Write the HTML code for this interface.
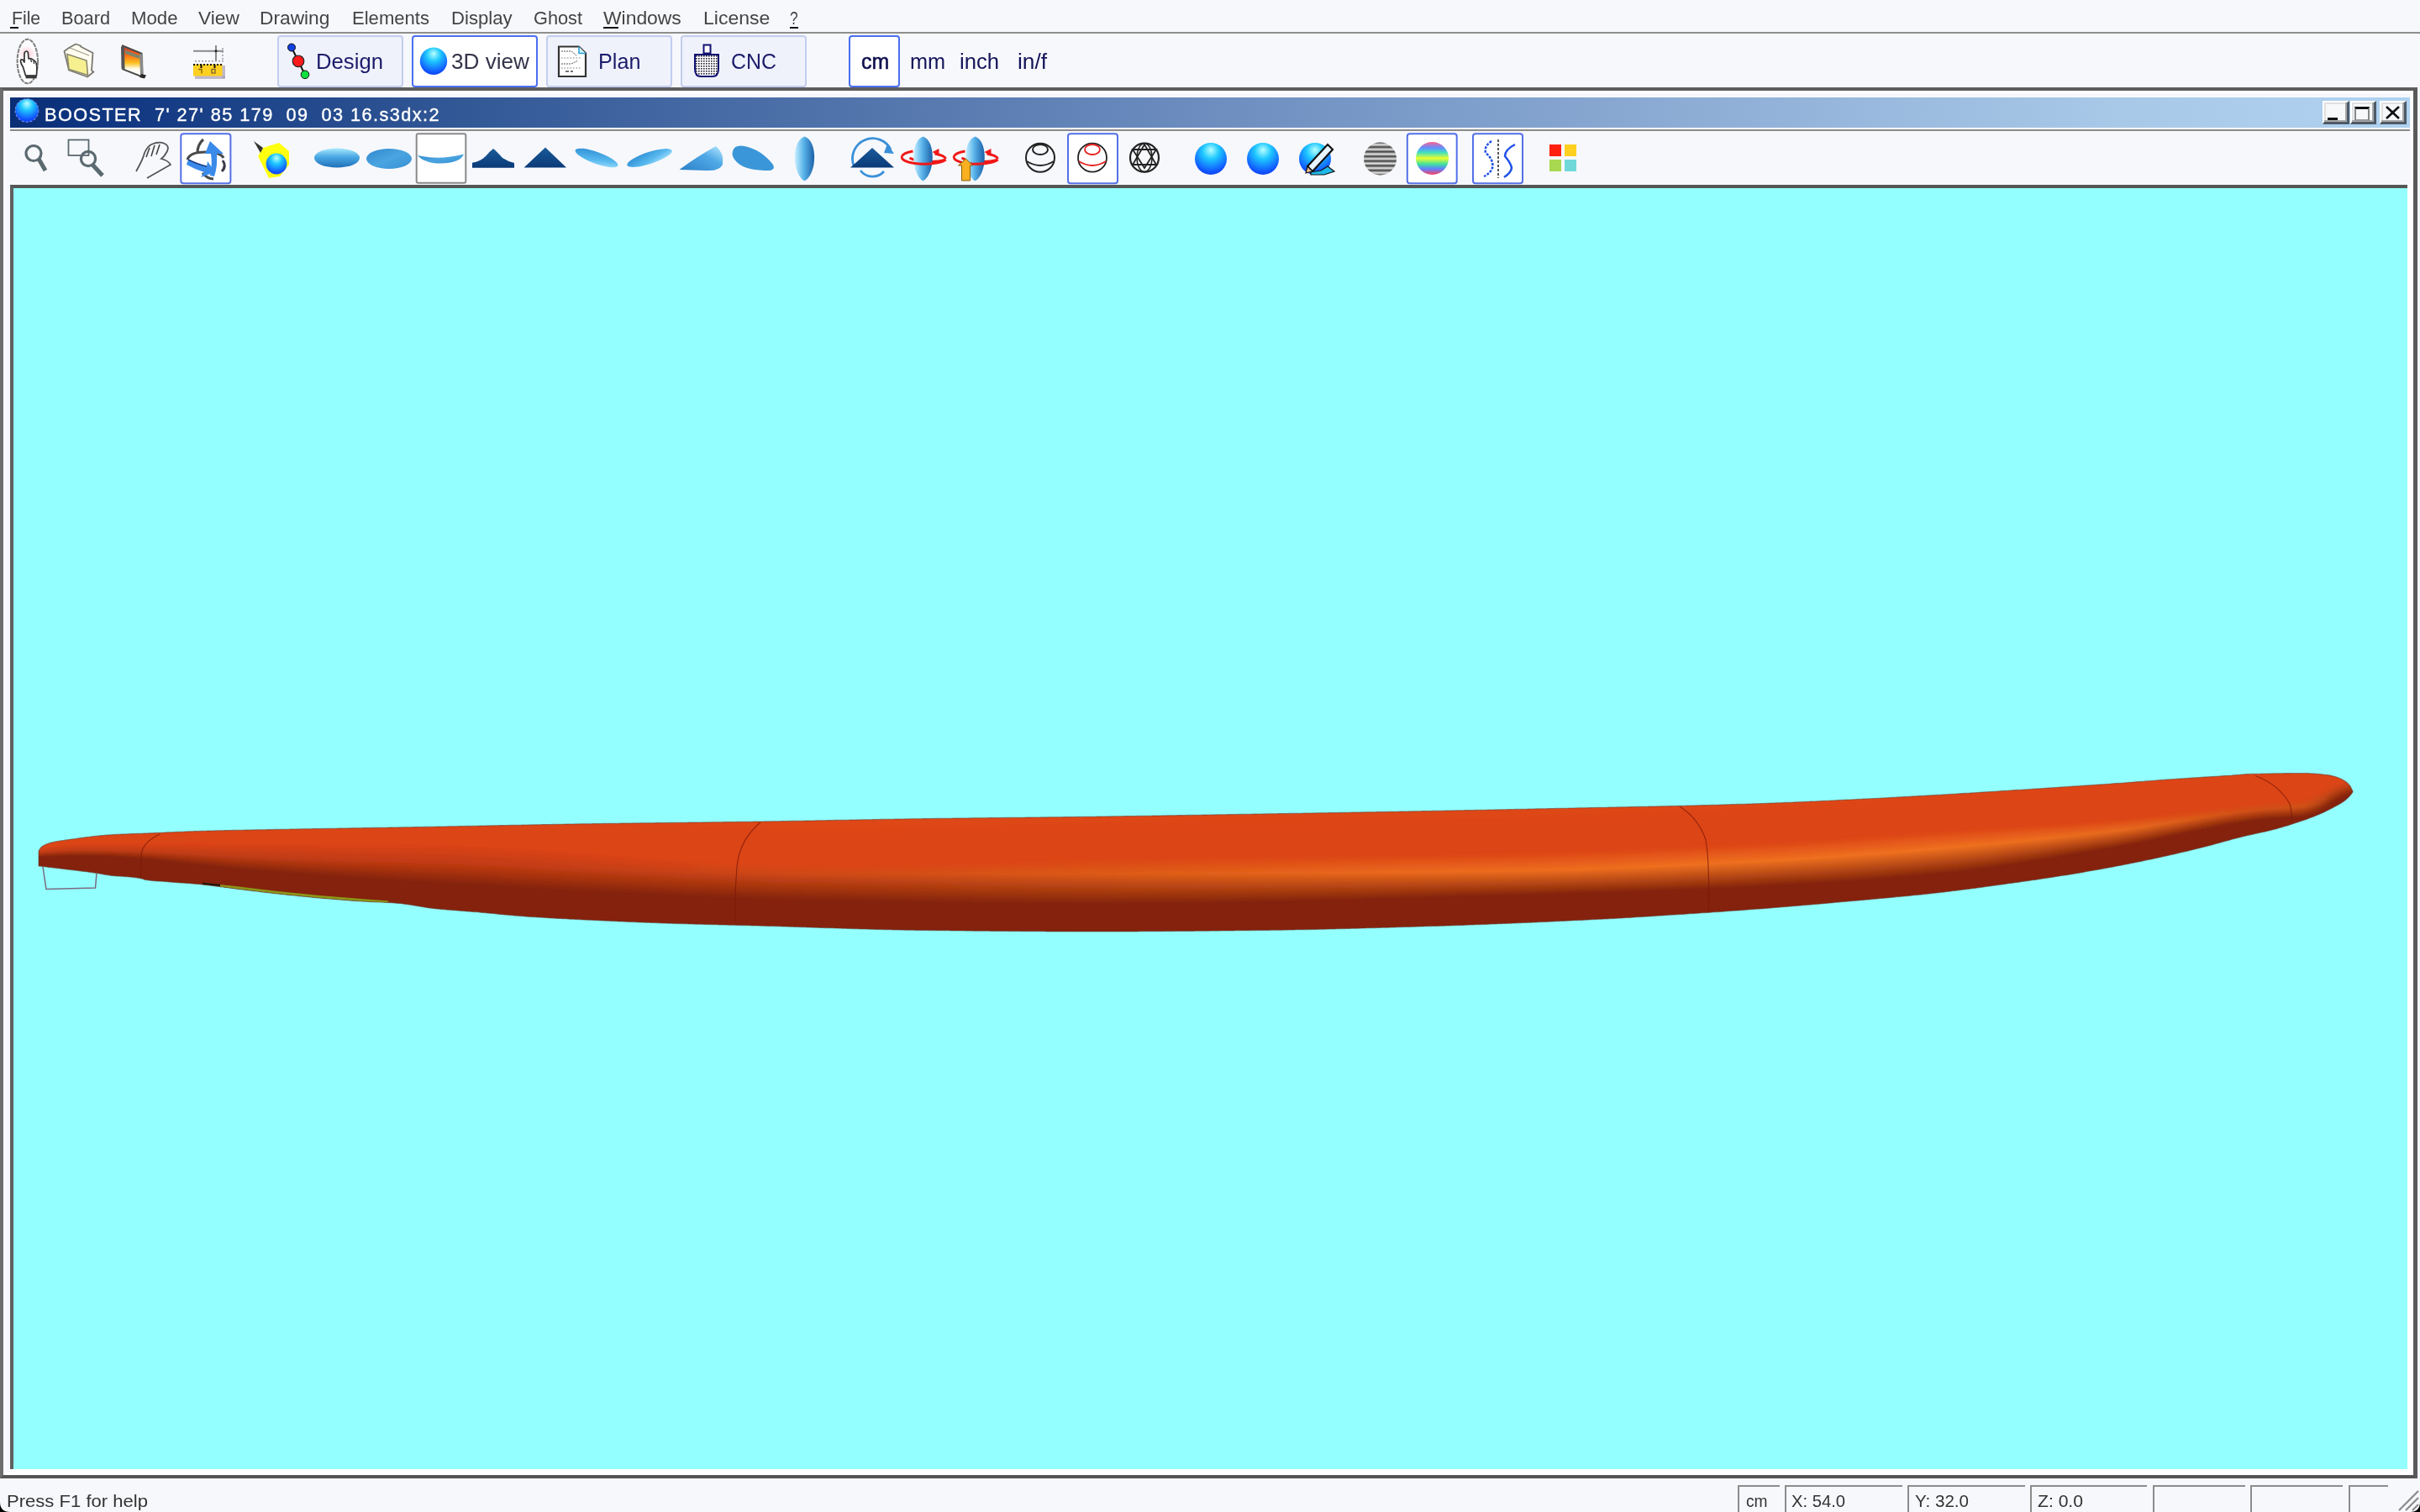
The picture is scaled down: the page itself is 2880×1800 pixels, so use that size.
<!DOCTYPE html>
<html><head><meta charset="utf-8"><style>
html,body{margin:0;padding:0;}
body{width:2880px;height:1800px;position:relative;overflow:hidden;background:#f7f8fc;font-family:"Liberation Sans", sans-serif;}
.r{position:absolute;}
.t{position:absolute;white-space:nowrap;line-height:1;}
.t span{display:inline-block;transform-origin:0 0;}
</style></head><body>
<div class="t" style="left:13.5px;top:11.38px;font-size:22px;color:#444444;font-weight:normal;"><span style="transform:scaleX(0.9618)">File</span></div><div class="t" style="left:73px;top:11.38px;font-size:22px;color:#444444;font-weight:normal;"><span style="transform:scaleX(0.9878)">Board</span></div><div class="t" style="left:156.2px;top:11.38px;font-size:22px;color:#444444;font-weight:normal;"><span style="transform:scaleX(1.0100)">Mode</span></div><div class="t" style="left:235.7px;top:11.38px;font-size:22px;color:#444444;font-weight:normal;"><span style="transform:scaleX(1.0318)">View</span></div><div class="t" style="left:309.3px;top:11.38px;font-size:22px;color:#444444;font-weight:normal;"><span style="transform:scaleX(1.0334)">Drawing</span></div><div class="t" style="left:419px;top:11.38px;font-size:22px;color:#444444;font-weight:normal;"><span style="transform:scaleX(1.0031)">Elements</span></div><div class="t" style="left:537.4px;top:11.38px;font-size:22px;color:#444444;font-weight:normal;"><span style="transform:scaleX(1.0064)">Display</span></div><div class="t" style="left:635px;top:11.38px;font-size:22px;color:#444444;font-weight:normal;"><span style="transform:scaleX(0.9880)">Ghost</span></div><div class="t" style="left:717.9px;top:11.38px;font-size:22px;color:#444444;font-weight:normal;"><span style="transform:scaleX(1.0398)">Windows</span></div><div class="t" style="left:836.9px;top:11.38px;font-size:22px;color:#444444;font-weight:normal;"><span style="transform:scaleX(1.0469)">License</span></div><div class="t" style="left:940.4px;top:11.38px;font-size:22px;color:#444444;font-weight:normal;"><span style="transform:scaleX(0.7837)">?</span></div><div class="r" style="left:12px;top:32px;width:10px;height:2px;background:#111"></div><div class="r" style="left:718px;top:32px;width:18px;height:2px;background:#111"></div><div class="r" style="left:940px;top:32px;width:10px;height:2px;background:#111"></div><div class="r" style="left:0;top:38px;width:2880px;height:2px;background:#8e8e8e"></div><div class="r" style="left:330px;top:42px;width:150px;height:62px;box-sizing:border-box;border:2px solid #c3cdf0;border-radius:4px;background:#eff2fb"></div><div class="r" style="left:490px;top:42px;width:150px;height:62px;box-sizing:border-box;border:2px solid #4b6ff0;border-radius:4px;background:#ffffff"></div><div class="r" style="left:650px;top:42px;width:150px;height:62px;box-sizing:border-box;border:2px solid #c3cdf0;border-radius:4px;background:#eff2fb"></div><div class="r" style="left:810px;top:42px;width:150px;height:62px;box-sizing:border-box;border:2px solid #c3cdf0;border-radius:4px;background:#eff2fb"></div><div class="r" style="left:1010px;top:42px;width:61px;height:62px;box-sizing:border-box;border:2px solid #4b6ff0;border-radius:4px;background:#ffffff"></div><div class="t" style="left:375.5px;top:59.99px;font-size:26px;color:#1c1c6a;font-weight:normal;"><span style="transform:scaleX(0.9884)">Design</span></div><div class="t" style="left:537px;top:59.99px;font-size:26px;color:#34344a;font-weight:normal;"><span style="transform:scaleX(1.0056)">3D view</span></div><div class="t" style="left:711.6px;top:59.99px;font-size:26px;color:#1c1c6a;font-weight:normal;"><span style="transform:scaleX(0.9684)">Plan</span></div><div class="t" style="left:869.7px;top:59.99px;font-size:26px;color:#1c1c6a;font-weight:normal;"><span style="transform:scaleX(0.9584)">CNC</span></div><div class="t" style="left:1024.8px;top:59.99px;font-size:26px;color:#101050;font-weight:normal;-webkit-text-stroke:0.6px #101050;"><span style="transform:scaleX(0.9575)">cm</span></div><div class="t" style="left:1082.7px;top:59.99px;font-size:26px;color:#14145a;font-weight:normal;"><span style="transform:scaleX(0.9740)">mm</span></div><div class="t" style="left:1142.4px;top:59.99px;font-size:26px;color:#14145a;font-weight:normal;"><span style="transform:scaleX(0.9874)">inch</span></div><div class="t" style="left:1210.6px;top:59.99px;font-size:26px;color:#14145a;font-weight:normal;"><span style="transform:scaleX(1.0119)">in/f</span></div><div class="r" style="left:0;top:104px;width:2877px;height:1656px;box-sizing:border-box;border-top:4px solid #5e5e5e;border-left:4px solid #6e6e6e;border-right:5px solid #5a5a5a;border-bottom:4px solid #555"></div><div class="r" style="left:4px;top:108px;width:2868px;height:1648px;background:#f7f8fc;box-sizing:border-box;border:3px solid #ffffff"></div><div class="r" style="left:2865px;top:220px;width:7px;height:1536px;background:#ffffff"></div><div class="r" style="left:12px;top:1749px;width:2860px;height:7px;background:#ffffff"></div><div class="r" style="left:12px;top:116px;width:2856px;height:36px;background:linear-gradient(to right,#0a2e74 0%,#0e3480 3.1%,#325896 18.8%,#6e8ec0 50.3%,#a8c8e8 87.5%,#b0d2f0 100%)"></div><div class="t" style="left:53px;top:126.15px;font-size:22.5px;color:#ffffff;font-weight:normal;letter-spacing:1.5px;-webkit-text-stroke:0.4px #ffffff;"><span style="transform:scaleX(0.9635)">BOOSTER&nbsp; 7' 27' 85 179&nbsp; 09&nbsp; 03 16.s3dx:2</span></div><svg class="r" style="left:16px;top:116px" width="32" height="32" viewBox="0 0 32 32"><defs><radialGradient id="tsph" cx="0.5" cy="0.3" r="0.75" fx="0.5" fy="0.2"><stop offset="0" stop-color="#c0ffff"/><stop offset="0.35" stop-color="#20c8ff"/><stop offset="0.85" stop-color="#1048ff"/><stop offset="1" stop-color="#1040e0"/></radialGradient></defs><circle cx="16" cy="15.5" r="13.8" fill="url(#tsph)" stroke="#6a8ae8" stroke-width="1.2" stroke-dasharray="3 2"/></svg><div class="r" style="left:2764px;top:120px;width:32px;height:28px;box-sizing:border-box;background:#f6f8fa;border-top:2px solid #ffffff;border-left:2px solid #ffffff;border-right:3px solid #4e5a68;border-bottom:3px solid #4e5a68;box-shadow:inset -2px -2px 0 #a8a8a8, inset 2px 2px 0 #e0e0e0"></div><div class="r" style="left:2770px;top:140px;width:12px;height:3px;background:#111"></div><div class="r" style="left:2797px;top:120px;width:31px;height:28px;box-sizing:border-box;background:#f6f8fa;border-top:2px solid #ffffff;border-left:2px solid #ffffff;border-right:3px solid #4e5a68;border-bottom:3px solid #4e5a68;box-shadow:inset -2px -2px 0 #a8a8a8, inset 2px 2px 0 #e0e0e0"></div><div class="r" style="left:2802px;top:127px;width:18px;height:17px;box-sizing:border-box;border-top:3px solid #111;border-left:2px solid #888;border-right:2px solid #888;border-bottom:2px solid #999"></div><div class="r" style="left:2832px;top:120px;width:32px;height:28px;box-sizing:border-box;background:#f6f8fa;border-top:2px solid #ffffff;border-left:2px solid #ffffff;border-right:3px solid #4e5a68;border-bottom:3px solid #4e5a68;box-shadow:inset -2px -2px 0 #a8a8a8, inset 2px 2px 0 #e0e0e0"></div><svg class="r" style="left:2832px;top:120px" width="32" height="28"><path d="M8,7 L23,21 M23,7 L8,21" stroke="#111" stroke-width="2.6"/><circle cx="15.5" cy="14" r="2.2" fill="#111"/></svg><div class="r" style="left:12px;top:154px;width:2856px;height:2px;background:#8a8a8a"></div><div class="r" style="left:12px;top:220px;width:2853px;height:1529px;background:#94ffff;box-sizing:border-box;border-top:4px solid #555;border-left:4px solid #606060"></div><svg class="r" style="left:0;top:0" width="2880" height="240" viewBox="0 0 2880 240"><defs><radialGradient id="sph" cx="0.5" cy="0.3" r="0.75" fx="0.5" fy="0.21999999999999997">
<stop offset="0" stop-color="#b8ffff"/><stop offset="0.35" stop-color="#1ec8ff"/><stop offset="0.85" stop-color="#1050ff"/><stop offset="1" stop-color="#1040e0"/></radialGradient><linearGradient id="lensV" x1="0" x2="1" y1="0" y2="0"><stop offset="0" stop-color="#c8f0ff"/><stop offset="0.45" stop-color="#5ab4ea"/><stop offset="1" stop-color="#1a60a8"/></linearGradient><linearGradient id="ellH" x1="0" x2="0" y1="0" y2="1"><stop offset="0" stop-color="#a8eaff"/><stop offset="0.45" stop-color="#4aa8e4"/><stop offset="1" stop-color="#2070b8"/></linearGradient><linearGradient id="ellH2" x1="0" x2="1" y1="0" y2="1"><stop offset="0" stop-color="#2e88cc"/><stop offset="0.5" stop-color="#4aa4e0"/><stop offset="1" stop-color="#3890d4"/></linearGradient><linearGradient id="tri" x1="0" x2="0" y1="0" y2="1"><stop offset="0" stop-color="#1a5a9a"/><stop offset="1" stop-color="#0a3a78"/></linearGradient><linearGradient id="tiltE" x1="0" x2="1" y1="0" y2="1"><stop offset="0" stop-color="#2888d0"/><stop offset="0.6" stop-color="#58b8ee"/><stop offset="1" stop-color="#b0e8ff"/></linearGradient><linearGradient id="wedge" x1="0" x2="1" y1="1" y2="0"><stop offset="0" stop-color="#2a80c8"/><stop offset="0.6" stop-color="#50a8e6"/><stop offset="1" stop-color="#b8eaff"/></linearGradient><linearGradient id="flop" x1="0" x2="0" y1="0" y2="1"><stop offset="0" stop-color="#c04040"/><stop offset="0.25" stop-color="#ff5a10"/><stop offset="0.55" stop-color="#ffc020"/><stop offset="0.75" stop-color="#fffff0"/><stop offset="1" stop-color="#ffffff"/></linearGradient><linearGradient id="rainb" x1="0" x2="0" y1="0" y2="1"><stop offset="0" stop-color="#ff6090"/><stop offset="0.18" stop-color="#6090ff"/><stop offset="0.32" stop-color="#40e0c0"/><stop offset="0.5" stop-color="#e8ff30"/><stop offset="0.68" stop-color="#40e0a0"/><stop offset="0.82" stop-color="#6080ff"/><stop offset="1" stop-color="#ff4060"/></linearGradient><linearGradient id="stripe" x1="0" x2="0" y1="0" y2="1"><stop offset="0.000" stop-color="#404040"/><stop offset="0.071" stop-color="#e8e8e8"/><stop offset="0.143" stop-color="#404040"/><stop offset="0.214" stop-color="#e8e8e8"/><stop offset="0.286" stop-color="#404040"/><stop offset="0.357" stop-color="#e8e8e8"/><stop offset="0.429" stop-color="#404040"/><stop offset="0.500" stop-color="#e8e8e8"/><stop offset="0.571" stop-color="#404040"/><stop offset="0.643" stop-color="#e8e8e8"/><stop offset="0.714" stop-color="#404040"/><stop offset="0.786" stop-color="#e8e8e8"/><stop offset="0.857" stop-color="#404040"/><stop offset="0.929" stop-color="#e8e8e8"/><stop offset="1.000" stop-color="#404040"/></linearGradient><radialGradient id="pinkg" cx="0.5" cy="0.5" r="0.5"><stop offset="0" stop-color="#ffb8c4" stop-opacity="0.9"/><stop offset="1" stop-color="#ffd0d8" stop-opacity="0"/></radialGradient><pattern id="dots" width="3" height="3" patternUnits="userSpaceOnUse"><rect width="3" height="3" fill="#fff"/><rect width="1.6" height="1.6" fill="#223"/></pattern></defs><ellipse cx="32.8" cy="73" rx="12.2" ry="26.3" fill="#fdfdff" stroke="#7e7e7e" stroke-width="2" stroke-dasharray="5 1"/>
<ellipse cx="32" cy="64" rx="11" ry="10" fill="url(#pinkg)"/>
<path d="M30.5,90 L27.5,80 Q25,76 24.5,73 Q24.5,70 27,71 L29,74 L29,64 Q29.5,61 31.5,61 Q33.5,61 33.5,64 L34,70 Q37,69 39,71 Q42,72 43,75 Q44.5,79 43.8,84 L43.5,90 Z" fill="#fff" stroke="#333" stroke-width="1.7" stroke-linejoin="round"/>
<path d="M36.5,70.5 L37.5,74 M40,72 L40.5,76" stroke="#333" stroke-width="1.3"/>
<rect x="30.5" y="89.5" width="13.2" height="3.8" fill="#3a3a3a"/><path d="M76.5,61 L82,57 L90,52.5 L95,54 L97,56 L110.5,63 L109,84 L111.5,85.5 L104,91.5 L82,83.5 Z" fill="#fffdf0" stroke="#7a7a72" stroke-width="1.8" stroke-linejoin="round"/>
<path d="M80,64.5 L103,72 L104.5,89.5 L82,82.5 Z" fill="#f6f090" stroke="#8a8a70" stroke-width="1.6"/>
<path d="M83,57 L106,66" stroke="#9a9a90" stroke-width="1.2"/><path d="M146,54.5 L168.5,63.8 L169.5,91.5 L146.2,82.4 Z" fill="url(#flop)" stroke="#4a4a4a" stroke-width="2"/>
<path d="M144,55.5 L148,54.5 L148.5,83 L144.5,81.5 Z" fill="#555"/>
<path d="M149,59.5 L166,66 L166,70 L149,64 Z" fill="#6a8a78" opacity="0.85"/>
<path d="M166,64 L170,64.5 L170.5,91 L167,89 Z" fill="#8a8a8a"/>
<path d="M168,88 L174,89.5 L172,93.5 L166,92 Z" fill="#2a2a2a"/><line x1="230" y1="60.8" x2="266" y2="60.8" stroke="#8a8a8a" stroke-width="2"/>
<line x1="257" y1="54" x2="257" y2="73" stroke="#8a8a8a" stroke-width="2"/>
<circle cx="257" cy="60.8" r="1.5" fill="#222"/>
<line x1="232" y1="72.8" x2="266" y2="72.8" stroke="#9a9aa8" stroke-width="1.5" stroke-dasharray="2 2"/>
<line x1="265" y1="57" x2="265" y2="73" stroke="#9a9aa8" stroke-width="1.5" stroke-dasharray="2 2"/>
<rect x="232" y="90" width="36" height="4" fill="#a8a0b8" opacity="0.7"/>
<rect x="264" y="78" width="4" height="15" fill="#a8a0b8" opacity="0.7"/>
<rect x="230" y="76.5" width="34.5" height="14" fill="#ffd020"/>
<line x1="230" y1="77" x2="264" y2="77" stroke="#111" stroke-width="2" stroke-dasharray="2 2"/>
<rect x="238.5" y="77" width="2" height="4" fill="#111"/><rect x="254.5" y="77" width="2" height="4" fill="#111"/>
<path d="M236,82.5 h4 v5" fill="none" stroke="#8a6a10" stroke-width="1.4"/>
<rect x="252" y="82.5" width="4" height="4.5" fill="none" stroke="#8a6a30" stroke-width="1.4"/><line x1="347" y1="56.5" x2="363" y2="89" stroke="#111" stroke-width="2"/>
<circle cx="347" cy="56.5" r="4.5" fill="#1040e0" stroke="#111" stroke-width="1"/>
<circle cx="355" cy="72.8" r="6.8" fill="#ff1a1a" stroke="#222" stroke-width="1.2"/>
<circle cx="363" cy="88.8" r="4.8" fill="#10e040" stroke="#111" stroke-width="1"/><circle cx="516" cy="72.8" r="16.2" fill="url(#sph)"/><path d="M665,55.5 L689,55.5 L697,63.5 L697,91 L665,91 Z" fill="#fff" stroke="#333" stroke-width="2.2"/>
<path d="M689,55.5 L689,63.5 L697,63.5" fill="#cfefff" stroke="#2aa0d0" stroke-width="1.5"/>
<path d="M668,61 h12 l6,5" fill="none" stroke="#555" stroke-width="1" stroke-dasharray="2 1"/>
<path d="M668,69 h24" fill="none" stroke="#777" stroke-width="1" stroke-dasharray="1.5 2"/>
<path d="M668,76 h12 l8,-4" fill="none" stroke="#555" stroke-width="1" stroke-dasharray="2 1"/>
<path d="M668,81 h24" fill="none" stroke="#777" stroke-width="1" stroke-dasharray="1.5 2"/>
<path d="M673,85 h4 M679,85 h3" stroke="#444" stroke-width="1.5"/><rect x="837.5" y="53.5" width="8" height="10" fill="#fff" stroke="#101070" stroke-width="2"/>
<path d="M827,65 L855,65 L855,82 Q855,91 848,91 L834,91 Q827,91 827,82 Z" fill="url(#dots)" stroke="#101070" stroke-width="2"/><rect x="215.3" y="159.2" width="59.099999999999966" height="59" rx="3" fill="#ffffff" stroke="#5470e8" stroke-width="2"/><rect x="495.7" y="159.2" width="58.6" height="58.6" rx="2" fill="#ffffff" stroke="#8a8a8a" stroke-width="2"/><rect x="1271" y="159.2" width="59" height="59" rx="3" fill="#ffffff" stroke="#5470e8" stroke-width="2"/><rect x="1674.8" y="159.2" width="58.90000000000009" height="59" rx="3" fill="#ffffff" stroke="#5470e8" stroke-width="2"/><rect x="1753" y="159.2" width="59" height="59" rx="3" fill="#ffffff" stroke="#5470e8" stroke-width="2"/><circle cx="40" cy="182.5" r="9" fill="none" stroke="#5a6a70" stroke-width="3.2"/>
<line x1="46" y1="189" x2="54" y2="203" stroke="#5a6a70" stroke-width="5" stroke-linecap="butt"/><rect x="81.5" y="166.5" width="24" height="18.5" fill="none" stroke="#5a6a70" stroke-width="1.8"/>
<circle cx="105" cy="189" r="8.6" fill="none" stroke="#5a6a70" stroke-width="3.2"/>
<line x1="110" y1="196" x2="122" y2="209" stroke="#5a6a70" stroke-width="5"/><path d="M162,204 Q170,190 172,182 Q175,175 180,172 L186,170 Q192,169 196,171 Q202,174 199,180 Q196,186 192,189 Q200,191 203,196 L175,212" fill="none" stroke="#555" stroke-width="1.8"/>
<path d="M178,176 L174,187 M184,173 L180,186 M190,172 L186,184" stroke="#444" stroke-width="1.6"/><path d="M242,166 Q235,172 235,182" fill="none" stroke="#4a4a4a" stroke-width="3.2"/>
<path d="M223,190 Q226,181 244,181 Q262,181 266,188" fill="none" stroke="#4a4a4a" stroke-width="3.2"/>
<path d="M265,191 Q270,198 264,204" fill="none" stroke="#3a3a4a" stroke-width="3"/>
<path d="M241,206 Q247,213 254,213" fill="none" stroke="#4a4a4a" stroke-width="3.2"/>
<path d="M250,168 L266,183 L258,183 Q259,198 255,210 L250,209 Q253,196 251,183 L244,183 Z" fill="#3a8aea"/>
<path d="M224,190 Q236,196 246,198 L247,192 L256,205 L239,211 L243,205 Q233,202 222,196 Z" fill="#3a8aea"/>
<path d="M246,198 Q236,196 224,190" fill="none" stroke="#1a3a8a" stroke-width="1.5"/><path d="M313,176 L332,170 L344,180 L344,196 L333,210 L320,212 L307,186 Z" fill="#ffff10"/>
<path d="M302,168 L313,176 L310,182 Z" fill="#333"/>
<circle cx="329" cy="195" r="12.4" fill="url(#sph)"/><ellipse cx="401" cy="188" rx="27" ry="11.5" fill="url(#ellH)"/><ellipse cx="463" cy="189" rx="27" ry="12" fill="url(#ellH2)"/><path d="M497,185 Q524,191 552,183.5 Q548,194 524,194.5 Q504,194 497,185 Z" fill="url(#ellH2)"/><path d="M562,199.7 L562,193.8 Q572,192 578,186 Q583,180 587,177 Q591,180 598,188 Q604,192 612,194 L612,199.7 Z" fill="url(#tri)"/><path d="M623.6,199.6 L649,175.5 L674,199.6 Z" fill="url(#tri)"/><ellipse cx="710" cy="188" rx="27" ry="7" transform="rotate(20 710 188)" fill="url(#tiltE)"/><ellipse cx="773" cy="188" rx="28" ry="7" transform="rotate(-18 773 188)" fill="url(#tiltE)"/><path d="M808.5,202 Q830,186 852,174 Q862,182 860,196 Q856,204 840,203 Z" fill="url(#wedge)"/><path d="M872,180 Q874,172 886,174 Q906,178 920,196 Q924,204 910,203 Q884,202 876,192 Q870,186 872,180 Z" fill="#3a96d8"/><path d="M957.5,162.5 C974,168 972,208 957.5,215.5 C943,208 941,168 957.5,162.5 Z" fill="url(#lensV)"/><path d="M1016,197 A24,24 0 0 1 1060,178" fill="none" stroke="#3a90d8" stroke-width="2.8"/>
<path d="M1056,171 L1064,183 L1052,182 Z" fill="#3a90d8"/>
<path d="M1024,203 A18,18 0 0 0 1052,204" fill="none" stroke="#3a90d8" stroke-width="2.8"/>
<path d="M1012,199.6 L1038,176 L1064,199.6 Z" fill="url(#tri)"/><path d="M1082.5,188 A27,8 0 0 0 1125.5,190" fill="none" stroke="#f01818" stroke-width="2.8"/>
<path d="M1098.5,162.5 C1114.5,168 1112.5,208 1098.5,215.5 C1084.5,208 1082.5,168 1098.5,162.5 Z" fill="url(#lensV)"/>
<path d="M1073.5,186 A27,8 0 0 0 1125.5,190" fill="none" stroke="#f01818" stroke-width="3"/>
<path d="M1073.5,186 A27,8 0 0 1 1086.5,180" fill="none" stroke="#f01818" stroke-width="3"/>
<path d="M1112.5,183 A27,8 0 0 1 1125.5,189" fill="none" stroke="#f01818" stroke-width="3"/>
<path d="M1109.5,181 L1117.5,177 L1117.5,186 Z" fill="#f01818"/><path d="M1144.5,188 A27,8 0 0 0 1187.5,190" fill="none" stroke="#f01818" stroke-width="2.8"/>
<path d="M1160.5,162.5 C1176.5,168 1174.5,208 1160.5,215.5 C1146.5,208 1144.5,168 1160.5,162.5 Z" fill="url(#lensV)"/>
<path d="M1135.5,186 A27,8 0 0 0 1187.5,190" fill="none" stroke="#f01818" stroke-width="3"/>
<path d="M1135.5,186 A27,8 0 0 1 1148.5,180" fill="none" stroke="#f01818" stroke-width="3"/>
<path d="M1174.5,183 A27,8 0 0 1 1187.5,189" fill="none" stroke="#f01818" stroke-width="3"/>
<path d="M1171.5,181 L1179.5,177 L1179.5,186 Z" fill="#f01818"/><path d="M1149.5,189 L1157.5,197 L1154.5,197 L1154.5,215 L1144.5,215 L1144.5,197 L1140.5,197 Z" fill="#f8b020" stroke="#8a6010" stroke-width="1"/><circle cx="1238" cy="187.7" r="17" fill="none" stroke="#222" stroke-width="2"/>
<ellipse cx="1238" cy="178" rx="9" ry="6" fill="none" stroke="#222" stroke-width="2"/>
<path d="M1222,192 Q1238,202 1254,192" fill="none" stroke="#222" stroke-width="2"/><circle cx="1300" cy="187.7" r="17" fill="none" stroke="#222" stroke-width="1.8"/>
<ellipse cx="1300" cy="178" rx="9" ry="6" fill="none" stroke="#e82020" stroke-width="1.8"/>
<path d="M1284,192 Q1300,202 1316,192" fill="none" stroke="#e82020" stroke-width="1.8"/><circle cx="1362" cy="187.7" r="17" fill="none" stroke="#222" stroke-width="2.2"/>
<path d="M1348,178 L1376,178 L1362,200 Z M1348,196 L1376,196 L1362,172 Z" fill="none" stroke="#222" stroke-width="1.8"/>
<ellipse cx="1362" cy="187.7" rx="9" ry="17" fill="none" stroke="#222" stroke-width="1.5"/><circle cx="1441" cy="189" r="19" fill="url(#sph)"/><circle cx="1503" cy="189" r="19" fill="url(#sph)"/><circle cx="1565" cy="189" r="19" fill="url(#sph)"/>
<path d="M1556,198 L1580,172 L1586,178 L1562,204 Z" fill="#e8f4ff" stroke="#111" stroke-width="2.2"/>
<path d="M1556,198 L1562,204 L1554,206 Z" fill="#f0c090" stroke="#111" stroke-width="1.2"/>
<path d="M1560,205 L1572,203 L1580,198 L1588,204 L1576,208 L1560,208 Z" fill="#20b8e8" stroke="#111" stroke-width="1.2"/><circle cx="1642.5" cy="189" r="19.5" fill="url(#stripe)"/><circle cx="1704.5" cy="188.5" r="19.5" fill="url(#rainb)"/><line x1="1783" y1="166" x2="1783" y2="212" stroke="#222" stroke-width="1.5" stroke-dasharray="3 2"/>
<path d="M1775,168 Q1766,174 1768,182 Q1778,190 1776,200 Q1774,206 1766,210" fill="none" stroke="#2050e8" stroke-width="2.5" stroke-dasharray="3 1.5"/>
<path d="M1803,172 Q1791,178 1791,186 Q1798,194 1799,200 Q1798,206 1790,211" fill="none" stroke="#2050e8" stroke-width="2.5"/><rect x="1844" y="172" width="14" height="14" fill="#ff2010"/>
<rect x="1862" y="172" width="14" height="14" fill="#ffd020"/>
<rect x="1844" y="190" width="14" height="14" fill="#a8d850"/>
<rect x="1862" y="190" width="14" height="14" fill="#70d8d8"/></svg><div class="t" style="left:8px;top:1776.22px;font-size:21px;color:#333333;font-weight:normal;"><span style="transform:scaleX(1.0506)">Press F1 for help</span></div><div class="r" style="left:2068px;top:1768px;width:50px;height:40px;box-sizing:border-box;border-top:2px solid #8c8c8c;border-left:2px solid #8c8c8c"></div><div class="r" style="left:2124px;top:1768px;width:140px;height:40px;box-sizing:border-box;border-top:2px solid #8c8c8c;border-left:2px solid #8c8c8c"></div><div class="r" style="left:2270px;top:1768px;width:140px;height:40px;box-sizing:border-box;border-top:2px solid #8c8c8c;border-left:2px solid #8c8c8c"></div><div class="r" style="left:2416px;top:1768px;width:139px;height:40px;box-sizing:border-box;border-top:2px solid #8c8c8c;border-left:2px solid #8c8c8c"></div><div class="r" style="left:2562px;top:1768px;width:110px;height:40px;box-sizing:border-box;border-top:2px solid #8c8c8c;border-left:2px solid #8c8c8c"></div><div class="r" style="left:2678px;top:1768px;width:110px;height:40px;box-sizing:border-box;border-top:2px solid #8c8c8c;border-left:2px solid #8c8c8c"></div><div class="r" style="left:2795px;top:1768px;width:47px;height:40px;box-sizing:border-box;border-top:2px solid #8c8c8c;border-left:2px solid #8c8c8c"></div><div class="t" style="left:2078px;top:1776.22px;font-size:21px;color:#333333;font-weight:normal;"><span style="transform:scaleX(0.9143)">cm</span></div><div class="t" style="left:2132px;top:1776.22px;font-size:21px;color:#333333;font-weight:normal;"><span style="transform:scaleX(0.9615)">X: 54.0</span></div><div class="t" style="left:2278.8px;top:1776.22px;font-size:21px;color:#333333;font-weight:normal;"><span style="transform:scaleX(0.9787)">Y: 32.0</span></div><div class="t" style="left:2424.6px;top:1776.22px;font-size:21px;color:#333333;font-weight:normal;"><span style="transform:scaleX(1.0055)">Z: 0.0</span></div><svg class="r" style="left:2850px;top:1770px" width="30" height="30"><path d="M5,28 L28,5 M13,28 L28,13 M21,28 L28,21" stroke="#8a8a8a" stroke-width="2.2"/></svg><svg class="r" style="left:0;top:1788px" width="14" height="12"><path d="M0,0 Q0,12 12,12 L0,12 Z" fill="#000"/></svg><svg class="r" style="left:2866px;top:1788px" width="14" height="12"><path d="M14,0 Q14,12 2,12 L14,12 Z" fill="#000"/></svg><svg class="r" style="left:0;top:0" width="2880" height="1800" viewBox="0 0 2880 1800">
<defs>
<path id="bp" d="M46,1031 L46,1013.0 L49.0,1008.5 L52.0,1006.5 L55.0,1005.1 L58.0,1004.0 L61.0,1003.1 L64.0,1002.4 L67.0,1001.8 L70.0,1001.3 L73.0,1000.8 L76.0,1000.4 L79.0,999.9 L82.0,999.5 L85.0,999.1 L88.0,998.7 L91.0,998.3 L94.0,997.8 L97.0,997.4 L100.0,997.0 L103.0,996.6 L106.0,996.3 L109.0,995.9 L112.0,995.5 L115.0,995.2 L118.0,994.9 L121.0,994.6 L124.0,994.4 L127.0,994.1 L130.0,993.9 L133.0,993.8 L136.0,993.6 L139.0,993.4 L142.0,993.3 L145.0,993.1 L148.0,993.0 L151.0,992.9 L154.0,992.8 L157.0,992.6 L160.0,992.5 L163.0,992.4 L166.0,992.3 L169.0,992.2 L172.0,992.1 L175.0,992.0 L178.0,991.8 L181.0,991.7 L184.0,991.6 L187.0,991.5 L190.0,991.3 L193.0,991.2 L196.0,991.1 L199.0,990.9 L202.0,990.8 L205.0,990.7 L208.0,990.5 L211.0,990.4 L214.0,990.3 L217.0,990.2 L220.0,990.0 L223.0,989.9 L226.0,989.8 L229.0,989.7 L232.0,989.6 L235.0,989.5 L238.0,989.4 L241.0,989.3 L244.0,989.2 L247.0,989.1 L250.0,989.1 L253.0,989.0 L256.0,988.9 L259.0,988.8 L262.0,988.8 L265.0,988.7 L268.0,988.6 L271.0,988.6 L274.0,988.5 L277.0,988.4 L280.0,988.4 L283.0,988.3 L286.0,988.2 L289.0,988.2 L292.0,988.1 L295.0,988.1 L298.0,988.0 L301.0,987.9 L304.0,987.9 L307.0,987.8 L310.0,987.8 L313.0,987.7 L316.0,987.7 L319.0,987.6 L322.0,987.6 L325.0,987.5 L328.0,987.4 L331.0,987.4 L334.0,987.3 L337.0,987.3 L340.0,987.2 L343.0,987.2 L346.0,987.1 L349.0,987.0 L352.0,987.0 L355.0,986.9 L358.0,986.9 L361.0,986.8 L364.0,986.8 L367.0,986.7 L370.0,986.7 L373.0,986.6 L376.0,986.6 L379.0,986.5 L382.0,986.5 L385.0,986.4 L388.0,986.4 L391.0,986.3 L394.0,986.3 L397.0,986.2 L400.0,986.2 L403.0,986.1 L406.0,986.1 L409.0,986.0 L412.0,986.0 L415.0,985.9 L418.0,985.9 L421.0,985.8 L424.0,985.8 L427.0,985.7 L430.0,985.7 L433.0,985.6 L436.0,985.6 L439.0,985.5 L442.0,985.5 L445.0,985.4 L448.0,985.4 L451.0,985.3 L454.0,985.3 L457.0,985.2 L460.0,985.2 L463.0,985.1 L466.0,985.1 L469.0,985.0 L472.0,985.0 L475.0,984.9 L478.0,984.9 L481.0,984.8 L484.0,984.8 L487.0,984.7 L490.0,984.7 L493.0,984.6 L496.0,984.6 L499.0,984.5 L502.0,984.5 L505.0,984.4 L508.0,984.4 L511.0,984.3 L514.0,984.2 L517.0,984.2 L520.0,984.1 L523.0,984.1 L526.0,984.0 L529.0,984.0 L532.0,983.9 L535.0,983.8 L538.0,983.8 L541.0,983.7 L544.0,983.7 L547.0,983.6 L550.0,983.5 L553.0,983.5 L556.0,983.4 L559.0,983.4 L562.0,983.3 L565.0,983.2 L568.0,983.2 L571.0,983.1 L574.0,983.1 L577.0,983.0 L580.0,982.9 L583.0,982.9 L586.0,982.8 L589.0,982.8 L592.0,982.7 L595.0,982.6 L598.0,982.6 L601.0,982.5 L604.0,982.5 L607.0,982.4 L610.0,982.3 L613.0,982.3 L616.0,982.2 L619.0,982.2 L622.0,982.1 L625.0,982.0 L628.0,982.0 L631.0,981.9 L634.0,981.9 L637.0,981.8 L640.0,981.7 L643.0,981.7 L646.0,981.6 L649.0,981.6 L652.0,981.5 L655.0,981.5 L658.0,981.4 L661.0,981.4 L664.0,981.3 L667.0,981.2 L670.0,981.2 L673.0,981.1 L676.0,981.1 L679.0,981.0 L682.0,981.0 L685.0,980.9 L688.0,980.9 L691.0,980.8 L694.0,980.8 L697.0,980.7 L700.0,980.7 L703.0,980.7 L706.0,980.6 L709.0,980.6 L712.0,980.5 L715.0,980.5 L718.0,980.4 L721.0,980.4 L724.0,980.3 L727.0,980.3 L730.0,980.3 L733.0,980.2 L736.0,980.2 L739.0,980.1 L742.0,980.1 L745.0,980.1 L748.0,980.0 L751.0,980.0 L754.0,979.9 L757.0,979.9 L760.0,979.9 L763.0,979.8 L766.0,979.8 L769.0,979.8 L772.0,979.7 L775.0,979.7 L778.0,979.7 L781.0,979.6 L784.0,979.6 L787.0,979.5 L790.0,979.5 L793.0,979.5 L796.0,979.4 L799.0,979.4 L802.0,979.4 L805.0,979.3 L808.0,979.3 L811.0,979.3 L814.0,979.2 L817.0,979.2 L820.0,979.1 L823.0,979.1 L826.0,979.1 L829.0,979.0 L832.0,979.0 L835.0,979.0 L838.0,978.9 L841.0,978.9 L844.0,978.9 L847.0,978.8 L850.0,978.8 L853.0,978.7 L856.0,978.7 L859.0,978.7 L862.0,978.6 L865.0,978.6 L868.0,978.5 L871.0,978.5 L874.0,978.5 L877.0,978.4 L880.0,978.4 L883.0,978.3 L886.0,978.3 L889.0,978.3 L892.0,978.2 L895.0,978.2 L898.0,978.1 L901.0,978.1 L904.0,978.0 L907.0,978.0 L910.0,977.9 L913.0,977.9 L916.0,977.9 L919.0,977.8 L922.0,977.8 L925.0,977.7 L928.0,977.7 L931.0,977.6 L934.0,977.5 L937.0,977.5 L940.0,977.4 L943.0,977.4 L946.0,977.3 L949.0,977.3 L952.0,977.2 L955.0,977.2 L958.0,977.1 L961.0,977.1 L964.0,977.0 L967.0,977.0 L970.0,976.9 L973.0,976.8 L976.0,976.8 L979.0,976.7 L982.0,976.7 L985.0,976.6 L988.0,976.6 L991.0,976.5 L994.0,976.4 L997.0,976.4 L1000.0,976.3 L1003.0,976.3 L1006.0,976.2 L1009.0,976.2 L1012.0,976.1 L1015.0,976.0 L1018.0,976.0 L1021.0,975.9 L1024.0,975.9 L1027.0,975.8 L1030.0,975.8 L1033.0,975.7 L1036.0,975.7 L1039.0,975.6 L1042.0,975.6 L1045.0,975.5 L1048.0,975.4 L1051.0,975.4 L1054.0,975.3 L1057.0,975.3 L1060.0,975.2 L1063.0,975.2 L1066.0,975.1 L1069.0,975.1 L1072.0,975.0 L1075.0,975.0 L1078.0,974.9 L1081.0,974.9 L1084.0,974.8 L1087.0,974.8 L1090.0,974.7 L1093.0,974.7 L1096.0,974.7 L1099.0,974.6 L1102.0,974.6 L1105.0,974.5 L1108.0,974.5 L1111.0,974.4 L1114.0,974.4 L1117.0,974.4 L1120.0,974.3 L1123.0,974.3 L1126.0,974.2 L1129.0,974.2 L1132.0,974.2 L1135.0,974.1 L1138.0,974.1 L1141.0,974.1 L1144.0,974.0 L1147.0,974.0 L1150.0,974.0 L1153.0,973.9 L1156.0,973.9 L1159.0,973.8 L1162.0,973.8 L1165.0,973.8 L1168.0,973.7 L1171.0,973.7 L1174.0,973.7 L1177.0,973.6 L1180.0,973.6 L1183.0,973.6 L1186.0,973.5 L1189.0,973.5 L1192.0,973.5 L1195.0,973.4 L1198.0,973.4 L1201.0,973.4 L1204.0,973.3 L1207.0,973.3 L1210.0,973.3 L1213.0,973.2 L1216.0,973.2 L1219.0,973.2 L1222.0,973.1 L1225.0,973.1 L1228.0,973.1 L1231.0,973.0 L1234.0,973.0 L1237.0,973.0 L1240.0,972.9 L1243.0,972.9 L1246.0,972.9 L1249.0,972.8 L1252.0,972.8 L1255.0,972.8 L1258.0,972.7 L1261.0,972.7 L1264.0,972.7 L1267.0,972.6 L1270.0,972.6 L1273.0,972.6 L1276.0,972.5 L1279.0,972.5 L1282.0,972.4 L1285.0,972.4 L1288.0,972.4 L1291.0,972.3 L1294.0,972.3 L1297.0,972.2 L1300.0,972.2 L1303.0,972.2 L1306.0,972.1 L1309.0,972.1 L1312.0,972.0 L1315.0,972.0 L1318.0,971.9 L1321.0,971.9 L1324.0,971.9 L1327.0,971.8 L1330.0,971.8 L1333.0,971.7 L1336.0,971.7 L1339.0,971.6 L1342.0,971.6 L1345.0,971.5 L1348.0,971.5 L1351.0,971.5 L1354.0,971.4 L1357.0,971.4 L1360.0,971.3 L1363.0,971.3 L1366.0,971.2 L1369.0,971.2 L1372.0,971.1 L1375.0,971.1 L1378.0,971.0 L1381.0,971.0 L1384.0,970.9 L1387.0,970.9 L1390.0,970.8 L1393.0,970.8 L1396.0,970.7 L1399.0,970.7 L1402.0,970.6 L1405.0,970.6 L1408.0,970.5 L1411.0,970.5 L1414.0,970.4 L1417.0,970.4 L1420.0,970.3 L1423.0,970.3 L1426.0,970.2 L1429.0,970.2 L1432.0,970.1 L1435.0,970.1 L1438.0,970.0 L1441.0,970.0 L1444.0,969.9 L1447.0,969.9 L1450.0,969.8 L1453.0,969.8 L1456.0,969.7 L1459.0,969.7 L1462.0,969.6 L1465.0,969.6 L1468.0,969.5 L1471.0,969.5 L1474.0,969.4 L1477.0,969.4 L1480.0,969.3 L1483.0,969.3 L1486.0,969.2 L1489.0,969.2 L1492.0,969.1 L1495.0,969.1 L1498.0,969.0 L1501.0,969.0 L1504.0,968.9 L1507.0,968.9 L1510.0,968.8 L1513.0,968.8 L1516.0,968.7 L1519.0,968.7 L1522.0,968.6 L1525.0,968.6 L1528.0,968.5 L1531.0,968.5 L1534.0,968.4 L1537.0,968.4 L1540.0,968.3 L1543.0,968.3 L1546.0,968.2 L1549.0,968.2 L1552.0,968.1 L1555.0,968.1 L1558.0,968.0 L1561.0,968.0 L1564.0,967.9 L1567.0,967.9 L1570.0,967.8 L1573.0,967.8 L1576.0,967.7 L1579.0,967.7 L1582.0,967.6 L1585.0,967.6 L1588.0,967.5 L1591.0,967.5 L1594.0,967.4 L1597.0,967.4 L1600.0,967.3 L1603.0,967.3 L1606.0,967.2 L1609.0,967.1 L1612.0,967.1 L1615.0,967.0 L1618.0,967.0 L1621.0,966.9 L1624.0,966.9 L1627.0,966.8 L1630.0,966.8 L1633.0,966.7 L1636.0,966.7 L1639.0,966.6 L1642.0,966.6 L1645.0,966.5 L1648.0,966.5 L1651.0,966.4 L1654.0,966.3 L1657.0,966.3 L1660.0,966.2 L1663.0,966.2 L1666.0,966.1 L1669.0,966.1 L1672.0,966.0 L1675.0,966.0 L1678.0,965.9 L1681.0,965.9 L1684.0,965.8 L1687.0,965.7 L1690.0,965.7 L1693.0,965.6 L1696.0,965.6 L1699.0,965.5 L1702.0,965.5 L1705.0,965.4 L1708.0,965.3 L1711.0,965.3 L1714.0,965.2 L1717.0,965.2 L1720.0,965.1 L1723.0,965.1 L1726.0,965.0 L1729.0,964.9 L1732.0,964.9 L1735.0,964.8 L1738.0,964.8 L1741.0,964.7 L1744.0,964.6 L1747.0,964.6 L1750.0,964.5 L1753.0,964.5 L1756.0,964.4 L1759.0,964.3 L1762.0,964.3 L1765.0,964.2 L1768.0,964.2 L1771.0,964.1 L1774.0,964.0 L1777.0,964.0 L1780.0,963.9 L1783.0,963.9 L1786.0,963.8 L1789.0,963.7 L1792.0,963.7 L1795.0,963.6 L1798.0,963.5 L1801.0,963.5 L1804.0,963.4 L1807.0,963.4 L1810.0,963.3 L1813.0,963.2 L1816.0,963.2 L1819.0,963.1 L1822.0,963.0 L1825.0,963.0 L1828.0,962.9 L1831.0,962.8 L1834.0,962.8 L1837.0,962.7 L1840.0,962.7 L1843.0,962.6 L1846.0,962.5 L1849.0,962.5 L1852.0,962.4 L1855.0,962.3 L1858.0,962.3 L1861.0,962.2 L1864.0,962.2 L1867.0,962.1 L1870.0,962.0 L1873.0,962.0 L1876.0,961.9 L1879.0,961.8 L1882.0,961.8 L1885.0,961.7 L1888.0,961.7 L1891.0,961.6 L1894.0,961.5 L1897.0,961.5 L1900.0,961.4 L1903.0,961.3 L1906.0,961.3 L1909.0,961.2 L1912.0,961.2 L1915.0,961.1 L1918.0,961.0 L1921.0,961.0 L1924.0,960.9 L1927.0,960.9 L1930.0,960.8 L1933.0,960.7 L1936.0,960.7 L1939.0,960.6 L1942.0,960.6 L1945.0,960.5 L1948.0,960.4 L1951.0,960.4 L1954.0,960.3 L1957.0,960.3 L1960.0,960.2 L1963.0,960.1 L1966.0,960.1 L1969.0,960.0 L1972.0,959.9 L1975.0,959.9 L1978.0,959.8 L1981.0,959.7 L1984.0,959.7 L1987.0,959.6 L1990.0,959.5 L1993.0,959.5 L1996.0,959.4 L1999.0,959.3 L2002.0,959.3 L2005.0,959.2 L2008.0,959.1 L2011.0,959.0 L2014.0,959.0 L2017.0,958.9 L2020.0,958.8 L2023.0,958.7 L2026.0,958.6 L2029.0,958.6 L2032.0,958.5 L2035.0,958.4 L2038.0,958.3 L2041.0,958.2 L2044.0,958.2 L2047.0,958.1 L2050.0,958.0 L2053.0,957.9 L2056.0,957.8 L2059.0,957.7 L2062.0,957.6 L2065.0,957.5 L2068.0,957.4 L2071.0,957.4 L2074.0,957.3 L2077.0,957.2 L2080.0,957.1 L2083.0,957.0 L2086.0,956.9 L2089.0,956.8 L2092.0,956.7 L2095.0,956.6 L2098.0,956.5 L2101.0,956.4 L2104.0,956.3 L2107.0,956.1 L2110.0,956.0 L2113.0,955.9 L2116.0,955.8 L2119.0,955.7 L2122.0,955.6 L2125.0,955.4 L2128.0,955.3 L2131.0,955.2 L2134.0,955.1 L2137.0,954.9 L2140.0,954.8 L2143.0,954.7 L2146.0,954.5 L2149.0,954.4 L2152.0,954.3 L2155.0,954.1 L2158.0,954.0 L2161.0,953.9 L2164.0,953.7 L2167.0,953.6 L2170.0,953.4 L2173.0,953.3 L2176.0,953.2 L2179.0,953.0 L2182.0,952.9 L2185.0,952.7 L2188.0,952.6 L2191.0,952.4 L2194.0,952.3 L2197.0,952.1 L2200.0,952.0 L2203.0,951.9 L2206.0,951.7 L2209.0,951.6 L2212.0,951.4 L2215.0,951.3 L2218.0,951.1 L2221.0,951.0 L2224.0,950.8 L2227.0,950.7 L2230.0,950.5 L2233.0,950.4 L2236.0,950.2 L2239.0,950.0 L2242.0,949.9 L2245.0,949.7 L2248.0,949.6 L2251.0,949.4 L2254.0,949.2 L2257.0,949.1 L2260.0,948.9 L2263.0,948.8 L2266.0,948.6 L2269.0,948.4 L2272.0,948.3 L2275.0,948.1 L2278.0,947.9 L2281.0,947.8 L2284.0,947.6 L2287.0,947.4 L2290.0,947.3 L2293.0,947.1 L2296.0,946.9 L2299.0,946.8 L2302.0,946.6 L2305.0,946.4 L2308.0,946.2 L2311.0,946.1 L2314.0,945.9 L2317.0,945.7 L2320.0,945.5 L2323.0,945.3 L2326.0,945.2 L2329.0,945.0 L2332.0,944.8 L2335.0,944.6 L2338.0,944.4 L2341.0,944.2 L2344.0,944.1 L2347.0,943.9 L2350.0,943.7 L2353.0,943.5 L2356.0,943.3 L2359.0,943.1 L2362.0,942.9 L2365.0,942.7 L2368.0,942.5 L2371.0,942.4 L2374.0,942.2 L2377.0,942.0 L2380.0,941.8 L2383.0,941.6 L2386.0,941.4 L2389.0,941.2 L2392.0,941.0 L2395.0,940.8 L2398.0,940.6 L2401.0,940.4 L2404.0,940.2 L2407.0,940.1 L2410.0,939.9 L2413.0,939.7 L2416.0,939.5 L2419.0,939.3 L2422.0,939.1 L2425.0,938.9 L2428.0,938.7 L2431.0,938.5 L2434.0,938.3 L2437.0,938.1 L2440.0,937.9 L2443.0,937.7 L2446.0,937.5 L2449.0,937.3 L2452.0,937.1 L2455.0,936.9 L2458.0,936.7 L2461.0,936.5 L2464.0,936.3 L2467.0,936.1 L2470.0,935.9 L2473.0,935.7 L2476.0,935.5 L2479.0,935.3 L2482.0,935.1 L2485.0,934.9 L2488.0,934.7 L2491.0,934.5 L2494.0,934.3 L2497.0,934.1 L2500.0,933.9 L2503.0,933.7 L2506.0,933.5 L2509.0,933.3 L2512.0,933.1 L2515.0,932.8 L2518.0,932.6 L2521.0,932.4 L2524.0,932.2 L2527.0,932.0 L2530.0,931.7 L2533.0,931.5 L2536.0,931.3 L2539.0,931.1 L2542.0,930.8 L2545.0,930.6 L2548.0,930.4 L2551.0,930.2 L2554.0,929.9 L2557.0,929.7 L2560.0,929.5 L2563.0,929.3 L2566.0,929.0 L2569.0,928.8 L2572.0,928.6 L2575.0,928.4 L2578.0,928.1 L2581.0,927.9 L2584.0,927.7 L2587.0,927.5 L2590.0,927.3 L2593.0,927.1 L2596.0,926.9 L2599.0,926.7 L2602.0,926.5 L2605.0,926.3 L2608.0,926.1 L2611.0,925.9 L2614.0,925.7 L2617.0,925.5 L2620.0,925.3 L2623.0,925.1 L2626.0,924.9 L2629.0,924.7 L2632.0,924.5 L2635.0,924.4 L2638.0,924.2 L2641.0,924.0 L2644.0,923.8 L2647.0,923.6 L2650.0,923.4 L2653.0,923.2 L2656.0,923.0 L2659.0,922.7 L2662.0,922.5 L2665.0,922.3 L2668.0,922.0 L2671.0,921.8 L2674.0,921.6 L2677.0,921.5 L2680.0,921.4 L2683.0,921.3 L2686.0,921.2 L2689.0,921.2 L2692.0,921.1 L2695.0,921.0 L2698.0,921.0 L2701.0,920.9 L2704.0,920.9 L2707.0,920.8 L2710.0,920.8 L2713.0,920.7 L2716.0,920.7 L2719.0,920.6 L2722.0,920.6 L2725.0,920.6 L2728.0,920.5 L2731.0,920.5 L2734.0,920.5 L2737.0,920.5 L2740.0,920.5 L2743.0,920.5 L2746.0,920.6 L2749.0,920.7 L2752.0,920.9 L2755.0,921.1 L2758.0,921.3 L2761.0,921.6 L2764.0,921.9 L2767.0,922.2 L2770.0,922.6 L2773.0,923.1 L2776.0,923.8 L2779.0,924.6 L2782.0,925.6 L2785.0,926.8 L2788.0,928.2 L2791.0,930.0 L2794.0,932.4 L2797.0,935.8 L2800.0,942.0 L2800.0,943.0 L2797.0,947.0 L2794.0,950.1 L2791.0,952.7 L2788.0,954.9 L2785.0,956.7 L2782.0,958.4 L2779.0,960.0 L2776.0,961.7 L2773.0,963.3 L2770.0,964.8 L2767.0,966.3 L2764.0,967.7 L2761.0,969.1 L2758.0,970.3 L2755.0,971.6 L2752.0,972.7 L2749.0,973.8 L2746.0,974.9 L2743.0,976.0 L2740.0,977.0 L2737.0,978.0 L2734.0,979.1 L2731.0,980.0 L2728.0,981.0 L2725.0,982.0 L2722.0,982.9 L2719.0,983.8 L2716.0,984.7 L2713.0,985.5 L2710.0,986.4 L2707.0,987.2 L2704.0,988.0 L2701.0,988.8 L2698.0,989.5 L2695.0,990.2 L2692.0,990.8 L2689.0,991.5 L2686.0,992.1 L2683.0,992.8 L2680.0,993.4 L2677.0,994.1 L2674.0,994.8 L2671.0,995.5 L2668.0,996.2 L2665.0,997.0 L2662.0,997.8 L2659.0,998.5 L2656.0,999.3 L2653.0,1000.2 L2650.0,1001.0 L2647.0,1001.8 L2644.0,1002.6 L2641.0,1003.4 L2638.0,1004.3 L2635.0,1005.1 L2632.0,1005.9 L2629.0,1006.7 L2626.0,1007.5 L2623.0,1008.2 L2620.0,1009.0 L2617.0,1009.7 L2614.0,1010.5 L2611.0,1011.2 L2608.0,1011.9 L2605.0,1012.7 L2602.0,1013.4 L2599.0,1014.1 L2596.0,1014.8 L2593.0,1015.5 L2590.0,1016.2 L2587.0,1016.9 L2584.0,1017.6 L2581.0,1018.3 L2578.0,1018.9 L2575.0,1019.6 L2572.0,1020.3 L2569.0,1020.9 L2566.0,1021.6 L2563.0,1022.2 L2560.0,1022.9 L2557.0,1023.5 L2554.0,1024.1 L2551.0,1024.7 L2548.0,1025.4 L2545.0,1026.0 L2542.0,1026.6 L2539.0,1027.2 L2536.0,1027.8 L2533.0,1028.4 L2530.0,1029.0 L2527.0,1029.6 L2524.0,1030.2 L2521.0,1030.7 L2518.0,1031.3 L2515.0,1031.9 L2512.0,1032.4 L2509.0,1033.0 L2506.0,1033.6 L2503.0,1034.1 L2500.0,1034.7 L2497.0,1035.2 L2494.0,1035.7 L2491.0,1036.3 L2488.0,1036.8 L2485.0,1037.3 L2482.0,1037.8 L2479.0,1038.4 L2476.0,1038.9 L2473.0,1039.4 L2470.0,1039.9 L2467.0,1040.4 L2464.0,1040.9 L2461.0,1041.4 L2458.0,1041.9 L2455.0,1042.3 L2452.0,1042.8 L2449.0,1043.3 L2446.0,1043.8 L2443.0,1044.2 L2440.0,1044.7 L2437.0,1045.1 L2434.0,1045.6 L2431.0,1046.0 L2428.0,1046.5 L2425.0,1046.9 L2422.0,1047.4 L2419.0,1047.8 L2416.0,1048.2 L2413.0,1048.7 L2410.0,1049.1 L2407.0,1049.5 L2404.0,1049.9 L2401.0,1050.4 L2398.0,1050.8 L2395.0,1051.2 L2392.0,1051.6 L2389.0,1052.0 L2386.0,1052.5 L2383.0,1052.9 L2380.0,1053.3 L2377.0,1053.7 L2374.0,1054.1 L2371.0,1054.5 L2368.0,1054.9 L2365.0,1055.3 L2362.0,1055.8 L2359.0,1056.2 L2356.0,1056.6 L2353.0,1057.0 L2350.0,1057.4 L2347.0,1057.8 L2344.0,1058.2 L2341.0,1058.6 L2338.0,1058.9 L2335.0,1059.3 L2332.0,1059.7 L2329.0,1060.1 L2326.0,1060.5 L2323.0,1060.8 L2320.0,1061.2 L2317.0,1061.5 L2314.0,1061.9 L2311.0,1062.3 L2308.0,1062.6 L2305.0,1062.9 L2302.0,1063.3 L2299.0,1063.6 L2296.0,1063.9 L2293.0,1064.3 L2290.0,1064.6 L2287.0,1064.9 L2284.0,1065.2 L2281.0,1065.5 L2278.0,1065.8 L2275.0,1066.1 L2272.0,1066.4 L2269.0,1066.7 L2266.0,1067.0 L2263.0,1067.3 L2260.0,1067.6 L2257.0,1067.8 L2254.0,1068.1 L2251.0,1068.4 L2248.0,1068.7 L2245.0,1069.0 L2242.0,1069.2 L2239.0,1069.5 L2236.0,1069.8 L2233.0,1070.1 L2230.0,1070.3 L2227.0,1070.6 L2224.0,1070.9 L2221.0,1071.1 L2218.0,1071.4 L2215.0,1071.7 L2212.0,1071.9 L2209.0,1072.2 L2206.0,1072.5 L2203.0,1072.7 L2200.0,1073.0 L2197.0,1073.3 L2194.0,1073.5 L2191.0,1073.8 L2188.0,1074.1 L2185.0,1074.3 L2182.0,1074.6 L2179.0,1074.9 L2176.0,1075.1 L2173.0,1075.4 L2170.0,1075.7 L2167.0,1075.9 L2164.0,1076.2 L2161.0,1076.5 L2158.0,1076.7 L2155.0,1077.0 L2152.0,1077.2 L2149.0,1077.5 L2146.0,1077.8 L2143.0,1078.0 L2140.0,1078.3 L2137.0,1078.5 L2134.0,1078.8 L2131.0,1079.0 L2128.0,1079.3 L2125.0,1079.5 L2122.0,1079.8 L2119.0,1080.0 L2116.0,1080.2 L2113.0,1080.5 L2110.0,1080.7 L2107.0,1081.0 L2104.0,1081.2 L2101.0,1081.4 L2098.0,1081.7 L2095.0,1081.9 L2092.0,1082.1 L2089.0,1082.3 L2086.0,1082.6 L2083.0,1082.8 L2080.0,1083.0 L2077.0,1083.2 L2074.0,1083.4 L2071.0,1083.7 L2068.0,1083.9 L2065.0,1084.1 L2062.0,1084.3 L2059.0,1084.5 L2056.0,1084.7 L2053.0,1084.9 L2050.0,1085.2 L2047.0,1085.4 L2044.0,1085.6 L2041.0,1085.8 L2038.0,1086.0 L2035.0,1086.2 L2032.0,1086.4 L2029.0,1086.6 L2026.0,1086.8 L2023.0,1087.0 L2020.0,1087.2 L2017.0,1087.4 L2014.0,1087.6 L2011.0,1087.8 L2008.0,1088.0 L2005.0,1088.2 L2002.0,1088.4 L1999.0,1088.6 L1996.0,1088.8 L1993.0,1089.0 L1990.0,1089.1 L1987.0,1089.3 L1984.0,1089.5 L1981.0,1089.7 L1978.0,1089.9 L1975.0,1090.1 L1972.0,1090.3 L1969.0,1090.5 L1966.0,1090.7 L1963.0,1090.9 L1960.0,1091.1 L1957.0,1091.3 L1954.0,1091.4 L1951.0,1091.6 L1948.0,1091.8 L1945.0,1092.0 L1942.0,1092.2 L1939.0,1092.4 L1936.0,1092.5 L1933.0,1092.7 L1930.0,1092.9 L1927.0,1093.1 L1924.0,1093.2 L1921.0,1093.4 L1918.0,1093.6 L1915.0,1093.7 L1912.0,1093.9 L1909.0,1094.0 L1906.0,1094.2 L1903.0,1094.3 L1900.0,1094.5 L1897.0,1094.6 L1894.0,1094.8 L1891.0,1094.9 L1888.0,1095.1 L1885.0,1095.2 L1882.0,1095.4 L1879.0,1095.5 L1876.0,1095.7 L1873.0,1095.8 L1870.0,1096.0 L1867.0,1096.1 L1864.0,1096.2 L1861.0,1096.4 L1858.0,1096.5 L1855.0,1096.7 L1852.0,1096.8 L1849.0,1096.9 L1846.0,1097.1 L1843.0,1097.2 L1840.0,1097.4 L1837.0,1097.5 L1834.0,1097.6 L1831.0,1097.8 L1828.0,1097.9 L1825.0,1098.0 L1822.0,1098.2 L1819.0,1098.3 L1816.0,1098.4 L1813.0,1098.5 L1810.0,1098.7 L1807.0,1098.8 L1804.0,1098.9 L1801.0,1099.0 L1798.0,1099.2 L1795.0,1099.3 L1792.0,1099.4 L1789.0,1099.5 L1786.0,1099.7 L1783.0,1099.8 L1780.0,1099.9 L1777.0,1100.0 L1774.0,1100.1 L1771.0,1100.2 L1768.0,1100.4 L1765.0,1100.5 L1762.0,1100.6 L1759.0,1100.7 L1756.0,1100.8 L1753.0,1100.9 L1750.0,1101.0 L1747.0,1101.1 L1744.0,1101.2 L1741.0,1101.4 L1738.0,1101.5 L1735.0,1101.6 L1732.0,1101.7 L1729.0,1101.8 L1726.0,1101.9 L1723.0,1102.0 L1720.0,1102.1 L1717.0,1102.2 L1714.0,1102.3 L1711.0,1102.4 L1708.0,1102.5 L1705.0,1102.5 L1702.0,1102.6 L1699.0,1102.7 L1696.0,1102.8 L1693.0,1102.9 L1690.0,1103.0 L1687.0,1103.1 L1684.0,1103.2 L1681.0,1103.3 L1678.0,1103.4 L1675.0,1103.5 L1672.0,1103.5 L1669.0,1103.6 L1666.0,1103.7 L1663.0,1103.8 L1660.0,1103.9 L1657.0,1104.0 L1654.0,1104.1 L1651.0,1104.2 L1648.0,1104.3 L1645.0,1104.3 L1642.0,1104.4 L1639.0,1104.5 L1636.0,1104.6 L1633.0,1104.7 L1630.0,1104.8 L1627.0,1104.8 L1624.0,1104.9 L1621.0,1105.0 L1618.0,1105.1 L1615.0,1105.2 L1612.0,1105.3 L1609.0,1105.3 L1606.0,1105.4 L1603.0,1105.5 L1600.0,1105.6 L1597.0,1105.6 L1594.0,1105.7 L1591.0,1105.8 L1588.0,1105.9 L1585.0,1105.9 L1582.0,1106.0 L1579.0,1106.1 L1576.0,1106.2 L1573.0,1106.2 L1570.0,1106.3 L1567.0,1106.4 L1564.0,1106.4 L1561.0,1106.5 L1558.0,1106.6 L1555.0,1106.6 L1552.0,1106.7 L1549.0,1106.7 L1546.0,1106.8 L1543.0,1106.8 L1540.0,1106.9 L1537.0,1107.0 L1534.0,1107.0 L1531.0,1107.1 L1528.0,1107.1 L1525.0,1107.2 L1522.0,1107.2 L1519.0,1107.2 L1516.0,1107.3 L1513.0,1107.3 L1510.0,1107.4 L1507.0,1107.4 L1504.0,1107.5 L1501.0,1107.5 L1498.0,1107.5 L1495.0,1107.6 L1492.0,1107.6 L1489.0,1107.6 L1486.0,1107.7 L1483.0,1107.7 L1480.0,1107.7 L1477.0,1107.8 L1474.0,1107.8 L1471.0,1107.8 L1468.0,1107.9 L1465.0,1107.9 L1462.0,1107.9 L1459.0,1108.0 L1456.0,1108.0 L1453.0,1108.0 L1450.0,1108.1 L1447.0,1108.1 L1444.0,1108.1 L1441.0,1108.1 L1438.0,1108.2 L1435.0,1108.2 L1432.0,1108.2 L1429.0,1108.3 L1426.0,1108.3 L1423.0,1108.3 L1420.0,1108.4 L1417.0,1108.4 L1414.0,1108.4 L1411.0,1108.4 L1408.0,1108.5 L1405.0,1108.5 L1402.0,1108.5 L1399.0,1108.5 L1396.0,1108.6 L1393.0,1108.6 L1390.0,1108.6 L1387.0,1108.6 L1384.0,1108.7 L1381.0,1108.7 L1378.0,1108.7 L1375.0,1108.7 L1372.0,1108.7 L1369.0,1108.8 L1366.0,1108.8 L1363.0,1108.8 L1360.0,1108.8 L1357.0,1108.8 L1354.0,1108.9 L1351.0,1108.9 L1348.0,1108.9 L1345.0,1108.9 L1342.0,1108.9 L1339.0,1108.9 L1336.0,1108.9 L1333.0,1108.9 L1330.0,1109.0 L1327.0,1109.0 L1324.0,1109.0 L1321.0,1109.0 L1318.0,1109.0 L1315.0,1109.0 L1312.0,1109.0 L1309.0,1109.0 L1306.0,1109.0 L1303.0,1109.0 L1300.0,1109.0 L1297.0,1109.0 L1294.0,1109.0 L1291.0,1109.0 L1288.0,1109.0 L1285.0,1109.0 L1282.0,1109.0 L1279.0,1109.0 L1276.0,1109.0 L1273.0,1109.0 L1270.0,1109.0 L1267.0,1108.9 L1264.0,1108.9 L1261.0,1108.9 L1258.0,1108.9 L1255.0,1108.9 L1252.0,1108.9 L1249.0,1108.9 L1246.0,1108.9 L1243.0,1108.8 L1240.0,1108.8 L1237.0,1108.8 L1234.0,1108.8 L1231.0,1108.8 L1228.0,1108.8 L1225.0,1108.7 L1222.0,1108.7 L1219.0,1108.7 L1216.0,1108.7 L1213.0,1108.6 L1210.0,1108.6 L1207.0,1108.6 L1204.0,1108.6 L1201.0,1108.6 L1198.0,1108.5 L1195.0,1108.5 L1192.0,1108.5 L1189.0,1108.4 L1186.0,1108.4 L1183.0,1108.4 L1180.0,1108.4 L1177.0,1108.3 L1174.0,1108.3 L1171.0,1108.3 L1168.0,1108.3 L1165.0,1108.2 L1162.0,1108.2 L1159.0,1108.2 L1156.0,1108.1 L1153.0,1108.1 L1150.0,1108.1 L1147.0,1108.0 L1144.0,1108.0 L1141.0,1108.0 L1138.0,1107.9 L1135.0,1107.9 L1132.0,1107.9 L1129.0,1107.8 L1126.0,1107.8 L1123.0,1107.8 L1120.0,1107.7 L1117.0,1107.7 L1114.0,1107.7 L1111.0,1107.6 L1108.0,1107.6 L1105.0,1107.6 L1102.0,1107.5 L1099.0,1107.5 L1096.0,1107.5 L1093.0,1107.4 L1090.0,1107.4 L1087.0,1107.3 L1084.0,1107.3 L1081.0,1107.2 L1078.0,1107.2 L1075.0,1107.1 L1072.0,1107.1 L1069.0,1107.0 L1066.0,1106.9 L1063.0,1106.9 L1060.0,1106.8 L1057.0,1106.7 L1054.0,1106.7 L1051.0,1106.6 L1048.0,1106.5 L1045.0,1106.4 L1042.0,1106.4 L1039.0,1106.3 L1036.0,1106.2 L1033.0,1106.1 L1030.0,1106.0 L1027.0,1106.0 L1024.0,1105.9 L1021.0,1105.8 L1018.0,1105.7 L1015.0,1105.6 L1012.0,1105.5 L1009.0,1105.4 L1006.0,1105.3 L1003.0,1105.2 L1000.0,1105.1 L997.0,1105.0 L994.0,1104.9 L991.0,1104.8 L988.0,1104.8 L985.0,1104.7 L982.0,1104.6 L979.0,1104.5 L976.0,1104.4 L973.0,1104.3 L970.0,1104.2 L967.0,1104.1 L964.0,1104.0 L961.0,1103.9 L958.0,1103.8 L955.0,1103.7 L952.0,1103.6 L949.0,1103.5 L946.0,1103.4 L943.0,1103.3 L940.0,1103.2 L937.0,1103.1 L934.0,1103.0 L931.0,1102.9 L928.0,1102.8 L925.0,1102.7 L922.0,1102.6 L919.0,1102.5 L916.0,1102.5 L913.0,1102.4 L910.0,1102.3 L907.0,1102.2 L904.0,1102.1 L901.0,1102.0 L898.0,1101.9 L895.0,1101.9 L892.0,1101.8 L889.0,1101.7 L886.0,1101.6 L883.0,1101.6 L880.0,1101.5 L877.0,1101.4 L874.0,1101.3 L871.0,1101.2 L868.0,1101.2 L865.0,1101.1 L862.0,1101.0 L859.0,1100.9 L856.0,1100.9 L853.0,1100.8 L850.0,1100.7 L847.0,1100.6 L844.0,1100.6 L841.0,1100.5 L838.0,1100.4 L835.0,1100.3 L832.0,1100.2 L829.0,1100.2 L826.0,1100.1 L823.0,1100.0 L820.0,1099.9 L817.0,1099.8 L814.0,1099.7 L811.0,1099.6 L808.0,1099.6 L805.0,1099.5 L802.0,1099.4 L799.0,1099.3 L796.0,1099.2 L793.0,1099.1 L790.0,1099.0 L787.0,1098.9 L784.0,1098.8 L781.0,1098.6 L778.0,1098.5 L775.0,1098.4 L772.0,1098.3 L769.0,1098.2 L766.0,1098.1 L763.0,1098.0 L760.0,1097.9 L757.0,1097.7 L754.0,1097.6 L751.0,1097.5 L748.0,1097.4 L745.0,1097.2 L742.0,1097.1 L739.0,1097.0 L736.0,1096.9 L733.0,1096.7 L730.0,1096.6 L727.0,1096.5 L724.0,1096.3 L721.0,1096.2 L718.0,1096.0 L715.0,1095.9 L712.0,1095.8 L709.0,1095.6 L706.0,1095.5 L703.0,1095.3 L700.0,1095.2 L697.0,1095.1 L694.0,1094.9 L691.0,1094.8 L688.0,1094.6 L685.0,1094.5 L682.0,1094.3 L679.0,1094.2 L676.0,1094.0 L673.0,1093.8 L670.0,1093.7 L667.0,1093.5 L664.0,1093.4 L661.0,1093.2 L658.0,1093.0 L655.0,1092.9 L652.0,1092.7 L649.0,1092.5 L646.0,1092.3 L643.0,1092.1 L640.0,1091.9 L637.0,1091.8 L634.0,1091.6 L631.0,1091.4 L628.0,1091.2 L625.0,1091.0 L622.0,1090.7 L619.0,1090.5 L616.0,1090.3 L613.0,1090.1 L610.0,1089.8 L607.0,1089.5 L604.0,1089.3 L601.0,1089.0 L598.0,1088.7 L595.0,1088.4 L592.0,1088.1 L589.0,1087.8 L586.0,1087.5 L583.0,1087.2 L580.0,1086.9 L577.0,1086.6 L574.0,1086.4 L571.0,1086.1 L568.0,1085.8 L565.0,1085.6 L562.0,1085.4 L559.0,1085.1 L556.0,1084.9 L553.0,1084.7 L550.0,1084.5 L547.0,1084.2 L544.0,1084.0 L541.0,1083.8 L538.0,1083.6 L535.0,1083.3 L532.0,1083.1 L529.0,1082.8 L526.0,1082.6 L523.0,1082.3 L520.0,1082.0 L517.0,1081.7 L514.0,1081.3 L511.0,1080.9 L508.0,1080.4 L505.0,1080.0 L502.0,1079.5 L499.0,1079.0 L496.0,1078.5 L493.0,1078.0 L490.0,1077.5 L487.0,1077.0 L484.0,1076.6 L481.0,1076.2 L478.0,1075.8 L475.0,1075.4 L472.0,1075.2 L469.0,1074.9 L466.0,1074.7 L463.0,1074.6 L460.0,1074.4 L457.0,1074.2 L454.0,1074.1 L451.0,1074.0 L448.0,1073.9 L445.0,1073.7 L442.0,1073.6 L439.0,1073.5 L436.0,1073.3 L433.0,1073.2 L430.0,1073.0 L427.0,1072.8 L424.0,1072.6 L421.0,1072.4 L418.0,1072.2 L415.0,1072.0 L412.0,1071.7 L409.0,1071.5 L406.0,1071.3 L403.0,1071.0 L400.0,1070.8 L397.0,1070.5 L394.0,1070.2 L391.0,1070.0 L388.0,1069.7 L385.0,1069.4 L382.0,1069.2 L379.0,1068.9 L376.0,1068.6 L373.0,1068.4 L370.0,1068.1 L367.0,1067.8 L364.0,1067.5 L361.0,1067.2 L358.0,1066.9 L355.0,1066.6 L352.0,1066.3 L349.0,1066.0 L346.0,1065.7 L343.0,1065.4 L340.0,1065.1 L337.0,1064.8 L334.0,1064.4 L331.0,1064.1 L328.0,1063.8 L325.0,1063.4 L322.0,1063.1 L319.0,1062.8 L316.0,1062.4 L313.0,1062.1 L310.0,1061.7 L307.0,1061.3 L304.0,1061.0 L301.0,1060.6 L298.0,1060.2 L295.0,1059.9 L292.0,1059.5 L289.0,1059.1 L286.0,1058.7 L283.0,1058.4 L280.0,1058.0 L277.0,1057.6 L274.0,1057.2 L271.0,1056.8 L268.0,1056.4 L265.0,1056.0 L262.0,1055.6 L259.0,1055.2 L256.0,1054.9 L253.0,1054.5 L250.0,1054.1 L247.0,1053.7 L244.0,1053.4 L241.0,1053.1 L238.0,1052.8 L235.0,1052.5 L232.0,1052.3 L229.0,1052.0 L226.0,1051.8 L223.0,1051.6 L220.0,1051.3 L217.0,1051.1 L214.0,1050.9 L211.0,1050.7 L208.0,1050.4 L205.0,1050.2 L202.0,1050.0 L199.0,1049.7 L196.0,1049.5 L193.0,1049.3 L190.0,1049.1 L187.0,1048.9 L184.0,1048.7 L181.0,1048.4 L178.0,1048.1 L175.0,1047.8 L172.0,1047.3 L169.0,1046.1 L166.0,1045.4 L163.0,1045.0 L160.0,1044.6 L157.0,1044.3 L154.0,1044.0 L151.0,1043.8 L148.0,1043.6 L145.0,1043.3 L142.0,1043.1 L139.0,1042.9 L136.0,1042.7 L133.0,1042.4 L130.0,1042.0 L127.0,1041.6 L124.0,1041.1 L121.0,1040.5 L118.0,1040.0 L115.0,1039.5 L112.0,1039.1 L109.0,1038.6 L106.0,1038.2 L103.0,1037.8 L100.0,1037.4 L97.0,1037.1 L94.0,1036.7 L91.0,1036.3 L88.0,1036.0 L85.0,1035.6 L82.0,1035.2 L79.0,1034.9 L76.0,1034.5 L73.0,1034.2 L70.0,1033.8 L67.0,1033.4 L64.0,1033.1 L61.0,1032.7 L58.0,1032.4 L55.0,1032.0 L52.0,1031.7 L49.0,1031.3 L46.0,1031.0 Z"/>
<clipPath id="bc"><use href="#bp"/></clipPath>
<filter id="hb" x="0" y="800" width="2880" height="400" filterUnits="userSpaceOnUse"><feGaussianBlur stdDeviation="4 0"/></filter>
<linearGradient id="s0" gradientUnits="userSpaceOnUse" x1="0" y1="900" x2="0" y2="1120"><stop offset="0.244" stop-color="#e04818"/><stop offset="0.380" stop-color="#dc4416"/><stop offset="0.516" stop-color="#dc4416"/><stop offset="0.530" stop-color="#c03c14"/><stop offset="0.544" stop-color="#a2300f"/><stop offset="0.558" stop-color="#84240a"/></linearGradient><linearGradient id="s1" gradientUnits="userSpaceOnUse" x1="0" y1="900" x2="0" y2="1120"><stop offset="0.241" stop-color="#e04818"/><stop offset="0.378" stop-color="#dc4416"/><stop offset="0.514" stop-color="#dc4416"/><stop offset="0.528" stop-color="#c03c14"/><stop offset="0.542" stop-color="#a2300f"/><stop offset="0.555" stop-color="#84240a"/></linearGradient><linearGradient id="s2" gradientUnits="userSpaceOnUse" x1="0" y1="900" x2="0" y2="1120"><stop offset="0.238" stop-color="#e04818"/><stop offset="0.374" stop-color="#dc4416"/><stop offset="0.510" stop-color="#dc4416"/><stop offset="0.526" stop-color="#c03c14"/><stop offset="0.539" stop-color="#a2300f"/><stop offset="0.553" stop-color="#84240a"/></linearGradient><linearGradient id="s3" gradientUnits="userSpaceOnUse" x1="0" y1="900" x2="0" y2="1120"><stop offset="0.233" stop-color="#e04818"/><stop offset="0.369" stop-color="#dc4416"/><stop offset="0.506" stop-color="#dc4416"/><stop offset="0.523" stop-color="#c03c14"/><stop offset="0.537" stop-color="#a2300f"/><stop offset="0.551" stop-color="#84240a"/></linearGradient><linearGradient id="s4" gradientUnits="userSpaceOnUse" x1="0" y1="900" x2="0" y2="1120"><stop offset="0.228" stop-color="#e04818"/><stop offset="0.364" stop-color="#dc4416"/><stop offset="0.500" stop-color="#dc4416"/><stop offset="0.521" stop-color="#c03c14"/><stop offset="0.535" stop-color="#a2300f"/><stop offset="0.548" stop-color="#84240a"/></linearGradient><linearGradient id="s5" gradientUnits="userSpaceOnUse" x1="0" y1="900" x2="0" y2="1120"><stop offset="0.222" stop-color="#e04818"/><stop offset="0.358" stop-color="#dc4416"/><stop offset="0.495" stop-color="#dc4416"/><stop offset="0.518" stop-color="#c03c14"/><stop offset="0.532" stop-color="#a2300f"/><stop offset="0.546" stop-color="#84240a"/></linearGradient><linearGradient id="s6" gradientUnits="userSpaceOnUse" x1="0" y1="900" x2="0" y2="1120"><stop offset="0.216" stop-color="#e04818"/><stop offset="0.353" stop-color="#dc4416"/><stop offset="0.489" stop-color="#dc4416"/><stop offset="0.516" stop-color="#c03c14"/><stop offset="0.530" stop-color="#a2300f"/><stop offset="0.545" stop-color="#84240a"/></linearGradient><linearGradient id="s7" gradientUnits="userSpaceOnUse" x1="0" y1="900" x2="0" y2="1120"><stop offset="0.211" stop-color="#e04818"/><stop offset="0.347" stop-color="#dc4416"/><stop offset="0.484" stop-color="#dc4416"/><stop offset="0.513" stop-color="#c03c14"/><stop offset="0.528" stop-color="#a2300f"/><stop offset="0.543" stop-color="#84240a"/></linearGradient><linearGradient id="s8" gradientUnits="userSpaceOnUse" x1="0" y1="900" x2="0" y2="1120"><stop offset="0.206" stop-color="#e04818"/><stop offset="0.343" stop-color="#dc4416"/><stop offset="0.479" stop-color="#dc4416"/><stop offset="0.512" stop-color="#c03c14"/><stop offset="0.527" stop-color="#a2300f"/><stop offset="0.542" stop-color="#84240a"/></linearGradient><linearGradient id="s9" gradientUnits="userSpaceOnUse" x1="0" y1="900" x2="0" y2="1120"><stop offset="0.203" stop-color="#e04818"/><stop offset="0.339" stop-color="#dc4416"/><stop offset="0.475" stop-color="#dc4416"/><stop offset="0.510" stop-color="#c03c14"/><stop offset="0.526" stop-color="#a2300f"/><stop offset="0.541" stop-color="#84240a"/></linearGradient><linearGradient id="s10" gradientUnits="userSpaceOnUse" x1="0" y1="900" x2="0" y2="1120"><stop offset="0.201" stop-color="#e04818"/><stop offset="0.337" stop-color="#dc4416"/><stop offset="0.473" stop-color="#dc4416"/><stop offset="0.509" stop-color="#c03c14"/><stop offset="0.525" stop-color="#a2300f"/><stop offset="0.541" stop-color="#84240a"/></linearGradient><linearGradient id="s11" gradientUnits="userSpaceOnUse" x1="0" y1="900" x2="0" y2="1120"><stop offset="0.200" stop-color="#e04818"/><stop offset="0.336" stop-color="#dc4416"/><stop offset="0.473" stop-color="#dc4416"/><stop offset="0.509" stop-color="#c03c14"/><stop offset="0.525" stop-color="#a2300f"/><stop offset="0.541" stop-color="#84240a"/></linearGradient><linearGradient id="s12" gradientUnits="userSpaceOnUse" x1="0" y1="900" x2="0" y2="1120"><stop offset="0.200" stop-color="#e04818"/><stop offset="0.336" stop-color="#dc4416"/><stop offset="0.473" stop-color="#dc4416"/><stop offset="0.509" stop-color="#c03c14"/><stop offset="0.525" stop-color="#a2300f"/><stop offset="0.541" stop-color="#84240a"/></linearGradient><linearGradient id="s13" gradientUnits="userSpaceOnUse" x1="0" y1="900" x2="0" y2="1120"><stop offset="0.200" stop-color="#e04818"/><stop offset="0.336" stop-color="#dc4416"/><stop offset="0.473" stop-color="#dc4416"/><stop offset="0.510" stop-color="#c03c14"/><stop offset="0.526" stop-color="#a2300f"/><stop offset="0.542" stop-color="#84240a"/></linearGradient><linearGradient id="s14" gradientUnits="userSpaceOnUse" x1="0" y1="900" x2="0" y2="1120"><stop offset="0.200" stop-color="#e04818"/><stop offset="0.336" stop-color="#dc4416"/><stop offset="0.473" stop-color="#dc4416"/><stop offset="0.510" stop-color="#c03c14"/><stop offset="0.527" stop-color="#a2300f"/><stop offset="0.543" stop-color="#84240a"/></linearGradient><linearGradient id="s15" gradientUnits="userSpaceOnUse" x1="0" y1="900" x2="0" y2="1120"><stop offset="0.200" stop-color="#e04818"/><stop offset="0.336" stop-color="#dc4416"/><stop offset="0.473" stop-color="#dc4416"/><stop offset="0.511" stop-color="#c03c14"/><stop offset="0.528" stop-color="#a2300f"/><stop offset="0.545" stop-color="#84240a"/></linearGradient><linearGradient id="s16" gradientUnits="userSpaceOnUse" x1="0" y1="900" x2="0" y2="1120"><stop offset="0.200" stop-color="#e04818"/><stop offset="0.336" stop-color="#dc4416"/><stop offset="0.473" stop-color="#dc4416"/><stop offset="0.512" stop-color="#c03c14"/><stop offset="0.530" stop-color="#a2300f"/><stop offset="0.547" stop-color="#84240a"/></linearGradient><linearGradient id="s17" gradientUnits="userSpaceOnUse" x1="0" y1="900" x2="0" y2="1120"><stop offset="0.200" stop-color="#e04818"/><stop offset="0.336" stop-color="#dc4416"/><stop offset="0.473" stop-color="#dc4416"/><stop offset="0.513" stop-color="#c03c14"/><stop offset="0.531" stop-color="#a2300f"/><stop offset="0.550" stop-color="#84240a"/></linearGradient><linearGradient id="s18" gradientUnits="userSpaceOnUse" x1="0" y1="900" x2="0" y2="1120"><stop offset="0.200" stop-color="#e04818"/><stop offset="0.336" stop-color="#dc4416"/><stop offset="0.473" stop-color="#dc4416"/><stop offset="0.514" stop-color="#c03c14"/><stop offset="0.533" stop-color="#a2300f"/><stop offset="0.552" stop-color="#84240a"/></linearGradient><linearGradient id="s19" gradientUnits="userSpaceOnUse" x1="0" y1="900" x2="0" y2="1120"><stop offset="0.200" stop-color="#e04818"/><stop offset="0.336" stop-color="#dc4416"/><stop offset="0.473" stop-color="#dc4416"/><stop offset="0.516" stop-color="#c03c14"/><stop offset="0.536" stop-color="#a2300f"/><stop offset="0.556" stop-color="#84240a"/></linearGradient><linearGradient id="s20" gradientUnits="userSpaceOnUse" x1="0" y1="900" x2="0" y2="1120"><stop offset="0.200" stop-color="#e04818"/><stop offset="0.336" stop-color="#dc4416"/><stop offset="0.473" stop-color="#dc4416"/><stop offset="0.517" stop-color="#c03c14"/><stop offset="0.538" stop-color="#a2300f"/><stop offset="0.559" stop-color="#84240a"/></linearGradient><linearGradient id="s21" gradientUnits="userSpaceOnUse" x1="0" y1="900" x2="0" y2="1120"><stop offset="0.200" stop-color="#e04818"/><stop offset="0.336" stop-color="#dc4416"/><stop offset="0.473" stop-color="#dc4416"/><stop offset="0.519" stop-color="#c03c14"/><stop offset="0.541" stop-color="#a2300f"/><stop offset="0.562" stop-color="#84240a"/></linearGradient><linearGradient id="s22" gradientUnits="userSpaceOnUse" x1="0" y1="900" x2="0" y2="1120"><stop offset="0.200" stop-color="#e04818"/><stop offset="0.336" stop-color="#dc4416"/><stop offset="0.473" stop-color="#dc4416"/><stop offset="0.521" stop-color="#c03c14"/><stop offset="0.543" stop-color="#a2300f"/><stop offset="0.566" stop-color="#84240a"/></linearGradient><linearGradient id="s23" gradientUnits="userSpaceOnUse" x1="0" y1="900" x2="0" y2="1120"><stop offset="0.200" stop-color="#e04818"/><stop offset="0.336" stop-color="#dc4416"/><stop offset="0.473" stop-color="#dc4416"/><stop offset="0.523" stop-color="#c03c14"/><stop offset="0.546" stop-color="#a2300f"/><stop offset="0.570" stop-color="#84240a"/></linearGradient><linearGradient id="s24" gradientUnits="userSpaceOnUse" x1="0" y1="900" x2="0" y2="1120"><stop offset="0.200" stop-color="#e04818"/><stop offset="0.336" stop-color="#dc4416"/><stop offset="0.473" stop-color="#dc4416"/><stop offset="0.524" stop-color="#c03c14"/><stop offset="0.549" stop-color="#a2300f"/><stop offset="0.574" stop-color="#84240a"/></linearGradient><linearGradient id="s25" gradientUnits="userSpaceOnUse" x1="0" y1="900" x2="0" y2="1120"><stop offset="0.200" stop-color="#e04818"/><stop offset="0.336" stop-color="#dc4416"/><stop offset="0.473" stop-color="#dc4416"/><stop offset="0.526" stop-color="#c03c14"/><stop offset="0.552" stop-color="#a2300f"/><stop offset="0.578" stop-color="#84240a"/></linearGradient><linearGradient id="s26" gradientUnits="userSpaceOnUse" x1="0" y1="900" x2="0" y2="1120"><stop offset="0.200" stop-color="#e04818"/><stop offset="0.336" stop-color="#dc4416"/><stop offset="0.473" stop-color="#dc4416"/><stop offset="0.528" stop-color="#c03c14"/><stop offset="0.555" stop-color="#a2300f"/><stop offset="0.582" stop-color="#84240a"/></linearGradient><linearGradient id="s27" gradientUnits="userSpaceOnUse" x1="0" y1="900" x2="0" y2="1120"><stop offset="0.200" stop-color="#e04818"/><stop offset="0.336" stop-color="#dc4416"/><stop offset="0.473" stop-color="#dc4416"/><stop offset="0.530" stop-color="#c03c14"/><stop offset="0.558" stop-color="#a2300f"/><stop offset="0.586" stop-color="#84240a"/></linearGradient><linearGradient id="s28" gradientUnits="userSpaceOnUse" x1="0" y1="900" x2="0" y2="1120"><stop offset="0.200" stop-color="#e04818"/><stop offset="0.336" stop-color="#dc4416"/><stop offset="0.473" stop-color="#dc4416"/><stop offset="0.532" stop-color="#c03c14"/><stop offset="0.561" stop-color="#a2300f"/><stop offset="0.590" stop-color="#84240a"/></linearGradient><linearGradient id="s29" gradientUnits="userSpaceOnUse" x1="0" y1="900" x2="0" y2="1120"><stop offset="0.200" stop-color="#e04818"/><stop offset="0.336" stop-color="#dc4416"/><stop offset="0.473" stop-color="#dc4416"/><stop offset="0.534" stop-color="#c03c14"/><stop offset="0.564" stop-color="#a2300f"/><stop offset="0.594" stop-color="#84240a"/></linearGradient><linearGradient id="s30" gradientUnits="userSpaceOnUse" x1="0" y1="900" x2="0" y2="1120"><stop offset="0.200" stop-color="#e04818"/><stop offset="0.336" stop-color="#dc4416"/><stop offset="0.473" stop-color="#dc4416"/><stop offset="0.536" stop-color="#c03c14"/><stop offset="0.567" stop-color="#a2300f"/><stop offset="0.598" stop-color="#84240a"/></linearGradient><linearGradient id="s31" gradientUnits="userSpaceOnUse" x1="0" y1="900" x2="0" y2="1120"><stop offset="0.200" stop-color="#e04818"/><stop offset="0.336" stop-color="#dc4416"/><stop offset="0.473" stop-color="#dc4416"/><stop offset="0.538" stop-color="#c03c14"/><stop offset="0.570" stop-color="#a2300f"/><stop offset="0.602" stop-color="#84240a"/></linearGradient><linearGradient id="s32" gradientUnits="userSpaceOnUse" x1="0" y1="900" x2="0" y2="1120"><stop offset="0.200" stop-color="#e04818"/><stop offset="0.336" stop-color="#dc4416"/><stop offset="0.473" stop-color="#dc4416"/><stop offset="0.540" stop-color="#c03c14"/><stop offset="0.573" stop-color="#a2300f"/><stop offset="0.606" stop-color="#84240a"/></linearGradient><linearGradient id="s33" gradientUnits="userSpaceOnUse" x1="0" y1="900" x2="0" y2="1120"><stop offset="0.200" stop-color="#e04818"/><stop offset="0.336" stop-color="#dc4416"/><stop offset="0.473" stop-color="#dc4416"/><stop offset="0.541" stop-color="#c03c14"/><stop offset="0.575" stop-color="#a2300f"/><stop offset="0.610" stop-color="#84240a"/></linearGradient><linearGradient id="s34" gradientUnits="userSpaceOnUse" x1="0" y1="900" x2="0" y2="1120"><stop offset="0.200" stop-color="#e04818"/><stop offset="0.336" stop-color="#dc4416"/><stop offset="0.473" stop-color="#dc4416"/><stop offset="0.543" stop-color="#c03c14"/><stop offset="0.578" stop-color="#a2300f"/><stop offset="0.613" stop-color="#84240a"/></linearGradient><linearGradient id="s35" gradientUnits="userSpaceOnUse" x1="0" y1="900" x2="0" y2="1120"><stop offset="0.200" stop-color="#e04818"/><stop offset="0.336" stop-color="#dc4416"/><stop offset="0.473" stop-color="#dc4416"/><stop offset="0.544" stop-color="#c03c14"/><stop offset="0.580" stop-color="#a2300f"/><stop offset="0.616" stop-color="#84240a"/></linearGradient><linearGradient id="s36" gradientUnits="userSpaceOnUse" x1="0" y1="900" x2="0" y2="1120"><stop offset="0.200" stop-color="#e04818"/><stop offset="0.336" stop-color="#dc4416"/><stop offset="0.473" stop-color="#dc4416"/><stop offset="0.546" stop-color="#c03c14"/><stop offset="0.582" stop-color="#a2300f"/><stop offset="0.619" stop-color="#84240a"/></linearGradient><linearGradient id="s37" gradientUnits="userSpaceOnUse" x1="0" y1="900" x2="0" y2="1120"><stop offset="0.200" stop-color="#e04818"/><stop offset="0.336" stop-color="#dc4416"/><stop offset="0.473" stop-color="#dc4416"/><stop offset="0.547" stop-color="#c03c14"/><stop offset="0.584" stop-color="#a2300f"/><stop offset="0.622" stop-color="#84240a"/></linearGradient><linearGradient id="s38" gradientUnits="userSpaceOnUse" x1="0" y1="900" x2="0" y2="1120"><stop offset="0.200" stop-color="#e04818"/><stop offset="0.336" stop-color="#dc4416"/><stop offset="0.473" stop-color="#dc4416"/><stop offset="0.549" stop-color="#c03c14"/><stop offset="0.586" stop-color="#a2300f"/><stop offset="0.624" stop-color="#84240a"/></linearGradient><linearGradient id="s39" gradientUnits="userSpaceOnUse" x1="0" y1="900" x2="0" y2="1120"><stop offset="0.200" stop-color="#e04818"/><stop offset="0.336" stop-color="#dc4416"/><stop offset="0.473" stop-color="#dc4416"/><stop offset="0.550" stop-color="#c03c14"/><stop offset="0.589" stop-color="#a2300f"/><stop offset="0.627" stop-color="#84240a"/></linearGradient><linearGradient id="s40" gradientUnits="userSpaceOnUse" x1="0" y1="900" x2="0" y2="1120"><stop offset="0.200" stop-color="#e04818"/><stop offset="0.337" stop-color="#dc4416"/><stop offset="0.473" stop-color="#dc4416"/><stop offset="0.551" stop-color="#c03c14"/><stop offset="0.591" stop-color="#a2300f"/><stop offset="0.630" stop-color="#84240a"/></linearGradient><linearGradient id="s41" gradientUnits="userSpaceOnUse" x1="0" y1="900" x2="0" y2="1120"><stop offset="0.200" stop-color="#e04818"/><stop offset="0.337" stop-color="#dc4416"/><stop offset="0.473" stop-color="#dc4416"/><stop offset="0.553" stop-color="#c03c14"/><stop offset="0.593" stop-color="#a2300f"/><stop offset="0.633" stop-color="#84240a"/></linearGradient><linearGradient id="s42" gradientUnits="userSpaceOnUse" x1="0" y1="900" x2="0" y2="1120"><stop offset="0.200" stop-color="#e04818"/><stop offset="0.337" stop-color="#dc4416"/><stop offset="0.473" stop-color="#dc4416"/><stop offset="0.554" stop-color="#c03c14"/><stop offset="0.595" stop-color="#a2300f"/><stop offset="0.636" stop-color="#84240a"/></linearGradient><linearGradient id="s43" gradientUnits="userSpaceOnUse" x1="0" y1="900" x2="0" y2="1120"><stop offset="0.200" stop-color="#e04818"/><stop offset="0.337" stop-color="#dc4416"/><stop offset="0.473" stop-color="#dc4416"/><stop offset="0.555" stop-color="#c03c14"/><stop offset="0.597" stop-color="#a2300f"/><stop offset="0.638" stop-color="#84240a"/></linearGradient><linearGradient id="s44" gradientUnits="userSpaceOnUse" x1="0" y1="900" x2="0" y2="1120"><stop offset="0.201" stop-color="#e04818"/><stop offset="0.337" stop-color="#dc4416"/><stop offset="0.473" stop-color="#dc4416"/><stop offset="0.557" stop-color="#c03b13"/><stop offset="0.599" stop-color="#a2300f"/><stop offset="0.641" stop-color="#84240a"/></linearGradient><linearGradient id="s45" gradientUnits="userSpaceOnUse" x1="0" y1="900" x2="0" y2="1120"><stop offset="0.201" stop-color="#e04818"/><stop offset="0.337" stop-color="#dc4416"/><stop offset="0.473" stop-color="#dc4416"/><stop offset="0.558" stop-color="#c03b13"/><stop offset="0.601" stop-color="#a2300f"/><stop offset="0.644" stop-color="#84240a"/></linearGradient><linearGradient id="s46" gradientUnits="userSpaceOnUse" x1="0" y1="900" x2="0" y2="1120"><stop offset="0.201" stop-color="#e04818"/><stop offset="0.337" stop-color="#dc4416"/><stop offset="0.474" stop-color="#dc4416"/><stop offset="0.559" stop-color="#c03b13"/><stop offset="0.603" stop-color="#a2300f"/><stop offset="0.646" stop-color="#84240a"/></linearGradient><linearGradient id="s47" gradientUnits="userSpaceOnUse" x1="0" y1="900" x2="0" y2="1120"><stop offset="0.201" stop-color="#e04818"/><stop offset="0.337" stop-color="#dc4416"/><stop offset="0.474" stop-color="#dc4416"/><stop offset="0.560" stop-color="#c03b13"/><stop offset="0.605" stop-color="#a2300f"/><stop offset="0.649" stop-color="#84240a"/></linearGradient><linearGradient id="s48" gradientUnits="userSpaceOnUse" x1="0" y1="900" x2="0" y2="1120"><stop offset="0.201" stop-color="#e04818"/><stop offset="0.338" stop-color="#dc4416"/><stop offset="0.474" stop-color="#dc4416"/><stop offset="0.562" stop-color="#c03b13"/><stop offset="0.607" stop-color="#a2300f"/><stop offset="0.652" stop-color="#84240a"/></linearGradient><linearGradient id="s49" gradientUnits="userSpaceOnUse" x1="0" y1="900" x2="0" y2="1120"><stop offset="0.201" stop-color="#e04818"/><stop offset="0.338" stop-color="#dc4416"/><stop offset="0.474" stop-color="#dc4416"/><stop offset="0.563" stop-color="#c03b13"/><stop offset="0.609" stop-color="#a22f0e"/><stop offset="0.654" stop-color="#84240a"/></linearGradient><linearGradient id="s50" gradientUnits="userSpaceOnUse" x1="0" y1="900" x2="0" y2="1120"><stop offset="0.202" stop-color="#e04818"/><stop offset="0.338" stop-color="#dc4416"/><stop offset="0.474" stop-color="#dc4416"/><stop offset="0.564" stop-color="#c03b13"/><stop offset="0.611" stop-color="#a22f0e"/><stop offset="0.657" stop-color="#84240a"/></linearGradient><linearGradient id="s51" gradientUnits="userSpaceOnUse" x1="0" y1="900" x2="0" y2="1120"><stop offset="0.202" stop-color="#e04818"/><stop offset="0.338" stop-color="#dc4416"/><stop offset="0.475" stop-color="#dc4416"/><stop offset="0.566" stop-color="#c03b13"/><stop offset="0.612" stop-color="#a22f0e"/><stop offset="0.659" stop-color="#84240a"/></linearGradient><linearGradient id="s52" gradientUnits="userSpaceOnUse" x1="0" y1="900" x2="0" y2="1120"><stop offset="0.202" stop-color="#e04818"/><stop offset="0.339" stop-color="#dc4416"/><stop offset="0.475" stop-color="#dc4416"/><stop offset="0.567" stop-color="#c03b13"/><stop offset="0.614" stop-color="#a22f0e"/><stop offset="0.662" stop-color="#84240a"/></linearGradient><linearGradient id="s53" gradientUnits="userSpaceOnUse" x1="0" y1="900" x2="0" y2="1120"><stop offset="0.202" stop-color="#e04818"/><stop offset="0.339" stop-color="#dc4416"/><stop offset="0.475" stop-color="#dc4416"/><stop offset="0.568" stop-color="#c03a12"/><stop offset="0.616" stop-color="#a22f0e"/><stop offset="0.664" stop-color="#84240a"/></linearGradient><linearGradient id="s54" gradientUnits="userSpaceOnUse" x1="0" y1="900" x2="0" y2="1120"><stop offset="0.203" stop-color="#e04818"/><stop offset="0.339" stop-color="#dc4416"/><stop offset="0.475" stop-color="#dc4416"/><stop offset="0.569" stop-color="#c03a12"/><stop offset="0.618" stop-color="#a22f0e"/><stop offset="0.667" stop-color="#84240a"/></linearGradient><linearGradient id="s55" gradientUnits="userSpaceOnUse" x1="0" y1="900" x2="0" y2="1120"><stop offset="0.203" stop-color="#e04818"/><stop offset="0.339" stop-color="#dc4416"/><stop offset="0.476" stop-color="#dc4416"/><stop offset="0.571" stop-color="#c03a12"/><stop offset="0.620" stop-color="#a22f0e"/><stop offset="0.669" stop-color="#84240a"/></linearGradient><linearGradient id="s56" gradientUnits="userSpaceOnUse" x1="0" y1="900" x2="0" y2="1120"><stop offset="0.203" stop-color="#e04818"/><stop offset="0.340" stop-color="#dc4416"/><stop offset="0.476" stop-color="#dc4416"/><stop offset="0.572" stop-color="#c03a12"/><stop offset="0.622" stop-color="#a22f0e"/><stop offset="0.671" stop-color="#84240a"/></linearGradient><linearGradient id="s57" gradientUnits="userSpaceOnUse" x1="0" y1="900" x2="0" y2="1120"><stop offset="0.203" stop-color="#e04818"/><stop offset="0.340" stop-color="#dc4416"/><stop offset="0.476" stop-color="#dc4416"/><stop offset="0.573" stop-color="#c03a12"/><stop offset="0.623" stop-color="#a22f0e"/><stop offset="0.674" stop-color="#84240a"/></linearGradient><linearGradient id="s58" gradientUnits="userSpaceOnUse" x1="0" y1="900" x2="0" y2="1120"><stop offset="0.204" stop-color="#e04818"/><stop offset="0.340" stop-color="#dc4416"/><stop offset="0.476" stop-color="#dc4416"/><stop offset="0.574" stop-color="#c03a12"/><stop offset="0.625" stop-color="#a22f0e"/><stop offset="0.676" stop-color="#84240a"/></linearGradient><linearGradient id="s59" gradientUnits="userSpaceOnUse" x1="0" y1="900" x2="0" y2="1120"><stop offset="0.204" stop-color="#e04818"/><stop offset="0.340" stop-color="#dc4416"/><stop offset="0.477" stop-color="#dc4416"/><stop offset="0.575" stop-color="#c03a12"/><stop offset="0.627" stop-color="#a22f0e"/><stop offset="0.678" stop-color="#84240a"/></linearGradient><linearGradient id="s60" gradientUnits="userSpaceOnUse" x1="0" y1="900" x2="0" y2="1120"><stop offset="0.204" stop-color="#e04818"/><stop offset="0.341" stop-color="#dc4416"/><stop offset="0.477" stop-color="#dc4416"/><stop offset="0.576" stop-color="#c03a12"/><stop offset="0.628" stop-color="#a22f0e"/><stop offset="0.680" stop-color="#84240a"/></linearGradient><linearGradient id="s61" gradientUnits="userSpaceOnUse" x1="0" y1="900" x2="0" y2="1120"><stop offset="0.205" stop-color="#e04818"/><stop offset="0.341" stop-color="#dc4416"/><stop offset="0.477" stop-color="#dc4416"/><stop offset="0.578" stop-color="#c03a12"/><stop offset="0.630" stop-color="#a22f0e"/><stop offset="0.682" stop-color="#84240a"/></linearGradient><linearGradient id="s62" gradientUnits="userSpaceOnUse" x1="0" y1="900" x2="0" y2="1120"><stop offset="0.205" stop-color="#e04818"/><stop offset="0.341" stop-color="#dc4416"/><stop offset="0.478" stop-color="#dc4416"/><stop offset="0.579" stop-color="#c03a12"/><stop offset="0.632" stop-color="#a22f0e"/><stop offset="0.684" stop-color="#84240a"/></linearGradient><linearGradient id="s63" gradientUnits="userSpaceOnUse" x1="0" y1="900" x2="0" y2="1120"><stop offset="0.206" stop-color="#e04818"/><stop offset="0.342" stop-color="#dc4416"/><stop offset="0.478" stop-color="#dc4416"/><stop offset="0.580" stop-color="#c03a12"/><stop offset="0.633" stop-color="#a22f0e"/><stop offset="0.686" stop-color="#84240a"/></linearGradient><linearGradient id="s64" gradientUnits="userSpaceOnUse" x1="0" y1="900" x2="0" y2="1120"><stop offset="0.206" stop-color="#e04818"/><stop offset="0.343" stop-color="#dc4416"/><stop offset="0.479" stop-color="#dc4416"/><stop offset="0.581" stop-color="#c03a12"/><stop offset="0.635" stop-color="#a22f0e"/><stop offset="0.689" stop-color="#84240a"/></linearGradient><linearGradient id="s65" gradientUnits="userSpaceOnUse" x1="0" y1="900" x2="0" y2="1120"><stop offset="0.207" stop-color="#e04818"/><stop offset="0.344" stop-color="#dc4416"/><stop offset="0.480" stop-color="#dc4416"/><stop offset="0.582" stop-color="#c03a12"/><stop offset="0.636" stop-color="#a22f0e"/><stop offset="0.691" stop-color="#84240a"/></linearGradient><linearGradient id="s66" gradientUnits="userSpaceOnUse" x1="0" y1="900" x2="0" y2="1120"><stop offset="0.208" stop-color="#e04818"/><stop offset="0.345" stop-color="#dc4416"/><stop offset="0.481" stop-color="#dc4416"/><stop offset="0.583" stop-color="#c03a12"/><stop offset="0.638" stop-color="#a22f0e"/><stop offset="0.693" stop-color="#84240a"/></linearGradient><linearGradient id="s67" gradientUnits="userSpaceOnUse" x1="0" y1="900" x2="0" y2="1120"><stop offset="0.209" stop-color="#e04818"/><stop offset="0.346" stop-color="#dc4416"/><stop offset="0.482" stop-color="#dc4416"/><stop offset="0.585" stop-color="#c03a12"/><stop offset="0.640" stop-color="#a22f0e"/><stop offset="0.695" stop-color="#84240a"/></linearGradient><linearGradient id="s68" gradientUnits="userSpaceOnUse" x1="0" y1="900" x2="0" y2="1120"><stop offset="0.211" stop-color="#e04818"/><stop offset="0.347" stop-color="#dc4416"/><stop offset="0.484" stop-color="#dc4416"/><stop offset="0.586" stop-color="#c03a12"/><stop offset="0.641" stop-color="#a22f0e"/><stop offset="0.697" stop-color="#84240a"/></linearGradient><linearGradient id="s69" gradientUnits="userSpaceOnUse" x1="0" y1="900" x2="0" y2="1120"><stop offset="0.212" stop-color="#e04818"/><stop offset="0.349" stop-color="#dc4416"/><stop offset="0.485" stop-color="#dc4416"/><stop offset="0.587" stop-color="#c13b12"/><stop offset="0.643" stop-color="#a22f0e"/><stop offset="0.699" stop-color="#84240a"/></linearGradient><linearGradient id="s70" gradientUnits="userSpaceOnUse" x1="0" y1="900" x2="0" y2="1120"><stop offset="0.214" stop-color="#e04818"/><stop offset="0.350" stop-color="#dc4416"/><stop offset="0.487" stop-color="#dc4416"/><stop offset="0.589" stop-color="#c13b12"/><stop offset="0.645" stop-color="#a22f0e"/><stop offset="0.701" stop-color="#84240a"/></linearGradient><linearGradient id="s71" gradientUnits="userSpaceOnUse" x1="0" y1="900" x2="0" y2="1120"><stop offset="0.215" stop-color="#e04818"/><stop offset="0.352" stop-color="#dc4416"/><stop offset="0.488" stop-color="#dc4416"/><stop offset="0.590" stop-color="#c13b12"/><stop offset="0.647" stop-color="#a22f0e"/><stop offset="0.703" stop-color="#84240a"/></linearGradient><linearGradient id="s72" gradientUnits="userSpaceOnUse" x1="0" y1="900" x2="0" y2="1120"><stop offset="0.217" stop-color="#e04818"/><stop offset="0.354" stop-color="#dc4416"/><stop offset="0.490" stop-color="#dc4416"/><stop offset="0.591" stop-color="#c13b12"/><stop offset="0.648" stop-color="#a22f0e"/><stop offset="0.705" stop-color="#84240a"/></linearGradient><linearGradient id="s73" gradientUnits="userSpaceOnUse" x1="0" y1="900" x2="0" y2="1120"><stop offset="0.219" stop-color="#e04818"/><stop offset="0.355" stop-color="#dc4416"/><stop offset="0.492" stop-color="#dc4416"/><stop offset="0.592" stop-color="#c13b12"/><stop offset="0.650" stop-color="#a3300e"/><stop offset="0.707" stop-color="#84240a"/></linearGradient><linearGradient id="s74" gradientUnits="userSpaceOnUse" x1="0" y1="900" x2="0" y2="1120"><stop offset="0.221" stop-color="#e04818"/><stop offset="0.357" stop-color="#dc4416"/><stop offset="0.494" stop-color="#dc4416"/><stop offset="0.594" stop-color="#c13b12"/><stop offset="0.652" stop-color="#a3300e"/><stop offset="0.709" stop-color="#84240a"/></linearGradient><linearGradient id="s75" gradientUnits="userSpaceOnUse" x1="0" y1="900" x2="0" y2="1120"><stop offset="0.223" stop-color="#e04818"/><stop offset="0.360" stop-color="#dc4416"/><stop offset="0.496" stop-color="#dc4416"/><stop offset="0.595" stop-color="#c23b12"/><stop offset="0.653" stop-color="#a3300e"/><stop offset="0.711" stop-color="#84240a"/></linearGradient><linearGradient id="s76" gradientUnits="userSpaceOnUse" x1="0" y1="900" x2="0" y2="1120"><stop offset="0.225" stop-color="#e04818"/><stop offset="0.362" stop-color="#dc4416"/><stop offset="0.498" stop-color="#dc4416"/><stop offset="0.596" stop-color="#c23c12"/><stop offset="0.655" stop-color="#a3300e"/><stop offset="0.714" stop-color="#84240a"/></linearGradient><linearGradient id="s77" gradientUnits="userSpaceOnUse" x1="0" y1="900" x2="0" y2="1120"><stop offset="0.228" stop-color="#e04818"/><stop offset="0.364" stop-color="#dc4416"/><stop offset="0.500" stop-color="#dc4416"/><stop offset="0.598" stop-color="#c23c13"/><stop offset="0.657" stop-color="#a3300e"/><stop offset="0.716" stop-color="#84240a"/></linearGradient><linearGradient id="s78" gradientUnits="userSpaceOnUse" x1="0" y1="900" x2="0" y2="1120"><stop offset="0.230" stop-color="#e04818"/><stop offset="0.366" stop-color="#dc4416"/><stop offset="0.503" stop-color="#dc4416"/><stop offset="0.599" stop-color="#c23c13"/><stop offset="0.658" stop-color="#a3300e"/><stop offset="0.718" stop-color="#84240a"/></linearGradient><linearGradient id="s79" gradientUnits="userSpaceOnUse" x1="0" y1="900" x2="0" y2="1120"><stop offset="0.232" stop-color="#e04818"/><stop offset="0.369" stop-color="#dc4416"/><stop offset="0.505" stop-color="#dc4416"/><stop offset="0.600" stop-color="#c23c13"/><stop offset="0.660" stop-color="#a3300e"/><stop offset="0.720" stop-color="#84240a"/></linearGradient><linearGradient id="s80" gradientUnits="userSpaceOnUse" x1="0" y1="900" x2="0" y2="1120"><stop offset="0.235" stop-color="#e04818"/><stop offset="0.371" stop-color="#dc4416"/><stop offset="0.508" stop-color="#dc4416"/><stop offset="0.602" stop-color="#c33d13"/><stop offset="0.662" stop-color="#a3300e"/><stop offset="0.722" stop-color="#84240a"/></linearGradient><linearGradient id="s81" gradientUnits="userSpaceOnUse" x1="0" y1="900" x2="0" y2="1120"><stop offset="0.237" stop-color="#e04818"/><stop offset="0.374" stop-color="#dc4416"/><stop offset="0.510" stop-color="#dc4416"/><stop offset="0.603" stop-color="#c33d13"/><stop offset="0.663" stop-color="#a3300e"/><stop offset="0.724" stop-color="#84240a"/></linearGradient><linearGradient id="s82" gradientUnits="userSpaceOnUse" x1="0" y1="900" x2="0" y2="1120"><stop offset="0.240" stop-color="#e04818"/><stop offset="0.376" stop-color="#dc4416"/><stop offset="0.513" stop-color="#dc4416"/><stop offset="0.604" stop-color="#c33d13"/><stop offset="0.665" stop-color="#a4310e"/><stop offset="0.726" stop-color="#84240a"/></linearGradient><linearGradient id="s83" gradientUnits="userSpaceOnUse" x1="0" y1="900" x2="0" y2="1120"><stop offset="0.242" stop-color="#e04818"/><stop offset="0.379" stop-color="#dc4416"/><stop offset="0.515" stop-color="#dc4416"/><stop offset="0.606" stop-color="#c33d13"/><stop offset="0.667" stop-color="#a4310e"/><stop offset="0.728" stop-color="#84240a"/></linearGradient><linearGradient id="s84" gradientUnits="userSpaceOnUse" x1="0" y1="900" x2="0" y2="1120"><stop offset="0.245" stop-color="#e04818"/><stop offset="0.381" stop-color="#dc4416"/><stop offset="0.518" stop-color="#dc4416"/><stop offset="0.607" stop-color="#c43e13"/><stop offset="0.668" stop-color="#a4310f"/><stop offset="0.730" stop-color="#84240a"/></linearGradient><linearGradient id="s85" gradientUnits="userSpaceOnUse" x1="0" y1="900" x2="0" y2="1120"><stop offset="0.248" stop-color="#e04818"/><stop offset="0.384" stop-color="#dc4416"/><stop offset="0.521" stop-color="#dc4416"/><stop offset="0.608" stop-color="#c43e13"/><stop offset="0.670" stop-color="#a4310f"/><stop offset="0.731" stop-color="#84240a"/></linearGradient><linearGradient id="s86" gradientUnits="userSpaceOnUse" x1="0" y1="900" x2="0" y2="1120"><stop offset="0.251" stop-color="#e04818"/><stop offset="0.387" stop-color="#dc4416"/><stop offset="0.523" stop-color="#dc4416"/><stop offset="0.609" stop-color="#c43e13"/><stop offset="0.671" stop-color="#a4310f"/><stop offset="0.733" stop-color="#84240a"/></linearGradient><linearGradient id="s87" gradientUnits="userSpaceOnUse" x1="0" y1="900" x2="0" y2="1120"><stop offset="0.253" stop-color="#e04818"/><stop offset="0.390" stop-color="#dc4416"/><stop offset="0.526" stop-color="#dc4416"/><stop offset="0.611" stop-color="#c53e13"/><stop offset="0.673" stop-color="#a4310f"/><stop offset="0.735" stop-color="#84240a"/></linearGradient><linearGradient id="s88" gradientUnits="userSpaceOnUse" x1="0" y1="900" x2="0" y2="1120"><stop offset="0.256" stop-color="#e04818"/><stop offset="0.392" stop-color="#dc4416"/><stop offset="0.529" stop-color="#dc4416"/><stop offset="0.612" stop-color="#c53f13"/><stop offset="0.675" stop-color="#a4310f"/><stop offset="0.737" stop-color="#84240a"/></linearGradient><linearGradient id="s89" gradientUnits="userSpaceOnUse" x1="0" y1="900" x2="0" y2="1120"><stop offset="0.259" stop-color="#e04818"/><stop offset="0.395" stop-color="#dc4416"/><stop offset="0.531" stop-color="#dc4416"/><stop offset="0.613" stop-color="#c53f13"/><stop offset="0.676" stop-color="#a5320f"/><stop offset="0.739" stop-color="#84240a"/></linearGradient><linearGradient id="s90" gradientUnits="userSpaceOnUse" x1="0" y1="900" x2="0" y2="1120"><stop offset="0.262" stop-color="#e04818"/><stop offset="0.398" stop-color="#dc4416"/><stop offset="0.534" stop-color="#dc4416"/><stop offset="0.614" stop-color="#c63f14"/><stop offset="0.678" stop-color="#a5320f"/><stop offset="0.741" stop-color="#84240a"/></linearGradient><linearGradient id="s91" gradientUnits="userSpaceOnUse" x1="0" y1="900" x2="0" y2="1120"><stop offset="0.264" stop-color="#e04818"/><stop offset="0.401" stop-color="#dc4416"/><stop offset="0.537" stop-color="#dc4416"/><stop offset="0.616" stop-color="#c64014"/><stop offset="0.679" stop-color="#a5320f"/><stop offset="0.743" stop-color="#84240a"/></linearGradient><linearGradient id="s92" gradientUnits="userSpaceOnUse" x1="0" y1="900" x2="0" y2="1120"><stop offset="0.267" stop-color="#e04818"/><stop offset="0.403" stop-color="#dc4416"/><stop offset="0.540" stop-color="#dc4416"/><stop offset="0.617" stop-color="#c64014"/><stop offset="0.681" stop-color="#a5320f"/><stop offset="0.744" stop-color="#84240a"/></linearGradient><linearGradient id="s93" gradientUnits="userSpaceOnUse" x1="0" y1="900" x2="0" y2="1120"><stop offset="0.270" stop-color="#e04818"/><stop offset="0.406" stop-color="#dc4416"/><stop offset="0.543" stop-color="#dc4416"/><stop offset="0.618" stop-color="#c74014"/><stop offset="0.682" stop-color="#a5320f"/><stop offset="0.746" stop-color="#84240a"/></linearGradient><linearGradient id="s94" gradientUnits="userSpaceOnUse" x1="0" y1="900" x2="0" y2="1120"><stop offset="0.273" stop-color="#e04818"/><stop offset="0.409" stop-color="#dc4416"/><stop offset="0.545" stop-color="#dc4416"/><stop offset="0.619" stop-color="#c74114"/><stop offset="0.684" stop-color="#a5320f"/><stop offset="0.748" stop-color="#84240a"/></linearGradient><linearGradient id="s95" gradientUnits="userSpaceOnUse" x1="0" y1="900" x2="0" y2="1120"><stop offset="0.275" stop-color="#e04818"/><stop offset="0.412" stop-color="#dc4416"/><stop offset="0.548" stop-color="#dc4416"/><stop offset="0.620" stop-color="#c74114"/><stop offset="0.685" stop-color="#a6320f"/><stop offset="0.750" stop-color="#84240a"/></linearGradient><linearGradient id="s96" gradientUnits="userSpaceOnUse" x1="0" y1="900" x2="0" y2="1120"><stop offset="0.278" stop-color="#e04818"/><stop offset="0.414" stop-color="#dc4416"/><stop offset="0.551" stop-color="#dc4416"/><stop offset="0.621" stop-color="#c84114"/><stop offset="0.686" stop-color="#a6330f"/><stop offset="0.751" stop-color="#84240a"/></linearGradient><linearGradient id="s97" gradientUnits="userSpaceOnUse" x1="0" y1="900" x2="0" y2="1120"><stop offset="0.281" stop-color="#e04818"/><stop offset="0.417" stop-color="#dc4416"/><stop offset="0.553" stop-color="#dc4416"/><stop offset="0.622" stop-color="#c84214"/><stop offset="0.688" stop-color="#a6330f"/><stop offset="0.753" stop-color="#84240a"/></linearGradient><linearGradient id="s98" gradientUnits="userSpaceOnUse" x1="0" y1="900" x2="0" y2="1120"><stop offset="0.283" stop-color="#e04818"/><stop offset="0.420" stop-color="#dc4416"/><stop offset="0.556" stop-color="#dc4416"/><stop offset="0.623" stop-color="#c84214"/><stop offset="0.689" stop-color="#a6330f"/><stop offset="0.755" stop-color="#84240a"/></linearGradient><linearGradient id="s99" gradientUnits="userSpaceOnUse" x1="0" y1="900" x2="0" y2="1120"><stop offset="0.286" stop-color="#e04818"/><stop offset="0.422" stop-color="#dc4416"/><stop offset="0.558" stop-color="#dc4416"/><stop offset="0.624" stop-color="#c94214"/><stop offset="0.690" stop-color="#a6330f"/><stop offset="0.756" stop-color="#84240a"/></linearGradient><linearGradient id="s100" gradientUnits="userSpaceOnUse" x1="0" y1="900" x2="0" y2="1120"><stop offset="0.288" stop-color="#e04818"/><stop offset="0.425" stop-color="#dc4416"/><stop offset="0.561" stop-color="#dc4416"/><stop offset="0.625" stop-color="#c94314"/><stop offset="0.692" stop-color="#a7330f"/><stop offset="0.758" stop-color="#84240a"/></linearGradient><linearGradient id="s101" gradientUnits="userSpaceOnUse" x1="0" y1="900" x2="0" y2="1120"><stop offset="0.291" stop-color="#e04818"/><stop offset="0.427" stop-color="#dc4416"/><stop offset="0.563" stop-color="#dc4416"/><stop offset="0.626" stop-color="#c94314"/><stop offset="0.693" stop-color="#a7340f"/><stop offset="0.759" stop-color="#84240a"/></linearGradient><linearGradient id="s102" gradientUnits="userSpaceOnUse" x1="0" y1="900" x2="0" y2="1120"><stop offset="0.293" stop-color="#e04818"/><stop offset="0.429" stop-color="#dc4416"/><stop offset="0.566" stop-color="#dc4416"/><stop offset="0.627" stop-color="#ca4315"/><stop offset="0.694" stop-color="#a7340f"/><stop offset="0.761" stop-color="#84240a"/></linearGradient><linearGradient id="s103" gradientUnits="userSpaceOnUse" x1="0" y1="900" x2="0" y2="1120"><stop offset="0.295" stop-color="#e04818"/><stop offset="0.432" stop-color="#dc4416"/><stop offset="0.568" stop-color="#dc4416"/><stop offset="0.628" stop-color="#ca4415"/><stop offset="0.695" stop-color="#a7340f"/><stop offset="0.762" stop-color="#84240a"/></linearGradient><linearGradient id="s104" gradientUnits="userSpaceOnUse" x1="0" y1="900" x2="0" y2="1120"><stop offset="0.298" stop-color="#e04818"/><stop offset="0.434" stop-color="#dc4416"/><stop offset="0.570" stop-color="#dc4416"/><stop offset="0.629" stop-color="#ca4415"/><stop offset="0.696" stop-color="#a7340f"/><stop offset="0.764" stop-color="#84240a"/></linearGradient><linearGradient id="s105" gradientUnits="userSpaceOnUse" x1="0" y1="900" x2="0" y2="1120"><stop offset="0.300" stop-color="#e04818"/><stop offset="0.436" stop-color="#dc4416"/><stop offset="0.572" stop-color="#dc4416"/><stop offset="0.630" stop-color="#cb4415"/><stop offset="0.697" stop-color="#a7340f"/><stop offset="0.765" stop-color="#84240a"/></linearGradient><linearGradient id="s106" gradientUnits="userSpaceOnUse" x1="0" y1="900" x2="0" y2="1120"><stop offset="0.302" stop-color="#e04818"/><stop offset="0.438" stop-color="#dc4416"/><stop offset="0.574" stop-color="#dc4416"/><stop offset="0.630" stop-color="#cb4515"/><stop offset="0.699" stop-color="#a8340f"/><stop offset="0.767" stop-color="#84240a"/></linearGradient><linearGradient id="s107" gradientUnits="userSpaceOnUse" x1="0" y1="900" x2="0" y2="1120"><stop offset="0.304" stop-color="#e04818"/><stop offset="0.440" stop-color="#dc4416"/><stop offset="0.576" stop-color="#dc4416"/><stop offset="0.631" stop-color="#cc4515"/><stop offset="0.700" stop-color="#a83510"/><stop offset="0.768" stop-color="#84240a"/></linearGradient><linearGradient id="s108" gradientUnits="userSpaceOnUse" x1="0" y1="900" x2="0" y2="1120"><stop offset="0.306" stop-color="#e04818"/><stop offset="0.442" stop-color="#dc4416"/><stop offset="0.578" stop-color="#dc4416"/><stop offset="0.632" stop-color="#cc4615"/><stop offset="0.701" stop-color="#a83510"/><stop offset="0.769" stop-color="#84240a"/></linearGradient><linearGradient id="s109" gradientUnits="userSpaceOnUse" x1="0" y1="900" x2="0" y2="1120"><stop offset="0.307" stop-color="#e04818"/><stop offset="0.444" stop-color="#dc4416"/><stop offset="0.580" stop-color="#dc4416"/><stop offset="0.633" stop-color="#cc4615"/><stop offset="0.701" stop-color="#a83510"/><stop offset="0.770" stop-color="#84240a"/></linearGradient><linearGradient id="s110" gradientUnits="userSpaceOnUse" x1="0" y1="900" x2="0" y2="1120"><stop offset="0.309" stop-color="#e04818"/><stop offset="0.445" stop-color="#dc4416"/><stop offset="0.582" stop-color="#dc4416"/><stop offset="0.633" stop-color="#cd4615"/><stop offset="0.702" stop-color="#a83510"/><stop offset="0.772" stop-color="#84240a"/></linearGradient><linearGradient id="s111" gradientUnits="userSpaceOnUse" x1="0" y1="900" x2="0" y2="1120"><stop offset="0.311" stop-color="#e04818"/><stop offset="0.447" stop-color="#dc4416"/><stop offset="0.583" stop-color="#dc4416"/><stop offset="0.634" stop-color="#cd4715"/><stop offset="0.703" stop-color="#a83510"/><stop offset="0.773" stop-color="#84240a"/></linearGradient><linearGradient id="s112" gradientUnits="userSpaceOnUse" x1="0" y1="900" x2="0" y2="1120"><stop offset="0.312" stop-color="#e04818"/><stop offset="0.448" stop-color="#dc4416"/><stop offset="0.585" stop-color="#dc4416"/><stop offset="0.634" stop-color="#cd4715"/><stop offset="0.704" stop-color="#a93610"/><stop offset="0.774" stop-color="#84240a"/></linearGradient><linearGradient id="s113" gradientUnits="userSpaceOnUse" x1="0" y1="900" x2="0" y2="1120"><stop offset="0.313" stop-color="#e04818"/><stop offset="0.450" stop-color="#dc4416"/><stop offset="0.586" stop-color="#dc4416"/><stop offset="0.635" stop-color="#ce4715"/><stop offset="0.705" stop-color="#a93610"/><stop offset="0.775" stop-color="#84240a"/></linearGradient><linearGradient id="s114" gradientUnits="userSpaceOnUse" x1="0" y1="900" x2="0" y2="1120"><stop offset="0.314" stop-color="#e04818"/><stop offset="0.451" stop-color="#dc4416"/><stop offset="0.587" stop-color="#dc4416"/><stop offset="0.635" stop-color="#ce4816"/><stop offset="0.706" stop-color="#a93610"/><stop offset="0.776" stop-color="#84240a"/></linearGradient><linearGradient id="s115" gradientUnits="userSpaceOnUse" x1="0" y1="900" x2="0" y2="1120"><stop offset="0.315" stop-color="#e04818"/><stop offset="0.452" stop-color="#dc4416"/><stop offset="0.588" stop-color="#dc4416"/><stop offset="0.635" stop-color="#ce4816"/><stop offset="0.706" stop-color="#a93610"/><stop offset="0.777" stop-color="#84240a"/></linearGradient><linearGradient id="s116" gradientUnits="userSpaceOnUse" x1="0" y1="900" x2="0" y2="1120"><stop offset="0.316" stop-color="#e04818"/><stop offset="0.453" stop-color="#dc4416"/><stop offset="0.589" stop-color="#dc4416"/><stop offset="0.636" stop-color="#cf4816"/><stop offset="0.707" stop-color="#a93610"/><stop offset="0.778" stop-color="#84240a"/></linearGradient><linearGradient id="s117" gradientUnits="userSpaceOnUse" x1="0" y1="900" x2="0" y2="1120"><stop offset="0.317" stop-color="#e04818"/><stop offset="0.453" stop-color="#dc4416"/><stop offset="0.590" stop-color="#dc4416"/><stop offset="0.636" stop-color="#cf4916"/><stop offset="0.707" stop-color="#a93610"/><stop offset="0.779" stop-color="#84240a"/></linearGradient><linearGradient id="s118" gradientUnits="userSpaceOnUse" x1="0" y1="900" x2="0" y2="1120"><stop offset="0.318" stop-color="#e04818"/><stop offset="0.454" stop-color="#dc4416"/><stop offset="0.590" stop-color="#dc4416"/><stop offset="0.636" stop-color="#cf4916"/><stop offset="0.708" stop-color="#aa3710"/><stop offset="0.780" stop-color="#84240a"/></linearGradient><linearGradient id="s119" gradientUnits="userSpaceOnUse" x1="0" y1="900" x2="0" y2="1120"><stop offset="0.318" stop-color="#e04818"/><stop offset="0.454" stop-color="#dc4416"/><stop offset="0.591" stop-color="#dc4416"/><stop offset="0.636" stop-color="#cf4916"/><stop offset="0.708" stop-color="#aa3710"/><stop offset="0.781" stop-color="#84240a"/></linearGradient><linearGradient id="s120" gradientUnits="userSpaceOnUse" x1="0" y1="900" x2="0" y2="1120"><stop offset="0.318" stop-color="#e04818"/><stop offset="0.454" stop-color="#dc4416"/><stop offset="0.591" stop-color="#dc4416"/><stop offset="0.636" stop-color="#d04a16"/><stop offset="0.709" stop-color="#aa3710"/><stop offset="0.781" stop-color="#84240a"/></linearGradient><linearGradient id="s121" gradientUnits="userSpaceOnUse" x1="0" y1="900" x2="0" y2="1120"><stop offset="0.318" stop-color="#e04818"/><stop offset="0.455" stop-color="#dc4416"/><stop offset="0.591" stop-color="#dc4416"/><stop offset="0.636" stop-color="#d04a16"/><stop offset="0.709" stop-color="#aa3710"/><stop offset="0.782" stop-color="#84240a"/></linearGradient><linearGradient id="s122" gradientUnits="userSpaceOnUse" x1="0" y1="900" x2="0" y2="1120"><stop offset="0.318" stop-color="#e04818"/><stop offset="0.454" stop-color="#dc4416"/><stop offset="0.591" stop-color="#dc4416"/><stop offset="0.636" stop-color="#d04a16"/><stop offset="0.710" stop-color="#aa3710"/><stop offset="0.783" stop-color="#84240a"/></linearGradient><linearGradient id="s123" gradientUnits="userSpaceOnUse" x1="0" y1="900" x2="0" y2="1120"><stop offset="0.318" stop-color="#e04818"/><stop offset="0.454" stop-color="#dc4416"/><stop offset="0.591" stop-color="#dc4416"/><stop offset="0.636" stop-color="#d14b16"/><stop offset="0.710" stop-color="#aa3710"/><stop offset="0.783" stop-color="#84240a"/></linearGradient><linearGradient id="s124" gradientUnits="userSpaceOnUse" x1="0" y1="900" x2="0" y2="1120"><stop offset="0.318" stop-color="#e04818"/><stop offset="0.454" stop-color="#dc4416"/><stop offset="0.590" stop-color="#dc4416"/><stop offset="0.636" stop-color="#d14b16"/><stop offset="0.710" stop-color="#aa3810"/><stop offset="0.784" stop-color="#84240a"/></linearGradient><linearGradient id="s125" gradientUnits="userSpaceOnUse" x1="0" y1="900" x2="0" y2="1120"><stop offset="0.317" stop-color="#e04818"/><stop offset="0.454" stop-color="#dc4416"/><stop offset="0.590" stop-color="#dc4416"/><stop offset="0.636" stop-color="#d14b16"/><stop offset="0.711" stop-color="#ab3810"/><stop offset="0.785" stop-color="#84240a"/></linearGradient><linearGradient id="s126" gradientUnits="userSpaceOnUse" x1="0" y1="900" x2="0" y2="1120"><stop offset="0.317" stop-color="#e04818"/><stop offset="0.453" stop-color="#dc4416"/><stop offset="0.590" stop-color="#dc4416"/><stop offset="0.636" stop-color="#d24c16"/><stop offset="0.711" stop-color="#ab3810"/><stop offset="0.785" stop-color="#84240a"/></linearGradient><linearGradient id="s127" gradientUnits="userSpaceOnUse" x1="0" y1="900" x2="0" y2="1120"><stop offset="0.316" stop-color="#e04818"/><stop offset="0.453" stop-color="#dc4416"/><stop offset="0.589" stop-color="#dc4416"/><stop offset="0.636" stop-color="#d24c16"/><stop offset="0.711" stop-color="#ab3810"/><stop offset="0.786" stop-color="#84240a"/></linearGradient><linearGradient id="s128" gradientUnits="userSpaceOnUse" x1="0" y1="900" x2="0" y2="1120"><stop offset="0.316" stop-color="#e04818"/><stop offset="0.452" stop-color="#dc4416"/><stop offset="0.588" stop-color="#dc4416"/><stop offset="0.636" stop-color="#d24d16"/><stop offset="0.712" stop-color="#ab3810"/><stop offset="0.787" stop-color="#84240a"/></linearGradient><linearGradient id="s129" gradientUnits="userSpaceOnUse" x1="0" y1="900" x2="0" y2="1120"><stop offset="0.315" stop-color="#e04818"/><stop offset="0.451" stop-color="#dc4416"/><stop offset="0.588" stop-color="#dc4416"/><stop offset="0.636" stop-color="#d24d16"/><stop offset="0.712" stop-color="#ab3810"/><stop offset="0.787" stop-color="#84240a"/></linearGradient><linearGradient id="s130" gradientUnits="userSpaceOnUse" x1="0" y1="900" x2="0" y2="1120"><stop offset="0.314" stop-color="#e04818"/><stop offset="0.451" stop-color="#dc4416"/><stop offset="0.587" stop-color="#dc4416"/><stop offset="0.636" stop-color="#d34d16"/><stop offset="0.712" stop-color="#ab3910"/><stop offset="0.788" stop-color="#84240a"/></linearGradient><linearGradient id="s131" gradientUnits="userSpaceOnUse" x1="0" y1="900" x2="0" y2="1120"><stop offset="0.314" stop-color="#e04818"/><stop offset="0.450" stop-color="#dc4416"/><stop offset="0.586" stop-color="#dc4416"/><stop offset="0.636" stop-color="#d34e17"/><stop offset="0.713" stop-color="#ac3910"/><stop offset="0.789" stop-color="#84240a"/></linearGradient><linearGradient id="s132" gradientUnits="userSpaceOnUse" x1="0" y1="900" x2="0" y2="1120"><stop offset="0.313" stop-color="#e04818"/><stop offset="0.449" stop-color="#dc4416"/><stop offset="0.585" stop-color="#dc4416"/><stop offset="0.636" stop-color="#d34e17"/><stop offset="0.713" stop-color="#ac3910"/><stop offset="0.789" stop-color="#84240a"/></linearGradient><linearGradient id="s133" gradientUnits="userSpaceOnUse" x1="0" y1="900" x2="0" y2="1120"><stop offset="0.312" stop-color="#e04818"/><stop offset="0.448" stop-color="#dc4416"/><stop offset="0.585" stop-color="#dc4416"/><stop offset="0.636" stop-color="#d44f17"/><stop offset="0.713" stop-color="#ac3910"/><stop offset="0.790" stop-color="#84240a"/></linearGradient><linearGradient id="s134" gradientUnits="userSpaceOnUse" x1="0" y1="900" x2="0" y2="1120"><stop offset="0.311" stop-color="#e04818"/><stop offset="0.447" stop-color="#dc4416"/><stop offset="0.584" stop-color="#dc4416"/><stop offset="0.636" stop-color="#d44f17"/><stop offset="0.713" stop-color="#ac3a10"/><stop offset="0.791" stop-color="#84240a"/></linearGradient><linearGradient id="s135" gradientUnits="userSpaceOnUse" x1="0" y1="900" x2="0" y2="1120"><stop offset="0.310" stop-color="#e04818"/><stop offset="0.446" stop-color="#dc4416"/><stop offset="0.583" stop-color="#dc4416"/><stop offset="0.636" stop-color="#d44f17"/><stop offset="0.714" stop-color="#ac3a10"/><stop offset="0.791" stop-color="#84240a"/></linearGradient><linearGradient id="s136" gradientUnits="userSpaceOnUse" x1="0" y1="900" x2="0" y2="1120"><stop offset="0.309" stop-color="#e04818"/><stop offset="0.445" stop-color="#dc4416"/><stop offset="0.582" stop-color="#dc4416"/><stop offset="0.636" stop-color="#d55017"/><stop offset="0.714" stop-color="#ac3a10"/><stop offset="0.792" stop-color="#84240a"/></linearGradient><linearGradient id="s137" gradientUnits="userSpaceOnUse" x1="0" y1="900" x2="0" y2="1120"><stop offset="0.308" stop-color="#e04818"/><stop offset="0.444" stop-color="#dc4416"/><stop offset="0.580" stop-color="#dc4416"/><stop offset="0.636" stop-color="#d55017"/><stop offset="0.714" stop-color="#ac3a10"/><stop offset="0.792" stop-color="#84240a"/></linearGradient><linearGradient id="s138" gradientUnits="userSpaceOnUse" x1="0" y1="900" x2="0" y2="1120"><stop offset="0.307" stop-color="#e04818"/><stop offset="0.443" stop-color="#dc4416"/><stop offset="0.579" stop-color="#dc4416"/><stop offset="0.636" stop-color="#d55117"/><stop offset="0.715" stop-color="#ad3a10"/><stop offset="0.793" stop-color="#84240a"/></linearGradient><linearGradient id="s139" gradientUnits="userSpaceOnUse" x1="0" y1="900" x2="0" y2="1120"><stop offset="0.305" stop-color="#e04818"/><stop offset="0.442" stop-color="#dc4416"/><stop offset="0.578" stop-color="#dc4416"/><stop offset="0.636" stop-color="#d55117"/><stop offset="0.715" stop-color="#ad3b10"/><stop offset="0.793" stop-color="#84240a"/></linearGradient><linearGradient id="s140" gradientUnits="userSpaceOnUse" x1="0" y1="900" x2="0" y2="1120"><stop offset="0.304" stop-color="#e04818"/><stop offset="0.441" stop-color="#dc4416"/><stop offset="0.577" stop-color="#dc4416"/><stop offset="0.636" stop-color="#d65217"/><stop offset="0.715" stop-color="#ad3b10"/><stop offset="0.794" stop-color="#84240a"/></linearGradient><linearGradient id="s141" gradientUnits="userSpaceOnUse" x1="0" y1="900" x2="0" y2="1120"><stop offset="0.303" stop-color="#e04818"/><stop offset="0.439" stop-color="#dc4416"/><stop offset="0.576" stop-color="#dc4416"/><stop offset="0.636" stop-color="#d65217"/><stop offset="0.715" stop-color="#ad3b10"/><stop offset="0.794" stop-color="#84240a"/></linearGradient><linearGradient id="s142" gradientUnits="userSpaceOnUse" x1="0" y1="900" x2="0" y2="1120"><stop offset="0.302" stop-color="#e04818"/><stop offset="0.438" stop-color="#dc4416"/><stop offset="0.575" stop-color="#dc4416"/><stop offset="0.636" stop-color="#d65217"/><stop offset="0.716" stop-color="#ad3b11"/><stop offset="0.795" stop-color="#84240a"/></linearGradient><linearGradient id="s143" gradientUnits="userSpaceOnUse" x1="0" y1="900" x2="0" y2="1120"><stop offset="0.301" stop-color="#e04818"/><stop offset="0.437" stop-color="#dc4416"/><stop offset="0.573" stop-color="#dc4416"/><stop offset="0.636" stop-color="#d75317"/><stop offset="0.716" stop-color="#ad3b11"/><stop offset="0.795" stop-color="#84240a"/></linearGradient><linearGradient id="s144" gradientUnits="userSpaceOnUse" x1="0" y1="900" x2="0" y2="1120"><stop offset="0.299" stop-color="#e04818"/><stop offset="0.436" stop-color="#dc4416"/><stop offset="0.572" stop-color="#dc4416"/><stop offset="0.636" stop-color="#d75317"/><stop offset="0.716" stop-color="#ae3c11"/><stop offset="0.796" stop-color="#84240a"/></linearGradient><linearGradient id="s145" gradientUnits="userSpaceOnUse" x1="0" y1="900" x2="0" y2="1120"><stop offset="0.298" stop-color="#e04818"/><stop offset="0.435" stop-color="#dc4416"/><stop offset="0.571" stop-color="#dc4416"/><stop offset="0.636" stop-color="#d75417"/><stop offset="0.716" stop-color="#ae3c11"/><stop offset="0.796" stop-color="#84240a"/></linearGradient><linearGradient id="s146" gradientUnits="userSpaceOnUse" x1="0" y1="900" x2="0" y2="1120"><stop offset="0.297" stop-color="#e04818"/><stop offset="0.433" stop-color="#dc4416"/><stop offset="0.570" stop-color="#dc4416"/><stop offset="0.636" stop-color="#d85417"/><stop offset="0.717" stop-color="#ae3c11"/><stop offset="0.797" stop-color="#84240a"/></linearGradient><linearGradient id="s147" gradientUnits="userSpaceOnUse" x1="0" y1="900" x2="0" y2="1120"><stop offset="0.296" stop-color="#e04818"/><stop offset="0.432" stop-color="#dc4416"/><stop offset="0.568" stop-color="#dc4416"/><stop offset="0.636" stop-color="#d85517"/><stop offset="0.717" stop-color="#ae3c11"/><stop offset="0.797" stop-color="#84240a"/></linearGradient><linearGradient id="s148" gradientUnits="userSpaceOnUse" x1="0" y1="900" x2="0" y2="1120"><stop offset="0.295" stop-color="#e04818"/><stop offset="0.431" stop-color="#dc4416"/><stop offset="0.567" stop-color="#dc4416"/><stop offset="0.636" stop-color="#d85517"/><stop offset="0.717" stop-color="#ae3d11"/><stop offset="0.798" stop-color="#84240a"/></linearGradient><linearGradient id="s149" gradientUnits="userSpaceOnUse" x1="0" y1="900" x2="0" y2="1120"><stop offset="0.293" stop-color="#e04818"/><stop offset="0.430" stop-color="#dc4416"/><stop offset="0.566" stop-color="#dc4416"/><stop offset="0.636" stop-color="#d95517"/><stop offset="0.717" stop-color="#ae3d11"/><stop offset="0.798" stop-color="#84240a"/></linearGradient><linearGradient id="s150" gradientUnits="userSpaceOnUse" x1="0" y1="900" x2="0" y2="1120"><stop offset="0.292" stop-color="#e04818"/><stop offset="0.429" stop-color="#dc4416"/><stop offset="0.565" stop-color="#dc4416"/><stop offset="0.636" stop-color="#d95617"/><stop offset="0.717" stop-color="#ae3d11"/><stop offset="0.798" stop-color="#84240a"/></linearGradient><linearGradient id="s151" gradientUnits="userSpaceOnUse" x1="0" y1="900" x2="0" y2="1120"><stop offset="0.291" stop-color="#e04818"/><stop offset="0.427" stop-color="#dc4416"/><stop offset="0.564" stop-color="#dc4416"/><stop offset="0.636" stop-color="#d95617"/><stop offset="0.717" stop-color="#af3d11"/><stop offset="0.799" stop-color="#84240a"/></linearGradient><linearGradient id="s152" gradientUnits="userSpaceOnUse" x1="0" y1="900" x2="0" y2="1120"><stop offset="0.290" stop-color="#e04818"/><stop offset="0.426" stop-color="#dc4416"/><stop offset="0.563" stop-color="#dc4416"/><stop offset="0.636" stop-color="#d95717"/><stop offset="0.718" stop-color="#af3d11"/><stop offset="0.799" stop-color="#84240a"/></linearGradient><linearGradient id="s153" gradientUnits="userSpaceOnUse" x1="0" y1="900" x2="0" y2="1120"><stop offset="0.289" stop-color="#e04818"/><stop offset="0.425" stop-color="#dc4416"/><stop offset="0.562" stop-color="#dc4416"/><stop offset="0.636" stop-color="#da5718"/><stop offset="0.718" stop-color="#af3e11"/><stop offset="0.799" stop-color="#84240a"/></linearGradient><linearGradient id="s154" gradientUnits="userSpaceOnUse" x1="0" y1="900" x2="0" y2="1120"><stop offset="0.288" stop-color="#e04818"/><stop offset="0.424" stop-color="#dc4416"/><stop offset="0.560" stop-color="#dc4416"/><stop offset="0.636" stop-color="#da5718"/><stop offset="0.718" stop-color="#af3e11"/><stop offset="0.799" stop-color="#84240a"/></linearGradient><linearGradient id="s155" gradientUnits="userSpaceOnUse" x1="0" y1="900" x2="0" y2="1120"><stop offset="0.287" stop-color="#e04818"/><stop offset="0.423" stop-color="#dc4416"/><stop offset="0.559" stop-color="#dc4416"/><stop offset="0.636" stop-color="#da5818"/><stop offset="0.718" stop-color="#af3e11"/><stop offset="0.799" stop-color="#84240a"/></linearGradient><linearGradient id="s156" gradientUnits="userSpaceOnUse" x1="0" y1="900" x2="0" y2="1120"><stop offset="0.286" stop-color="#e04818"/><stop offset="0.422" stop-color="#dc4416"/><stop offset="0.558" stop-color="#dc4416"/><stop offset="0.636" stop-color="#db5818"/><stop offset="0.718" stop-color="#af3e11"/><stop offset="0.800" stop-color="#84240a"/></linearGradient><linearGradient id="s157" gradientUnits="userSpaceOnUse" x1="0" y1="900" x2="0" y2="1120"><stop offset="0.285" stop-color="#e04818"/><stop offset="0.421" stop-color="#dc4416"/><stop offset="0.558" stop-color="#dc4416"/><stop offset="0.636" stop-color="#db5918"/><stop offset="0.718" stop-color="#af3e11"/><stop offset="0.800" stop-color="#84240a"/></linearGradient><linearGradient id="s158" gradientUnits="userSpaceOnUse" x1="0" y1="900" x2="0" y2="1120"><stop offset="0.284" stop-color="#e04818"/><stop offset="0.420" stop-color="#dc4416"/><stop offset="0.557" stop-color="#dc4416"/><stop offset="0.636" stop-color="#db5918"/><stop offset="0.718" stop-color="#b03f11"/><stop offset="0.800" stop-color="#84240a"/></linearGradient><linearGradient id="s159" gradientUnits="userSpaceOnUse" x1="0" y1="900" x2="0" y2="1120"><stop offset="0.283" stop-color="#e04818"/><stop offset="0.419" stop-color="#dc4416"/><stop offset="0.556" stop-color="#dc4416"/><stop offset="0.636" stop-color="#dc5918"/><stop offset="0.718" stop-color="#b03f11"/><stop offset="0.800" stop-color="#84240a"/></linearGradient><linearGradient id="s160" gradientUnits="userSpaceOnUse" x1="0" y1="900" x2="0" y2="1120"><stop offset="0.282" stop-color="#e04818"/><stop offset="0.419" stop-color="#dc4416"/><stop offset="0.555" stop-color="#dc4416"/><stop offset="0.636" stop-color="#dc5a18"/><stop offset="0.718" stop-color="#b03f11"/><stop offset="0.800" stop-color="#84240a"/></linearGradient><linearGradient id="s161" gradientUnits="userSpaceOnUse" x1="0" y1="900" x2="0" y2="1120"><stop offset="0.282" stop-color="#e04818"/><stop offset="0.418" stop-color="#dc4416"/><stop offset="0.554" stop-color="#dc4416"/><stop offset="0.636" stop-color="#dc5a18"/><stop offset="0.718" stop-color="#b03f11"/><stop offset="0.800" stop-color="#84240a"/></linearGradient><linearGradient id="s162" gradientUnits="userSpaceOnUse" x1="0" y1="900" x2="0" y2="1120"><stop offset="0.281" stop-color="#e04818"/><stop offset="0.417" stop-color="#dc4416"/><stop offset="0.554" stop-color="#dc4416"/><stop offset="0.636" stop-color="#dc5a18"/><stop offset="0.718" stop-color="#b03f11"/><stop offset="0.800" stop-color="#84240a"/></linearGradient><linearGradient id="s163" gradientUnits="userSpaceOnUse" x1="0" y1="900" x2="0" y2="1120"><stop offset="0.280" stop-color="#e04818"/><stop offset="0.417" stop-color="#dc4416"/><stop offset="0.553" stop-color="#dc4416"/><stop offset="0.636" stop-color="#dd5b18"/><stop offset="0.718" stop-color="#b03f11"/><stop offset="0.800" stop-color="#84240a"/></linearGradient><linearGradient id="s164" gradientUnits="userSpaceOnUse" x1="0" y1="900" x2="0" y2="1120"><stop offset="0.280" stop-color="#e04818"/><stop offset="0.416" stop-color="#dc4416"/><stop offset="0.552" stop-color="#dc4416"/><stop offset="0.636" stop-color="#dd5b18"/><stop offset="0.718" stop-color="#b04011"/><stop offset="0.800" stop-color="#84240a"/></linearGradient><linearGradient id="s165" gradientUnits="userSpaceOnUse" x1="0" y1="900" x2="0" y2="1120"><stop offset="0.279" stop-color="#e04818"/><stop offset="0.415" stop-color="#dc4416"/><stop offset="0.552" stop-color="#dc4416"/><stop offset="0.636" stop-color="#dd5b18"/><stop offset="0.718" stop-color="#b14011"/><stop offset="0.800" stop-color="#84240a"/></linearGradient><linearGradient id="s166" gradientUnits="userSpaceOnUse" x1="0" y1="900" x2="0" y2="1120"><stop offset="0.279" stop-color="#e04818"/><stop offset="0.415" stop-color="#dc4416"/><stop offset="0.551" stop-color="#dc4416"/><stop offset="0.636" stop-color="#de5c18"/><stop offset="0.718" stop-color="#b14011"/><stop offset="0.799" stop-color="#84240a"/></linearGradient><linearGradient id="s167" gradientUnits="userSpaceOnUse" x1="0" y1="900" x2="0" y2="1120"><stop offset="0.278" stop-color="#e04818"/><stop offset="0.414" stop-color="#dc4416"/><stop offset="0.551" stop-color="#dc4416"/><stop offset="0.636" stop-color="#de5c18"/><stop offset="0.718" stop-color="#b14011"/><stop offset="0.799" stop-color="#84240a"/></linearGradient><linearGradient id="s168" gradientUnits="userSpaceOnUse" x1="0" y1="900" x2="0" y2="1120"><stop offset="0.277" stop-color="#e04818"/><stop offset="0.414" stop-color="#dc4416"/><stop offset="0.550" stop-color="#dc4416"/><stop offset="0.636" stop-color="#de5d19"/><stop offset="0.718" stop-color="#b14011"/><stop offset="0.799" stop-color="#84240a"/></linearGradient><linearGradient id="s169" gradientUnits="userSpaceOnUse" x1="0" y1="900" x2="0" y2="1120"><stop offset="0.277" stop-color="#e04818"/><stop offset="0.413" stop-color="#dc4416"/><stop offset="0.550" stop-color="#dc4416"/><stop offset="0.636" stop-color="#de5d19"/><stop offset="0.717" stop-color="#b14011"/><stop offset="0.799" stop-color="#84240a"/></linearGradient><linearGradient id="s170" gradientUnits="userSpaceOnUse" x1="0" y1="900" x2="0" y2="1120"><stop offset="0.276" stop-color="#e04818"/><stop offset="0.413" stop-color="#dc4416"/><stop offset="0.549" stop-color="#dc4416"/><stop offset="0.636" stop-color="#df5d19"/><stop offset="0.717" stop-color="#b14111"/><stop offset="0.798" stop-color="#84240a"/></linearGradient><linearGradient id="s171" gradientUnits="userSpaceOnUse" x1="0" y1="900" x2="0" y2="1120"><stop offset="0.276" stop-color="#e04818"/><stop offset="0.412" stop-color="#dc4416"/><stop offset="0.549" stop-color="#dc4416"/><stop offset="0.636" stop-color="#df5e19"/><stop offset="0.717" stop-color="#b24111"/><stop offset="0.798" stop-color="#84240a"/></linearGradient><linearGradient id="s172" gradientUnits="userSpaceOnUse" x1="0" y1="900" x2="0" y2="1120"><stop offset="0.275" stop-color="#e04818"/><stop offset="0.412" stop-color="#dc4416"/><stop offset="0.548" stop-color="#dc4416"/><stop offset="0.636" stop-color="#df5e19"/><stop offset="0.717" stop-color="#b24111"/><stop offset="0.798" stop-color="#84240a"/></linearGradient><linearGradient id="s173" gradientUnits="userSpaceOnUse" x1="0" y1="900" x2="0" y2="1120"><stop offset="0.275" stop-color="#e04818"/><stop offset="0.411" stop-color="#dc4416"/><stop offset="0.547" stop-color="#dc4416"/><stop offset="0.636" stop-color="#e05e19"/><stop offset="0.716" stop-color="#b24112"/><stop offset="0.797" stop-color="#84240a"/></linearGradient><linearGradient id="s174" gradientUnits="userSpaceOnUse" x1="0" y1="900" x2="0" y2="1120"><stop offset="0.274" stop-color="#e04818"/><stop offset="0.411" stop-color="#dc4416"/><stop offset="0.547" stop-color="#dc4416"/><stop offset="0.636" stop-color="#e05f19"/><stop offset="0.716" stop-color="#b24112"/><stop offset="0.797" stop-color="#84240a"/></linearGradient><linearGradient id="s175" gradientUnits="userSpaceOnUse" x1="0" y1="900" x2="0" y2="1120"><stop offset="0.274" stop-color="#e04818"/><stop offset="0.410" stop-color="#dc4416"/><stop offset="0.547" stop-color="#dc4416"/><stop offset="0.636" stop-color="#e05f19"/><stop offset="0.716" stop-color="#b24112"/><stop offset="0.796" stop-color="#84240a"/></linearGradient><linearGradient id="s176" gradientUnits="userSpaceOnUse" x1="0" y1="900" x2="0" y2="1120"><stop offset="0.273" stop-color="#e04818"/><stop offset="0.410" stop-color="#dc4416"/><stop offset="0.546" stop-color="#dc4416"/><stop offset="0.635" stop-color="#e15f19"/><stop offset="0.716" stop-color="#b24212"/><stop offset="0.796" stop-color="#84240a"/></linearGradient><linearGradient id="s177" gradientUnits="userSpaceOnUse" x1="0" y1="900" x2="0" y2="1120"><stop offset="0.273" stop-color="#e04818"/><stop offset="0.409" stop-color="#dc4416"/><stop offset="0.546" stop-color="#dc4416"/><stop offset="0.635" stop-color="#e16019"/><stop offset="0.715" stop-color="#b24212"/><stop offset="0.795" stop-color="#84240a"/></linearGradient><linearGradient id="s178" gradientUnits="userSpaceOnUse" x1="0" y1="900" x2="0" y2="1120"><stop offset="0.272" stop-color="#e04818"/><stop offset="0.409" stop-color="#dc4416"/><stop offset="0.545" stop-color="#dc4416"/><stop offset="0.635" stop-color="#e1601a"/><stop offset="0.715" stop-color="#b34212"/><stop offset="0.795" stop-color="#84240a"/></linearGradient><linearGradient id="s179" gradientUnits="userSpaceOnUse" x1="0" y1="900" x2="0" y2="1120"><stop offset="0.272" stop-color="#e04818"/><stop offset="0.408" stop-color="#dc4416"/><stop offset="0.545" stop-color="#dc4416"/><stop offset="0.635" stop-color="#e2601a"/><stop offset="0.714" stop-color="#b34212"/><stop offset="0.794" stop-color="#84240a"/></linearGradient><linearGradient id="s180" gradientUnits="userSpaceOnUse" x1="0" y1="900" x2="0" y2="1120"><stop offset="0.272" stop-color="#e04818"/><stop offset="0.408" stop-color="#dc4416"/><stop offset="0.544" stop-color="#dc4416"/><stop offset="0.635" stop-color="#e2611a"/><stop offset="0.714" stop-color="#b34212"/><stop offset="0.793" stop-color="#84240a"/></linearGradient><linearGradient id="s181" gradientUnits="userSpaceOnUse" x1="0" y1="900" x2="0" y2="1120"><stop offset="0.271" stop-color="#e04818"/><stop offset="0.407" stop-color="#dc4416"/><stop offset="0.544" stop-color="#dc4416"/><stop offset="0.635" stop-color="#e2611a"/><stop offset="0.714" stop-color="#b34312"/><stop offset="0.793" stop-color="#84240a"/></linearGradient><linearGradient id="s182" gradientUnits="userSpaceOnUse" x1="0" y1="900" x2="0" y2="1120"><stop offset="0.271" stop-color="#e04818"/><stop offset="0.407" stop-color="#dc4416"/><stop offset="0.543" stop-color="#dc4416"/><stop offset="0.635" stop-color="#e3611a"/><stop offset="0.713" stop-color="#b34312"/><stop offset="0.792" stop-color="#84240a"/></linearGradient><linearGradient id="s183" gradientUnits="userSpaceOnUse" x1="0" y1="900" x2="0" y2="1120"><stop offset="0.270" stop-color="#e04818"/><stop offset="0.407" stop-color="#dc4416"/><stop offset="0.543" stop-color="#dc4416"/><stop offset="0.634" stop-color="#e3621a"/><stop offset="0.713" stop-color="#b34312"/><stop offset="0.791" stop-color="#84240a"/></linearGradient><linearGradient id="s184" gradientUnits="userSpaceOnUse" x1="0" y1="900" x2="0" y2="1120"><stop offset="0.270" stop-color="#e04818"/><stop offset="0.406" stop-color="#dc4416"/><stop offset="0.543" stop-color="#dc4416"/><stop offset="0.634" stop-color="#e3621a"/><stop offset="0.712" stop-color="#b44312"/><stop offset="0.791" stop-color="#84240a"/></linearGradient><linearGradient id="s185" gradientUnits="userSpaceOnUse" x1="0" y1="900" x2="0" y2="1120"><stop offset="0.269" stop-color="#e04818"/><stop offset="0.406" stop-color="#dc4416"/><stop offset="0.542" stop-color="#dc4416"/><stop offset="0.634" stop-color="#e4621a"/><stop offset="0.712" stop-color="#b44312"/><stop offset="0.790" stop-color="#84240a"/></linearGradient><linearGradient id="s186" gradientUnits="userSpaceOnUse" x1="0" y1="900" x2="0" y2="1120"><stop offset="0.269" stop-color="#e04818"/><stop offset="0.405" stop-color="#dc4416"/><stop offset="0.542" stop-color="#dc4416"/><stop offset="0.634" stop-color="#e4631a"/><stop offset="0.711" stop-color="#b44312"/><stop offset="0.789" stop-color="#84240a"/></linearGradient><linearGradient id="s187" gradientUnits="userSpaceOnUse" x1="0" y1="900" x2="0" y2="1120"><stop offset="0.269" stop-color="#e04818"/><stop offset="0.405" stop-color="#dc4416"/><stop offset="0.541" stop-color="#dc4416"/><stop offset="0.634" stop-color="#e4631a"/><stop offset="0.711" stop-color="#b44412"/><stop offset="0.788" stop-color="#84240a"/></linearGradient><linearGradient id="s188" gradientUnits="userSpaceOnUse" x1="0" y1="900" x2="0" y2="1120"><stop offset="0.268" stop-color="#e04818"/><stop offset="0.405" stop-color="#dc4416"/><stop offset="0.541" stop-color="#dc4416"/><stop offset="0.633" stop-color="#e4631b"/><stop offset="0.710" stop-color="#b44412"/><stop offset="0.787" stop-color="#84240a"/></linearGradient><linearGradient id="s189" gradientUnits="userSpaceOnUse" x1="0" y1="900" x2="0" y2="1120"><stop offset="0.268" stop-color="#e04818"/><stop offset="0.404" stop-color="#dc4416"/><stop offset="0.540" stop-color="#dc4416"/><stop offset="0.633" stop-color="#e5641b"/><stop offset="0.710" stop-color="#b44412"/><stop offset="0.787" stop-color="#84240a"/></linearGradient><linearGradient id="s190" gradientUnits="userSpaceOnUse" x1="0" y1="900" x2="0" y2="1120"><stop offset="0.267" stop-color="#e04818"/><stop offset="0.404" stop-color="#dc4416"/><stop offset="0.540" stop-color="#dc4416"/><stop offset="0.633" stop-color="#e5641b"/><stop offset="0.709" stop-color="#b54412"/><stop offset="0.786" stop-color="#84240a"/></linearGradient><linearGradient id="s191" gradientUnits="userSpaceOnUse" x1="0" y1="900" x2="0" y2="1120"><stop offset="0.267" stop-color="#e04818"/><stop offset="0.403" stop-color="#dc4416"/><stop offset="0.540" stop-color="#dc4416"/><stop offset="0.633" stop-color="#e5641b"/><stop offset="0.709" stop-color="#b54412"/><stop offset="0.785" stop-color="#84240a"/></linearGradient><linearGradient id="s192" gradientUnits="userSpaceOnUse" x1="0" y1="900" x2="0" y2="1120"><stop offset="0.267" stop-color="#e04818"/><stop offset="0.403" stop-color="#dc4416"/><stop offset="0.539" stop-color="#dc4416"/><stop offset="0.633" stop-color="#e6651b"/><stop offset="0.708" stop-color="#b54413"/><stop offset="0.784" stop-color="#84240a"/></linearGradient><linearGradient id="s193" gradientUnits="userSpaceOnUse" x1="0" y1="900" x2="0" y2="1120"><stop offset="0.266" stop-color="#e04818"/><stop offset="0.402" stop-color="#dc4416"/><stop offset="0.539" stop-color="#dc4416"/><stop offset="0.632" stop-color="#e6651b"/><stop offset="0.708" stop-color="#b54513"/><stop offset="0.783" stop-color="#84240a"/></linearGradient><linearGradient id="s194" gradientUnits="userSpaceOnUse" x1="0" y1="900" x2="0" y2="1120"><stop offset="0.266" stop-color="#e04818"/><stop offset="0.402" stop-color="#dc4416"/><stop offset="0.538" stop-color="#dc4416"/><stop offset="0.632" stop-color="#e6651b"/><stop offset="0.707" stop-color="#b54513"/><stop offset="0.782" stop-color="#84240a"/></linearGradient><linearGradient id="s195" gradientUnits="userSpaceOnUse" x1="0" y1="900" x2="0" y2="1120"><stop offset="0.265" stop-color="#e04818"/><stop offset="0.402" stop-color="#dc4416"/><stop offset="0.538" stop-color="#dc4416"/><stop offset="0.632" stop-color="#e7661b"/><stop offset="0.707" stop-color="#b54513"/><stop offset="0.781" stop-color="#84240a"/></linearGradient><linearGradient id="s196" gradientUnits="userSpaceOnUse" x1="0" y1="900" x2="0" y2="1120"><stop offset="0.265" stop-color="#e04818"/><stop offset="0.401" stop-color="#dc4416"/><stop offset="0.538" stop-color="#dc4416"/><stop offset="0.632" stop-color="#e7661c"/><stop offset="0.706" stop-color="#b54513"/><stop offset="0.780" stop-color="#84240a"/></linearGradient><linearGradient id="s197" gradientUnits="userSpaceOnUse" x1="0" y1="900" x2="0" y2="1120"><stop offset="0.264" stop-color="#e04818"/><stop offset="0.401" stop-color="#dc4416"/><stop offset="0.537" stop-color="#dc4416"/><stop offset="0.631" stop-color="#e7661c"/><stop offset="0.705" stop-color="#b64513"/><stop offset="0.780" stop-color="#84240a"/></linearGradient><linearGradient id="s198" gradientUnits="userSpaceOnUse" x1="0" y1="900" x2="0" y2="1120"><stop offset="0.264" stop-color="#e04818"/><stop offset="0.400" stop-color="#dc4416"/><stop offset="0.537" stop-color="#dc4416"/><stop offset="0.631" stop-color="#e7671c"/><stop offset="0.705" stop-color="#b64513"/><stop offset="0.779" stop-color="#84240a"/></linearGradient><linearGradient id="s199" gradientUnits="userSpaceOnUse" x1="0" y1="900" x2="0" y2="1120"><stop offset="0.264" stop-color="#e04818"/><stop offset="0.400" stop-color="#dc4416"/><stop offset="0.536" stop-color="#dc4416"/><stop offset="0.631" stop-color="#e8671c"/><stop offset="0.704" stop-color="#b64513"/><stop offset="0.778" stop-color="#84240a"/></linearGradient><linearGradient id="s200" gradientUnits="userSpaceOnUse" x1="0" y1="900" x2="0" y2="1120"><stop offset="0.263" stop-color="#e04818"/><stop offset="0.399" stop-color="#dc4416"/><stop offset="0.536" stop-color="#dc4416"/><stop offset="0.630" stop-color="#e8671c"/><stop offset="0.704" stop-color="#b64613"/><stop offset="0.777" stop-color="#84240a"/></linearGradient><linearGradient id="s201" gradientUnits="userSpaceOnUse" x1="0" y1="900" x2="0" y2="1120"><stop offset="0.263" stop-color="#e04818"/><stop offset="0.399" stop-color="#dc4416"/><stop offset="0.535" stop-color="#dc4416"/><stop offset="0.630" stop-color="#e8671c"/><stop offset="0.703" stop-color="#b64613"/><stop offset="0.776" stop-color="#84240a"/></linearGradient><linearGradient id="s202" gradientUnits="userSpaceOnUse" x1="0" y1="900" x2="0" y2="1120"><stop offset="0.262" stop-color="#e04818"/><stop offset="0.398" stop-color="#dc4416"/><stop offset="0.535" stop-color="#dc4416"/><stop offset="0.630" stop-color="#e8681c"/><stop offset="0.702" stop-color="#b64613"/><stop offset="0.775" stop-color="#84240a"/></linearGradient><linearGradient id="s203" gradientUnits="userSpaceOnUse" x1="0" y1="900" x2="0" y2="1120"><stop offset="0.262" stop-color="#e04818"/><stop offset="0.398" stop-color="#dc4416"/><stop offset="0.534" stop-color="#dc4416"/><stop offset="0.630" stop-color="#e9681c"/><stop offset="0.702" stop-color="#b64613"/><stop offset="0.774" stop-color="#84240a"/></linearGradient><linearGradient id="s204" gradientUnits="userSpaceOnUse" x1="0" y1="900" x2="0" y2="1120"><stop offset="0.261" stop-color="#e04818"/><stop offset="0.398" stop-color="#dc4416"/><stop offset="0.534" stop-color="#dc4416"/><stop offset="0.629" stop-color="#e9681c"/><stop offset="0.701" stop-color="#b64613"/><stop offset="0.773" stop-color="#84240a"/></linearGradient><linearGradient id="s205" gradientUnits="userSpaceOnUse" x1="0" y1="900" x2="0" y2="1120"><stop offset="0.261" stop-color="#e04818"/><stop offset="0.397" stop-color="#dc4416"/><stop offset="0.533" stop-color="#dc4416"/><stop offset="0.629" stop-color="#e9681d"/><stop offset="0.700" stop-color="#b74613"/><stop offset="0.772" stop-color="#84240a"/></linearGradient><linearGradient id="s206" gradientUnits="userSpaceOnUse" x1="0" y1="900" x2="0" y2="1120"><stop offset="0.260" stop-color="#e04818"/><stop offset="0.397" stop-color="#dc4416"/><stop offset="0.533" stop-color="#dc4416"/><stop offset="0.629" stop-color="#e9691d"/><stop offset="0.700" stop-color="#b74613"/><stop offset="0.771" stop-color="#84240a"/></linearGradient><linearGradient id="s207" gradientUnits="userSpaceOnUse" x1="0" y1="900" x2="0" y2="1120"><stop offset="0.260" stop-color="#e04818"/><stop offset="0.396" stop-color="#dc4416"/><stop offset="0.532" stop-color="#dc4416"/><stop offset="0.628" stop-color="#ea691d"/><stop offset="0.699" stop-color="#b74613"/><stop offset="0.770" stop-color="#84240a"/></linearGradient><linearGradient id="s208" gradientUnits="userSpaceOnUse" x1="0" y1="900" x2="0" y2="1120"><stop offset="0.259" stop-color="#e04818"/><stop offset="0.395" stop-color="#dc4416"/><stop offset="0.532" stop-color="#dc4416"/><stop offset="0.628" stop-color="#ea691d"/><stop offset="0.698" stop-color="#b74713"/><stop offset="0.769" stop-color="#84240a"/></linearGradient><linearGradient id="s209" gradientUnits="userSpaceOnUse" x1="0" y1="900" x2="0" y2="1120"><stop offset="0.259" stop-color="#e04818"/><stop offset="0.395" stop-color="#dc4416"/><stop offset="0.531" stop-color="#dc4416"/><stop offset="0.628" stop-color="#ea691d"/><stop offset="0.698" stop-color="#b74713"/><stop offset="0.768" stop-color="#84240a"/></linearGradient><linearGradient id="s210" gradientUnits="userSpaceOnUse" x1="0" y1="900" x2="0" y2="1120"><stop offset="0.258" stop-color="#e04818"/><stop offset="0.394" stop-color="#dc4416"/><stop offset="0.531" stop-color="#dc4416"/><stop offset="0.627" stop-color="#ea6a1d"/><stop offset="0.697" stop-color="#b74714"/><stop offset="0.767" stop-color="#84240a"/></linearGradient><linearGradient id="s211" gradientUnits="userSpaceOnUse" x1="0" y1="900" x2="0" y2="1120"><stop offset="0.257" stop-color="#e04818"/><stop offset="0.394" stop-color="#dc4416"/><stop offset="0.530" stop-color="#dc4416"/><stop offset="0.627" stop-color="#ea6a1d"/><stop offset="0.696" stop-color="#b74714"/><stop offset="0.766" stop-color="#84240a"/></linearGradient><linearGradient id="s212" gradientUnits="userSpaceOnUse" x1="0" y1="900" x2="0" y2="1120"><stop offset="0.257" stop-color="#e04818"/><stop offset="0.393" stop-color="#dc4416"/><stop offset="0.530" stop-color="#dc4416"/><stop offset="0.627" stop-color="#eb6a1d"/><stop offset="0.696" stop-color="#b74714"/><stop offset="0.765" stop-color="#84240a"/></linearGradient><linearGradient id="s213" gradientUnits="userSpaceOnUse" x1="0" y1="900" x2="0" y2="1120"><stop offset="0.256" stop-color="#e04818"/><stop offset="0.393" stop-color="#dc4416"/><stop offset="0.529" stop-color="#dc4416"/><stop offset="0.626" stop-color="#eb6a1d"/><stop offset="0.695" stop-color="#b74714"/><stop offset="0.764" stop-color="#84240a"/></linearGradient><linearGradient id="s214" gradientUnits="userSpaceOnUse" x1="0" y1="900" x2="0" y2="1120"><stop offset="0.256" stop-color="#e04818"/><stop offset="0.392" stop-color="#dc4416"/><stop offset="0.528" stop-color="#dc4416"/><stop offset="0.626" stop-color="#eb6b1d"/><stop offset="0.694" stop-color="#b84714"/><stop offset="0.762" stop-color="#84240a"/></linearGradient><linearGradient id="s215" gradientUnits="userSpaceOnUse" x1="0" y1="900" x2="0" y2="1120"><stop offset="0.255" stop-color="#e04818"/><stop offset="0.391" stop-color="#dc4416"/><stop offset="0.528" stop-color="#dc4416"/><stop offset="0.625" stop-color="#eb6b1d"/><stop offset="0.693" stop-color="#b84714"/><stop offset="0.761" stop-color="#84240a"/></linearGradient><linearGradient id="s216" gradientUnits="userSpaceOnUse" x1="0" y1="900" x2="0" y2="1120"><stop offset="0.254" stop-color="#e04818"/><stop offset="0.391" stop-color="#dc4416"/><stop offset="0.527" stop-color="#dc4416"/><stop offset="0.625" stop-color="#eb6b1e"/><stop offset="0.693" stop-color="#b84714"/><stop offset="0.760" stop-color="#84240a"/></linearGradient><linearGradient id="s217" gradientUnits="userSpaceOnUse" x1="0" y1="900" x2="0" y2="1120"><stop offset="0.254" stop-color="#e04818"/><stop offset="0.390" stop-color="#dc4416"/><stop offset="0.526" stop-color="#dc4416"/><stop offset="0.625" stop-color="#eb6b1e"/><stop offset="0.692" stop-color="#b84814"/><stop offset="0.759" stop-color="#84240a"/></linearGradient><linearGradient id="s218" gradientUnits="userSpaceOnUse" x1="0" y1="900" x2="0" y2="1120"><stop offset="0.253" stop-color="#e04818"/><stop offset="0.389" stop-color="#dc4416"/><stop offset="0.526" stop-color="#dc4416"/><stop offset="0.624" stop-color="#ec6b1e"/><stop offset="0.691" stop-color="#b84814"/><stop offset="0.758" stop-color="#84240a"/></linearGradient><linearGradient id="s219" gradientUnits="userSpaceOnUse" x1="0" y1="900" x2="0" y2="1120"><stop offset="0.252" stop-color="#e04818"/><stop offset="0.389" stop-color="#dc4416"/><stop offset="0.525" stop-color="#dc4416"/><stop offset="0.624" stop-color="#ec6c1e"/><stop offset="0.691" stop-color="#b84814"/><stop offset="0.757" stop-color="#84240a"/></linearGradient><linearGradient id="s220" gradientUnits="userSpaceOnUse" x1="0" y1="900" x2="0" y2="1120"><stop offset="0.252" stop-color="#e04818"/><stop offset="0.388" stop-color="#dc4416"/><stop offset="0.524" stop-color="#dc4416"/><stop offset="0.624" stop-color="#ec6c1e"/><stop offset="0.690" stop-color="#b84814"/><stop offset="0.756" stop-color="#84240a"/></linearGradient><linearGradient id="s221" gradientUnits="userSpaceOnUse" x1="0" y1="900" x2="0" y2="1120"><stop offset="0.251" stop-color="#e04818"/><stop offset="0.387" stop-color="#dc4416"/><stop offset="0.524" stop-color="#dc4416"/><stop offset="0.623" stop-color="#ec6c1e"/><stop offset="0.689" stop-color="#b84814"/><stop offset="0.756" stop-color="#84240a"/></linearGradient><linearGradient id="s222" gradientUnits="userSpaceOnUse" x1="0" y1="900" x2="0" y2="1120"><stop offset="0.250" stop-color="#e04818"/><stop offset="0.386" stop-color="#dc4416"/><stop offset="0.523" stop-color="#dc4416"/><stop offset="0.623" stop-color="#ec6c1e"/><stop offset="0.689" stop-color="#b84814"/><stop offset="0.755" stop-color="#84240a"/></linearGradient><linearGradient id="s223" gradientUnits="userSpaceOnUse" x1="0" y1="900" x2="0" y2="1120"><stop offset="0.249" stop-color="#e04818"/><stop offset="0.386" stop-color="#dc4416"/><stop offset="0.522" stop-color="#dc4416"/><stop offset="0.622" stop-color="#ec6c1e"/><stop offset="0.688" stop-color="#b84814"/><stop offset="0.754" stop-color="#84240a"/></linearGradient><linearGradient id="s224" gradientUnits="userSpaceOnUse" x1="0" y1="900" x2="0" y2="1120"><stop offset="0.248" stop-color="#e04818"/><stop offset="0.385" stop-color="#dc4416"/><stop offset="0.521" stop-color="#dc4416"/><stop offset="0.622" stop-color="#ec6c1e"/><stop offset="0.687" stop-color="#b84814"/><stop offset="0.753" stop-color="#84240a"/></linearGradient><linearGradient id="s225" gradientUnits="userSpaceOnUse" x1="0" y1="900" x2="0" y2="1120"><stop offset="0.247" stop-color="#e04818"/><stop offset="0.384" stop-color="#dc4416"/><stop offset="0.520" stop-color="#dc4416"/><stop offset="0.621" stop-color="#ec6c1e"/><stop offset="0.686" stop-color="#b84814"/><stop offset="0.752" stop-color="#84240a"/></linearGradient><linearGradient id="s226" gradientUnits="userSpaceOnUse" x1="0" y1="900" x2="0" y2="1120"><stop offset="0.247" stop-color="#e04818"/><stop offset="0.383" stop-color="#dc4416"/><stop offset="0.519" stop-color="#dc4416"/><stop offset="0.620" stop-color="#ec6d1e"/><stop offset="0.686" stop-color="#b84814"/><stop offset="0.751" stop-color="#84240a"/></linearGradient><linearGradient id="s227" gradientUnits="userSpaceOnUse" x1="0" y1="900" x2="0" y2="1120"><stop offset="0.246" stop-color="#e04818"/><stop offset="0.382" stop-color="#dc4416"/><stop offset="0.518" stop-color="#dc4416"/><stop offset="0.620" stop-color="#ec6d1e"/><stop offset="0.685" stop-color="#b84814"/><stop offset="0.750" stop-color="#84240a"/></linearGradient><linearGradient id="s228" gradientUnits="userSpaceOnUse" x1="0" y1="900" x2="0" y2="1120"><stop offset="0.245" stop-color="#e04818"/><stop offset="0.381" stop-color="#dc4416"/><stop offset="0.517" stop-color="#dc4416"/><stop offset="0.619" stop-color="#ec6d1e"/><stop offset="0.684" stop-color="#b84814"/><stop offset="0.749" stop-color="#84240a"/></linearGradient><linearGradient id="s229" gradientUnits="userSpaceOnUse" x1="0" y1="900" x2="0" y2="1120"><stop offset="0.243" stop-color="#e04818"/><stop offset="0.380" stop-color="#dc4416"/><stop offset="0.516" stop-color="#dc4416"/><stop offset="0.618" stop-color="#ed6d1e"/><stop offset="0.683" stop-color="#b84914"/><stop offset="0.748" stop-color="#84240a"/></linearGradient><linearGradient id="s230" gradientUnits="userSpaceOnUse" x1="0" y1="900" x2="0" y2="1120"><stop offset="0.242" stop-color="#e04818"/><stop offset="0.379" stop-color="#dc4416"/><stop offset="0.515" stop-color="#dc4416"/><stop offset="0.617" stop-color="#ed6d1f"/><stop offset="0.682" stop-color="#b84914"/><stop offset="0.746" stop-color="#84240a"/></linearGradient><linearGradient id="s231" gradientUnits="userSpaceOnUse" x1="0" y1="900" x2="0" y2="1120"><stop offset="0.241" stop-color="#e04818"/><stop offset="0.378" stop-color="#dc4416"/><stop offset="0.514" stop-color="#dc4416"/><stop offset="0.616" stop-color="#ed6d1f"/><stop offset="0.681" stop-color="#b84914"/><stop offset="0.745" stop-color="#84240a"/></linearGradient><linearGradient id="s232" gradientUnits="userSpaceOnUse" x1="0" y1="900" x2="0" y2="1120"><stop offset="0.240" stop-color="#e04818"/><stop offset="0.376" stop-color="#dc4416"/><stop offset="0.513" stop-color="#dc4416"/><stop offset="0.615" stop-color="#ed6d1f"/><stop offset="0.680" stop-color="#b84914"/><stop offset="0.744" stop-color="#84240a"/></linearGradient><linearGradient id="s233" gradientUnits="userSpaceOnUse" x1="0" y1="900" x2="0" y2="1120"><stop offset="0.239" stop-color="#e04818"/><stop offset="0.375" stop-color="#dc4416"/><stop offset="0.512" stop-color="#dc4416"/><stop offset="0.614" stop-color="#ed6e1f"/><stop offset="0.679" stop-color="#b84914"/><stop offset="0.743" stop-color="#84240a"/></linearGradient><linearGradient id="s234" gradientUnits="userSpaceOnUse" x1="0" y1="900" x2="0" y2="1120"><stop offset="0.238" stop-color="#e04818"/><stop offset="0.374" stop-color="#dc4416"/><stop offset="0.510" stop-color="#dc4416"/><stop offset="0.613" stop-color="#ed6e1f"/><stop offset="0.677" stop-color="#b84914"/><stop offset="0.742" stop-color="#84240a"/></linearGradient><linearGradient id="s235" gradientUnits="userSpaceOnUse" x1="0" y1="900" x2="0" y2="1120"><stop offset="0.236" stop-color="#e04818"/><stop offset="0.373" stop-color="#dc4416"/><stop offset="0.509" stop-color="#dc4416"/><stop offset="0.611" stop-color="#ed6e1f"/><stop offset="0.676" stop-color="#b84914"/><stop offset="0.741" stop-color="#84240a"/></linearGradient><linearGradient id="s236" gradientUnits="userSpaceOnUse" x1="0" y1="900" x2="0" y2="1120"><stop offset="0.235" stop-color="#e04818"/><stop offset="0.372" stop-color="#dc4416"/><stop offset="0.508" stop-color="#dc4416"/><stop offset="0.610" stop-color="#ed6e1f"/><stop offset="0.675" stop-color="#b94914"/><stop offset="0.740" stop-color="#84240a"/></linearGradient><linearGradient id="s237" gradientUnits="userSpaceOnUse" x1="0" y1="900" x2="0" y2="1120"><stop offset="0.234" stop-color="#e04818"/><stop offset="0.370" stop-color="#dc4416"/><stop offset="0.507" stop-color="#dc4416"/><stop offset="0.609" stop-color="#ed6e1f"/><stop offset="0.674" stop-color="#b94915"/><stop offset="0.739" stop-color="#84240a"/></linearGradient><linearGradient id="s238" gradientUnits="userSpaceOnUse" x1="0" y1="900" x2="0" y2="1120"><stop offset="0.232" stop-color="#e04818"/><stop offset="0.369" stop-color="#dc4416"/><stop offset="0.505" stop-color="#dc4416"/><stop offset="0.607" stop-color="#ed6e1f"/><stop offset="0.673" stop-color="#b94915"/><stop offset="0.738" stop-color="#84240a"/></linearGradient><linearGradient id="s239" gradientUnits="userSpaceOnUse" x1="0" y1="900" x2="0" y2="1120"><stop offset="0.231" stop-color="#e04818"/><stop offset="0.367" stop-color="#dc4416"/><stop offset="0.504" stop-color="#dc4416"/><stop offset="0.606" stop-color="#ed6e1f"/><stop offset="0.671" stop-color="#b94915"/><stop offset="0.736" stop-color="#84240a"/></linearGradient><linearGradient id="s240" gradientUnits="userSpaceOnUse" x1="0" y1="900" x2="0" y2="1120"><stop offset="0.230" stop-color="#e04818"/><stop offset="0.366" stop-color="#dc4416"/><stop offset="0.502" stop-color="#dc4416"/><stop offset="0.605" stop-color="#ed6f1f"/><stop offset="0.670" stop-color="#b94915"/><stop offset="0.735" stop-color="#84240a"/></linearGradient><linearGradient id="s241" gradientUnits="userSpaceOnUse" x1="0" y1="900" x2="0" y2="1120"><stop offset="0.228" stop-color="#e04818"/><stop offset="0.365" stop-color="#dc4416"/><stop offset="0.501" stop-color="#dc4416"/><stop offset="0.603" stop-color="#ed6f1f"/><stop offset="0.668" stop-color="#b94915"/><stop offset="0.734" stop-color="#84240a"/></linearGradient><linearGradient id="s242" gradientUnits="userSpaceOnUse" x1="0" y1="900" x2="0" y2="1120"><stop offset="0.227" stop-color="#e04818"/><stop offset="0.363" stop-color="#dc4416"/><stop offset="0.500" stop-color="#dc4416"/><stop offset="0.602" stop-color="#ed6f1f"/><stop offset="0.667" stop-color="#b94915"/><stop offset="0.733" stop-color="#84240a"/></linearGradient><linearGradient id="s243" gradientUnits="userSpaceOnUse" x1="0" y1="900" x2="0" y2="1120"><stop offset="0.225" stop-color="#e04818"/><stop offset="0.362" stop-color="#dc4416"/><stop offset="0.498" stop-color="#dc4416"/><stop offset="0.600" stop-color="#ed6f1f"/><stop offset="0.666" stop-color="#b94915"/><stop offset="0.731" stop-color="#84240a"/></linearGradient><linearGradient id="s244" gradientUnits="userSpaceOnUse" x1="0" y1="900" x2="0" y2="1120"><stop offset="0.224" stop-color="#e04818"/><stop offset="0.360" stop-color="#dc4416"/><stop offset="0.496" stop-color="#dc4416"/><stop offset="0.598" stop-color="#ee6f1f"/><stop offset="0.664" stop-color="#b94a15"/><stop offset="0.730" stop-color="#84240a"/></linearGradient><linearGradient id="s245" gradientUnits="userSpaceOnUse" x1="0" y1="900" x2="0" y2="1120"><stop offset="0.222" stop-color="#e04818"/><stop offset="0.359" stop-color="#dc4416"/><stop offset="0.495" stop-color="#dc4416"/><stop offset="0.597" stop-color="#ee6f20"/><stop offset="0.663" stop-color="#b94a15"/><stop offset="0.729" stop-color="#84240a"/></linearGradient><linearGradient id="s246" gradientUnits="userSpaceOnUse" x1="0" y1="900" x2="0" y2="1120"><stop offset="0.221" stop-color="#e04818"/><stop offset="0.357" stop-color="#dc4416"/><stop offset="0.493" stop-color="#dc4416"/><stop offset="0.595" stop-color="#ee6f20"/><stop offset="0.661" stop-color="#b94a15"/><stop offset="0.727" stop-color="#84240a"/></linearGradient><linearGradient id="s247" gradientUnits="userSpaceOnUse" x1="0" y1="900" x2="0" y2="1120"><stop offset="0.219" stop-color="#e04818"/><stop offset="0.355" stop-color="#dc4416"/><stop offset="0.492" stop-color="#dc4416"/><stop offset="0.593" stop-color="#ee6f20"/><stop offset="0.660" stop-color="#b94a15"/><stop offset="0.726" stop-color="#84240a"/></linearGradient><linearGradient id="s248" gradientUnits="userSpaceOnUse" x1="0" y1="900" x2="0" y2="1120"><stop offset="0.217" stop-color="#e04818"/><stop offset="0.354" stop-color="#dc4416"/><stop offset="0.490" stop-color="#dc4416"/><stop offset="0.592" stop-color="#ee6f20"/><stop offset="0.658" stop-color="#b94a15"/><stop offset="0.725" stop-color="#84240a"/></linearGradient><linearGradient id="s249" gradientUnits="userSpaceOnUse" x1="0" y1="900" x2="0" y2="1120"><stop offset="0.216" stop-color="#e04818"/><stop offset="0.352" stop-color="#dc4416"/><stop offset="0.489" stop-color="#dc4416"/><stop offset="0.590" stop-color="#ee6f20"/><stop offset="0.657" stop-color="#b94a15"/><stop offset="0.723" stop-color="#84240a"/></linearGradient><linearGradient id="s250" gradientUnits="userSpaceOnUse" x1="0" y1="900" x2="0" y2="1120"><stop offset="0.214" stop-color="#e04818"/><stop offset="0.351" stop-color="#dc4416"/><stop offset="0.487" stop-color="#dc4416"/><stop offset="0.588" stop-color="#ee7020"/><stop offset="0.655" stop-color="#b94a15"/><stop offset="0.722" stop-color="#84240a"/></linearGradient><linearGradient id="s251" gradientUnits="userSpaceOnUse" x1="0" y1="900" x2="0" y2="1120"><stop offset="0.213" stop-color="#e04818"/><stop offset="0.349" stop-color="#dc4416"/><stop offset="0.485" stop-color="#dc4416"/><stop offset="0.586" stop-color="#ee7020"/><stop offset="0.653" stop-color="#b94a15"/><stop offset="0.720" stop-color="#84240a"/></linearGradient><linearGradient id="s252" gradientUnits="userSpaceOnUse" x1="0" y1="900" x2="0" y2="1120"><stop offset="0.211" stop-color="#e04818"/><stop offset="0.347" stop-color="#dc4416"/><stop offset="0.484" stop-color="#dc4416"/><stop offset="0.584" stop-color="#ee7020"/><stop offset="0.652" stop-color="#b94a15"/><stop offset="0.719" stop-color="#84240a"/></linearGradient><linearGradient id="s253" gradientUnits="userSpaceOnUse" x1="0" y1="900" x2="0" y2="1120"><stop offset="0.209" stop-color="#e04818"/><stop offset="0.346" stop-color="#dc4416"/><stop offset="0.482" stop-color="#dc4416"/><stop offset="0.583" stop-color="#ee7020"/><stop offset="0.650" stop-color="#b94a15"/><stop offset="0.717" stop-color="#84240a"/></linearGradient><linearGradient id="s254" gradientUnits="userSpaceOnUse" x1="0" y1="900" x2="0" y2="1120"><stop offset="0.207" stop-color="#e04818"/><stop offset="0.344" stop-color="#dc4416"/><stop offset="0.480" stop-color="#dc4416"/><stop offset="0.581" stop-color="#ee7020"/><stop offset="0.648" stop-color="#b94a15"/><stop offset="0.716" stop-color="#84240a"/></linearGradient><linearGradient id="s255" gradientUnits="userSpaceOnUse" x1="0" y1="900" x2="0" y2="1120"><stop offset="0.206" stop-color="#e04818"/><stop offset="0.342" stop-color="#dc4416"/><stop offset="0.478" stop-color="#dc4416"/><stop offset="0.579" stop-color="#ee7020"/><stop offset="0.647" stop-color="#b94a15"/><stop offset="0.714" stop-color="#84240a"/></linearGradient><linearGradient id="s256" gradientUnits="userSpaceOnUse" x1="0" y1="900" x2="0" y2="1120"><stop offset="0.204" stop-color="#e04818"/><stop offset="0.340" stop-color="#dc4416"/><stop offset="0.477" stop-color="#dc4416"/><stop offset="0.577" stop-color="#ee7020"/><stop offset="0.645" stop-color="#b94a15"/><stop offset="0.713" stop-color="#84240a"/></linearGradient><linearGradient id="s257" gradientUnits="userSpaceOnUse" x1="0" y1="900" x2="0" y2="1120"><stop offset="0.202" stop-color="#e04818"/><stop offset="0.339" stop-color="#dc4416"/><stop offset="0.475" stop-color="#dc4416"/><stop offset="0.575" stop-color="#ee7020"/><stop offset="0.643" stop-color="#b94a15"/><stop offset="0.711" stop-color="#84240a"/></linearGradient><linearGradient id="s258" gradientUnits="userSpaceOnUse" x1="0" y1="900" x2="0" y2="1120"><stop offset="0.200" stop-color="#e04818"/><stop offset="0.337" stop-color="#dc4416"/><stop offset="0.473" stop-color="#dc4416"/><stop offset="0.573" stop-color="#ee7020"/><stop offset="0.641" stop-color="#b94a15"/><stop offset="0.709" stop-color="#84240a"/></linearGradient><linearGradient id="s259" gradientUnits="userSpaceOnUse" x1="0" y1="900" x2="0" y2="1120"><stop offset="0.199" stop-color="#e04818"/><stop offset="0.335" stop-color="#dc4416"/><stop offset="0.471" stop-color="#dc4416"/><stop offset="0.571" stop-color="#ee7020"/><stop offset="0.640" stop-color="#b94a15"/><stop offset="0.708" stop-color="#84240a"/></linearGradient><linearGradient id="s260" gradientUnits="userSpaceOnUse" x1="0" y1="900" x2="0" y2="1120"><stop offset="0.197" stop-color="#e04818"/><stop offset="0.333" stop-color="#dc4416"/><stop offset="0.470" stop-color="#dc4416"/><stop offset="0.570" stop-color="#ee7020"/><stop offset="0.638" stop-color="#b94a15"/><stop offset="0.706" stop-color="#84240a"/></linearGradient><linearGradient id="s261" gradientUnits="userSpaceOnUse" x1="0" y1="900" x2="0" y2="1120"><stop offset="0.195" stop-color="#e04818"/><stop offset="0.331" stop-color="#dc4416"/><stop offset="0.468" stop-color="#dc4416"/><stop offset="0.568" stop-color="#ee7020"/><stop offset="0.636" stop-color="#b94a15"/><stop offset="0.704" stop-color="#84240a"/></linearGradient><linearGradient id="s262" gradientUnits="userSpaceOnUse" x1="0" y1="900" x2="0" y2="1120"><stop offset="0.193" stop-color="#e04818"/><stop offset="0.329" stop-color="#dc4416"/><stop offset="0.466" stop-color="#dc4416"/><stop offset="0.566" stop-color="#ee7020"/><stop offset="0.634" stop-color="#b94a15"/><stop offset="0.702" stop-color="#84240a"/></linearGradient><linearGradient id="s263" gradientUnits="userSpaceOnUse" x1="0" y1="900" x2="0" y2="1120"><stop offset="0.191" stop-color="#e04818"/><stop offset="0.328" stop-color="#dc4416"/><stop offset="0.464" stop-color="#dc4416"/><stop offset="0.564" stop-color="#ee7020"/><stop offset="0.632" stop-color="#b94a15"/><stop offset="0.700" stop-color="#84240a"/></linearGradient><linearGradient id="s264" gradientUnits="userSpaceOnUse" x1="0" y1="900" x2="0" y2="1120"><stop offset="0.189" stop-color="#e04818"/><stop offset="0.325" stop-color="#dc4416"/><stop offset="0.462" stop-color="#dc4416"/><stop offset="0.562" stop-color="#ee7020"/><stop offset="0.630" stop-color="#b94a15"/><stop offset="0.699" stop-color="#84240a"/></linearGradient><linearGradient id="s265" gradientUnits="userSpaceOnUse" x1="0" y1="900" x2="0" y2="1120"><stop offset="0.187" stop-color="#e04818"/><stop offset="0.323" stop-color="#dc4416"/><stop offset="0.460" stop-color="#dc4416"/><stop offset="0.560" stop-color="#ee7020"/><stop offset="0.628" stop-color="#b94a15"/><stop offset="0.697" stop-color="#84240a"/></linearGradient><linearGradient id="s266" gradientUnits="userSpaceOnUse" x1="0" y1="900" x2="0" y2="1120"><stop offset="0.185" stop-color="#e04818"/><stop offset="0.321" stop-color="#dc4416"/><stop offset="0.457" stop-color="#dc4416"/><stop offset="0.557" stop-color="#ee7020"/><stop offset="0.626" stop-color="#b94a15"/><stop offset="0.694" stop-color="#84240a"/></linearGradient><linearGradient id="s267" gradientUnits="userSpaceOnUse" x1="0" y1="900" x2="0" y2="1120"><stop offset="0.182" stop-color="#e04818"/><stop offset="0.319" stop-color="#dc4416"/><stop offset="0.455" stop-color="#dc4416"/><stop offset="0.555" stop-color="#ee7020"/><stop offset="0.624" stop-color="#b94a15"/><stop offset="0.692" stop-color="#84240a"/></linearGradient><linearGradient id="s268" gradientUnits="userSpaceOnUse" x1="0" y1="900" x2="0" y2="1120"><stop offset="0.180" stop-color="#e04818"/><stop offset="0.317" stop-color="#dc4416"/><stop offset="0.453" stop-color="#dc4416"/><stop offset="0.553" stop-color="#ee7020"/><stop offset="0.622" stop-color="#b94a15"/><stop offset="0.690" stop-color="#84240a"/></linearGradient><linearGradient id="s269" gradientUnits="userSpaceOnUse" x1="0" y1="900" x2="0" y2="1120"><stop offset="0.178" stop-color="#e04818"/><stop offset="0.314" stop-color="#dc4416"/><stop offset="0.451" stop-color="#dc4416"/><stop offset="0.550" stop-color="#ee7020"/><stop offset="0.619" stop-color="#b94a15"/><stop offset="0.688" stop-color="#84240a"/></linearGradient><linearGradient id="s270" gradientUnits="userSpaceOnUse" x1="0" y1="900" x2="0" y2="1120"><stop offset="0.175" stop-color="#e04818"/><stop offset="0.312" stop-color="#dc4416"/><stop offset="0.448" stop-color="#dc4416"/><stop offset="0.548" stop-color="#ee7020"/><stop offset="0.617" stop-color="#b94a15"/><stop offset="0.686" stop-color="#84240a"/></linearGradient><linearGradient id="s271" gradientUnits="userSpaceOnUse" x1="0" y1="900" x2="0" y2="1120"><stop offset="0.173" stop-color="#e04818"/><stop offset="0.309" stop-color="#dc4416"/><stop offset="0.446" stop-color="#dc4416"/><stop offset="0.545" stop-color="#ee7020"/><stop offset="0.614" stop-color="#b94a15"/><stop offset="0.683" stop-color="#84240a"/></linearGradient><linearGradient id="s272" gradientUnits="userSpaceOnUse" x1="0" y1="900" x2="0" y2="1120"><stop offset="0.170" stop-color="#e04818"/><stop offset="0.307" stop-color="#dc4416"/><stop offset="0.443" stop-color="#dc4416"/><stop offset="0.543" stop-color="#ee7020"/><stop offset="0.612" stop-color="#b94a15"/><stop offset="0.681" stop-color="#84240a"/></linearGradient><linearGradient id="s273" gradientUnits="userSpaceOnUse" x1="0" y1="900" x2="0" y2="1120"><stop offset="0.168" stop-color="#e04818"/><stop offset="0.304" stop-color="#dc4416"/><stop offset="0.441" stop-color="#dc4416"/><stop offset="0.540" stop-color="#ee7020"/><stop offset="0.609" stop-color="#b94a15"/><stop offset="0.678" stop-color="#84240a"/></linearGradient><linearGradient id="s274" gradientUnits="userSpaceOnUse" x1="0" y1="900" x2="0" y2="1120"><stop offset="0.165" stop-color="#e04818"/><stop offset="0.302" stop-color="#dc4416"/><stop offset="0.438" stop-color="#dc4416"/><stop offset="0.538" stop-color="#ee7020"/><stop offset="0.607" stop-color="#b94a15"/><stop offset="0.676" stop-color="#84240a"/></linearGradient><linearGradient id="s275" gradientUnits="userSpaceOnUse" x1="0" y1="900" x2="0" y2="1120"><stop offset="0.163" stop-color="#e04818"/><stop offset="0.299" stop-color="#dc4416"/><stop offset="0.435" stop-color="#dc4416"/><stop offset="0.535" stop-color="#ee7020"/><stop offset="0.604" stop-color="#b94a15"/><stop offset="0.673" stop-color="#84240a"/></linearGradient><linearGradient id="s276" gradientUnits="userSpaceOnUse" x1="0" y1="900" x2="0" y2="1120"><stop offset="0.160" stop-color="#e04818"/><stop offset="0.296" stop-color="#dc4416"/><stop offset="0.433" stop-color="#dc4416"/><stop offset="0.532" stop-color="#ee7020"/><stop offset="0.601" stop-color="#b94a15"/><stop offset="0.671" stop-color="#84240a"/></linearGradient><linearGradient id="s277" gradientUnits="userSpaceOnUse" x1="0" y1="900" x2="0" y2="1120"><stop offset="0.157" stop-color="#e04818"/><stop offset="0.294" stop-color="#dc4416"/><stop offset="0.430" stop-color="#dc4416"/><stop offset="0.529" stop-color="#ee7020"/><stop offset="0.599" stop-color="#b94a15"/><stop offset="0.668" stop-color="#84240a"/></linearGradient><linearGradient id="s278" gradientUnits="userSpaceOnUse" x1="0" y1="900" x2="0" y2="1120"><stop offset="0.155" stop-color="#e04818"/><stop offset="0.291" stop-color="#dc4416"/><stop offset="0.427" stop-color="#dc4416"/><stop offset="0.527" stop-color="#ee7020"/><stop offset="0.596" stop-color="#b94a15"/><stop offset="0.665" stop-color="#84240a"/></linearGradient><linearGradient id="s279" gradientUnits="userSpaceOnUse" x1="0" y1="900" x2="0" y2="1120"><stop offset="0.152" stop-color="#e04818"/><stop offset="0.288" stop-color="#dc4416"/><stop offset="0.425" stop-color="#dc4416"/><stop offset="0.524" stop-color="#ee7020"/><stop offset="0.593" stop-color="#b94a15"/><stop offset="0.662" stop-color="#84240a"/></linearGradient><linearGradient id="s280" gradientUnits="userSpaceOnUse" x1="0" y1="900" x2="0" y2="1120"><stop offset="0.150" stop-color="#e04818"/><stop offset="0.286" stop-color="#dc4416"/><stop offset="0.422" stop-color="#dc4416"/><stop offset="0.521" stop-color="#ee7020"/><stop offset="0.590" stop-color="#b94a15"/><stop offset="0.659" stop-color="#84240a"/></linearGradient><linearGradient id="s281" gradientUnits="userSpaceOnUse" x1="0" y1="900" x2="0" y2="1120"><stop offset="0.147" stop-color="#e04818"/><stop offset="0.283" stop-color="#dc4416"/><stop offset="0.420" stop-color="#dc4416"/><stop offset="0.518" stop-color="#ee7020"/><stop offset="0.587" stop-color="#b94a15"/><stop offset="0.656" stop-color="#84240a"/></linearGradient><linearGradient id="s282" gradientUnits="userSpaceOnUse" x1="0" y1="900" x2="0" y2="1120"><stop offset="0.144" stop-color="#e04818"/><stop offset="0.281" stop-color="#dc4416"/><stop offset="0.417" stop-color="#dc4416"/><stop offset="0.515" stop-color="#ee7020"/><stop offset="0.584" stop-color="#b94a15"/><stop offset="0.653" stop-color="#84240a"/></linearGradient><linearGradient id="s283" gradientUnits="userSpaceOnUse" x1="0" y1="900" x2="0" y2="1120"><stop offset="0.142" stop-color="#e04818"/><stop offset="0.278" stop-color="#dc4416"/><stop offset="0.414" stop-color="#dc4416"/><stop offset="0.512" stop-color="#ee7020"/><stop offset="0.581" stop-color="#b94a15"/><stop offset="0.650" stop-color="#84240a"/></linearGradient><linearGradient id="s284" gradientUnits="userSpaceOnUse" x1="0" y1="900" x2="0" y2="1120"><stop offset="0.139" stop-color="#e04818"/><stop offset="0.276" stop-color="#dc4416"/><stop offset="0.412" stop-color="#dc4416"/><stop offset="0.509" stop-color="#ee7020"/><stop offset="0.578" stop-color="#b94a15"/><stop offset="0.647" stop-color="#84240a"/></linearGradient><linearGradient id="s285" gradientUnits="userSpaceOnUse" x1="0" y1="900" x2="0" y2="1120"><stop offset="0.137" stop-color="#e04818"/><stop offset="0.273" stop-color="#dc4416"/><stop offset="0.409" stop-color="#dc4416"/><stop offset="0.506" stop-color="#ee7020"/><stop offset="0.575" stop-color="#b94a15"/><stop offset="0.643" stop-color="#84240a"/></linearGradient><linearGradient id="s286" gradientUnits="userSpaceOnUse" x1="0" y1="900" x2="0" y2="1120"><stop offset="0.134" stop-color="#e04818"/><stop offset="0.271" stop-color="#dc4416"/><stop offset="0.407" stop-color="#dc4416"/><stop offset="0.503" stop-color="#ee7020"/><stop offset="0.571" stop-color="#b94a15"/><stop offset="0.640" stop-color="#84240a"/></linearGradient><linearGradient id="s287" gradientUnits="userSpaceOnUse" x1="0" y1="900" x2="0" y2="1120"><stop offset="0.132" stop-color="#e04818"/><stop offset="0.268" stop-color="#dc4416"/><stop offset="0.405" stop-color="#dc4416"/><stop offset="0.500" stop-color="#ee7020"/><stop offset="0.568" stop-color="#b94a15"/><stop offset="0.636" stop-color="#84240a"/></linearGradient><linearGradient id="s288" gradientUnits="userSpaceOnUse" x1="0" y1="900" x2="0" y2="1120"><stop offset="0.129" stop-color="#e04818"/><stop offset="0.266" stop-color="#dc4416"/><stop offset="0.402" stop-color="#dc4416"/><stop offset="0.497" stop-color="#ee7020"/><stop offset="0.565" stop-color="#b94a15"/><stop offset="0.633" stop-color="#84240a"/></linearGradient><linearGradient id="s289" gradientUnits="userSpaceOnUse" x1="0" y1="900" x2="0" y2="1120"><stop offset="0.127" stop-color="#e04818"/><stop offset="0.263" stop-color="#dc4416"/><stop offset="0.400" stop-color="#dc4416"/><stop offset="0.494" stop-color="#ee7020"/><stop offset="0.561" stop-color="#b94a15"/><stop offset="0.629" stop-color="#84240a"/></linearGradient><linearGradient id="s290" gradientUnits="userSpaceOnUse" x1="0" y1="900" x2="0" y2="1120"><stop offset="0.125" stop-color="#e04818"/><stop offset="0.261" stop-color="#dc4416"/><stop offset="0.398" stop-color="#dc4416"/><stop offset="0.491" stop-color="#ee7020"/><stop offset="0.558" stop-color="#b94a15"/><stop offset="0.625" stop-color="#84240a"/></linearGradient><linearGradient id="s291" gradientUnits="userSpaceOnUse" x1="0" y1="900" x2="0" y2="1120"><stop offset="0.123" stop-color="#e04818"/><stop offset="0.259" stop-color="#dc4416"/><stop offset="0.395" stop-color="#dc4416"/><stop offset="0.487" stop-color="#ee7020"/><stop offset="0.554" stop-color="#b94a15"/><stop offset="0.620" stop-color="#84240a"/></linearGradient><linearGradient id="s292" gradientUnits="userSpaceOnUse" x1="0" y1="900" x2="0" y2="1120"><stop offset="0.120" stop-color="#e04818"/><stop offset="0.257" stop-color="#dc4416"/><stop offset="0.393" stop-color="#dc4416"/><stop offset="0.484" stop-color="#ee7020"/><stop offset="0.550" stop-color="#b94a15"/><stop offset="0.616" stop-color="#84240a"/></linearGradient><linearGradient id="s293" gradientUnits="userSpaceOnUse" x1="0" y1="900" x2="0" y2="1120"><stop offset="0.118" stop-color="#e04818"/><stop offset="0.255" stop-color="#dc4416"/><stop offset="0.391" stop-color="#dc4416"/><stop offset="0.481" stop-color="#ee7020"/><stop offset="0.546" stop-color="#b94a15"/><stop offset="0.611" stop-color="#84240a"/></linearGradient><linearGradient id="s294" gradientUnits="userSpaceOnUse" x1="0" y1="900" x2="0" y2="1120"><stop offset="0.116" stop-color="#e04818"/><stop offset="0.252" stop-color="#dc4416"/><stop offset="0.389" stop-color="#dc4416"/><stop offset="0.478" stop-color="#ed6f20"/><stop offset="0.542" stop-color="#b94a15"/><stop offset="0.606" stop-color="#84240a"/></linearGradient><linearGradient id="s295" gradientUnits="userSpaceOnUse" x1="0" y1="900" x2="0" y2="1120"><stop offset="0.114" stop-color="#e04818"/><stop offset="0.250" stop-color="#dc4416"/><stop offset="0.387" stop-color="#dc4416"/><stop offset="0.474" stop-color="#ed6f20"/><stop offset="0.538" stop-color="#b94a15"/><stop offset="0.601" stop-color="#84240a"/></linearGradient><linearGradient id="s296" gradientUnits="userSpaceOnUse" x1="0" y1="900" x2="0" y2="1120"><stop offset="0.112" stop-color="#e04818"/><stop offset="0.248" stop-color="#dc4416"/><stop offset="0.384" stop-color="#dc4416"/><stop offset="0.471" stop-color="#ed6f20"/><stop offset="0.533" stop-color="#b94a15"/><stop offset="0.596" stop-color="#84240a"/></linearGradient><linearGradient id="s297" gradientUnits="userSpaceOnUse" x1="0" y1="900" x2="0" y2="1120"><stop offset="0.110" stop-color="#e04818"/><stop offset="0.246" stop-color="#dc4416"/><stop offset="0.382" stop-color="#dc4416"/><stop offset="0.467" stop-color="#ed6f20"/><stop offset="0.529" stop-color="#b84915"/><stop offset="0.590" stop-color="#84240a"/></linearGradient><linearGradient id="s298" gradientUnits="userSpaceOnUse" x1="0" y1="900" x2="0" y2="1120"><stop offset="0.107" stop-color="#e04818"/><stop offset="0.244" stop-color="#dc4416"/><stop offset="0.380" stop-color="#dc4416"/><stop offset="0.464" stop-color="#ed6f20"/><stop offset="0.524" stop-color="#b84915"/><stop offset="0.585" stop-color="#84240a"/></linearGradient><linearGradient id="s299" gradientUnits="userSpaceOnUse" x1="0" y1="900" x2="0" y2="1120"><stop offset="0.105" stop-color="#e04818"/><stop offset="0.242" stop-color="#dc4416"/><stop offset="0.378" stop-color="#dc4416"/><stop offset="0.460" stop-color="#ec6e1f"/><stop offset="0.520" stop-color="#b84915"/><stop offset="0.579" stop-color="#84240a"/></linearGradient><linearGradient id="s300" gradientUnits="userSpaceOnUse" x1="0" y1="900" x2="0" y2="1120"><stop offset="0.103" stop-color="#e04818"/><stop offset="0.239" stop-color="#dc4416"/><stop offset="0.376" stop-color="#dc4416"/><stop offset="0.457" stop-color="#ec6e1f"/><stop offset="0.515" stop-color="#b84915"/><stop offset="0.573" stop-color="#84240a"/></linearGradient><linearGradient id="s301" gradientUnits="userSpaceOnUse" x1="0" y1="900" x2="0" y2="1120"><stop offset="0.101" stop-color="#e04818"/><stop offset="0.237" stop-color="#dc4416"/><stop offset="0.374" stop-color="#dc4416"/><stop offset="0.453" stop-color="#ec6e1f"/><stop offset="0.510" stop-color="#b84915"/><stop offset="0.567" stop-color="#84240a"/></linearGradient><linearGradient id="s302" gradientUnits="userSpaceOnUse" x1="0" y1="900" x2="0" y2="1120"><stop offset="0.099" stop-color="#e04818"/><stop offset="0.235" stop-color="#dc4416"/><stop offset="0.371" stop-color="#dc4416"/><stop offset="0.449" stop-color="#ec6e1f"/><stop offset="0.505" stop-color="#b84915"/><stop offset="0.561" stop-color="#84240a"/></linearGradient><linearGradient id="s303" gradientUnits="userSpaceOnUse" x1="0" y1="900" x2="0" y2="1120"><stop offset="0.096" stop-color="#e04818"/><stop offset="0.233" stop-color="#dc4416"/><stop offset="0.369" stop-color="#dc4416"/><stop offset="0.445" stop-color="#eb6d1f"/><stop offset="0.500" stop-color="#b84915"/><stop offset="0.555" stop-color="#84240a"/></linearGradient><linearGradient id="s304" gradientUnits="userSpaceOnUse" x1="0" y1="900" x2="0" y2="1120"><stop offset="0.094" stop-color="#e04818"/><stop offset="0.230" stop-color="#dc4416"/><stop offset="0.367" stop-color="#dc4416"/><stop offset="0.442" stop-color="#eb6d1f"/><stop offset="0.495" stop-color="#b74814"/><stop offset="0.549" stop-color="#84240a"/></linearGradient><linearGradient id="s305" gradientUnits="userSpaceOnUse" x1="0" y1="900" x2="0" y2="1120"><stop offset="0.091" stop-color="#e04818"/><stop offset="0.228" stop-color="#dc4416"/><stop offset="0.364" stop-color="#dc4416"/><stop offset="0.438" stop-color="#eb6d1f"/><stop offset="0.490" stop-color="#b74814"/><stop offset="0.543" stop-color="#84240a"/></linearGradient><linearGradient id="s306" gradientUnits="userSpaceOnUse" x1="0" y1="900" x2="0" y2="1120"><stop offset="0.089" stop-color="#e04818"/><stop offset="0.225" stop-color="#dc4416"/><stop offset="0.362" stop-color="#dc4416"/><stop offset="0.434" stop-color="#ea6c1f"/><stop offset="0.485" stop-color="#b74814"/><stop offset="0.537" stop-color="#84240a"/></linearGradient><linearGradient id="s307" gradientUnits="userSpaceOnUse" x1="0" y1="900" x2="0" y2="1120"><stop offset="0.087" stop-color="#e04818"/><stop offset="0.223" stop-color="#dc4416"/><stop offset="0.359" stop-color="#dc4416"/><stop offset="0.430" stop-color="#ea6c1f"/><stop offset="0.480" stop-color="#b74814"/><stop offset="0.531" stop-color="#84240a"/></linearGradient><linearGradient id="s308" gradientUnits="userSpaceOnUse" x1="0" y1="900" x2="0" y2="1120"><stop offset="0.084" stop-color="#e04818"/><stop offset="0.220" stop-color="#dc4416"/><stop offset="0.357" stop-color="#dc4416"/><stop offset="0.426" stop-color="#ea6c1f"/><stop offset="0.475" stop-color="#b74814"/><stop offset="0.524" stop-color="#84240a"/></linearGradient><linearGradient id="s309" gradientUnits="userSpaceOnUse" x1="0" y1="900" x2="0" y2="1120"><stop offset="0.081" stop-color="#e04818"/><stop offset="0.218" stop-color="#dc4416"/><stop offset="0.354" stop-color="#dc4416"/><stop offset="0.422" stop-color="#e96b1e"/><stop offset="0.470" stop-color="#b74814"/><stop offset="0.518" stop-color="#84240a"/></linearGradient><linearGradient id="s310" gradientUnits="userSpaceOnUse" x1="0" y1="900" x2="0" y2="1120"><stop offset="0.078" stop-color="#e04818"/><stop offset="0.215" stop-color="#dc4416"/><stop offset="0.351" stop-color="#dc4416"/><stop offset="0.418" stop-color="#e96b1e"/><stop offset="0.465" stop-color="#b64714"/><stop offset="0.512" stop-color="#84240a"/></linearGradient><linearGradient id="s311" gradientUnits="userSpaceOnUse" x1="0" y1="900" x2="0" y2="1120"><stop offset="0.076" stop-color="#e04818"/><stop offset="0.212" stop-color="#dc4416"/><stop offset="0.348" stop-color="#dc4416"/><stop offset="0.413" stop-color="#e86a1e"/><stop offset="0.460" stop-color="#b64714"/><stop offset="0.506" stop-color="#84240a"/></linearGradient><linearGradient id="s312" gradientUnits="userSpaceOnUse" x1="0" y1="900" x2="0" y2="1120"><stop offset="0.073" stop-color="#e04818"/><stop offset="0.209" stop-color="#dc4416"/><stop offset="0.345" stop-color="#dc4416"/><stop offset="0.409" stop-color="#e86a1e"/><stop offset="0.455" stop-color="#b64714"/><stop offset="0.500" stop-color="#84240a"/></linearGradient><linearGradient id="s313" gradientUnits="userSpaceOnUse" x1="0" y1="900" x2="0" y2="1120"><stop offset="0.070" stop-color="#e04818"/><stop offset="0.206" stop-color="#dc4416"/><stop offset="0.342" stop-color="#dc4416"/><stop offset="0.405" stop-color="#e86a1e"/><stop offset="0.449" stop-color="#b64714"/><stop offset="0.494" stop-color="#84240a"/></linearGradient><linearGradient id="s314" gradientUnits="userSpaceOnUse" x1="0" y1="900" x2="0" y2="1120"><stop offset="0.066" stop-color="#e04818"/><stop offset="0.203" stop-color="#dc4416"/><stop offset="0.339" stop-color="#dc4416"/><stop offset="0.400" stop-color="#e7691e"/><stop offset="0.444" stop-color="#b54614"/><stop offset="0.487" stop-color="#84240a"/></linearGradient><linearGradient id="s315" gradientUnits="userSpaceOnUse" x1="0" y1="900" x2="0" y2="1120"><stop offset="0.063" stop-color="#e04818"/><stop offset="0.199" stop-color="#dc4416"/><stop offset="0.335" stop-color="#dc4416"/><stop offset="0.395" stop-color="#e6681d"/><stop offset="0.438" stop-color="#b54614"/><stop offset="0.480" stop-color="#84240a"/></linearGradient><linearGradient id="s316" gradientUnits="userSpaceOnUse" x1="0" y1="900" x2="0" y2="1120"><stop offset="0.059" stop-color="#e04818"/><stop offset="0.195" stop-color="#dc4416"/><stop offset="0.332" stop-color="#dc4416"/><stop offset="0.390" stop-color="#e5671d"/><stop offset="0.432" stop-color="#b54514"/><stop offset="0.473" stop-color="#84240a"/></linearGradient><linearGradient id="s317" gradientUnits="userSpaceOnUse" x1="0" y1="900" x2="0" y2="1120"><stop offset="0.055" stop-color="#e04818"/><stop offset="0.191" stop-color="#dc4416"/><stop offset="0.328" stop-color="#dc4416"/><stop offset="0.385" stop-color="#e4661d"/><stop offset="0.425" stop-color="#b44513"/><stop offset="0.466" stop-color="#84240a"/></linearGradient><linearGradient id="s318" gradientUnits="userSpaceOnUse" x1="0" y1="900" x2="0" y2="1120"><stop offset="0.051" stop-color="#e04818"/><stop offset="0.187" stop-color="#dc4416"/><stop offset="0.324" stop-color="#dc4416"/><stop offset="0.379" stop-color="#e3651c"/><stop offset="0.419" stop-color="#b34413"/><stop offset="0.459" stop-color="#84240a"/></linearGradient><linearGradient id="s319" gradientUnits="userSpaceOnUse" x1="0" y1="900" x2="0" y2="1120"><stop offset="0.047" stop-color="#e04818"/><stop offset="0.183" stop-color="#dc4416"/><stop offset="0.320" stop-color="#dc4416"/><stop offset="0.373" stop-color="#e2631c"/><stop offset="0.412" stop-color="#b34413"/><stop offset="0.451" stop-color="#84240a"/></linearGradient><linearGradient id="s320" gradientUnits="userSpaceOnUse" x1="0" y1="900" x2="0" y2="1120"><stop offset="0.043" stop-color="#e04818"/><stop offset="0.179" stop-color="#dc4416"/><stop offset="0.315" stop-color="#dc4416"/><stop offset="0.368" stop-color="#e0621b"/><stop offset="0.405" stop-color="#b24313"/><stop offset="0.443" stop-color="#84240a"/></linearGradient><linearGradient id="s321" gradientUnits="userSpaceOnUse" x1="0" y1="900" x2="0" y2="1120"><stop offset="0.038" stop-color="#e04818"/><stop offset="0.175" stop-color="#dc4416"/><stop offset="0.311" stop-color="#dc4416"/><stop offset="0.362" stop-color="#df601b"/><stop offset="0.399" stop-color="#b14212"/><stop offset="0.435" stop-color="#84240a"/></linearGradient><linearGradient id="s322" gradientUnits="userSpaceOnUse" x1="0" y1="900" x2="0" y2="1120"><stop offset="0.034" stop-color="#e04818"/><stop offset="0.170" stop-color="#dc4416"/><stop offset="0.307" stop-color="#dc4416"/><stop offset="0.356" stop-color="#de5f1b"/><stop offset="0.392" stop-color="#b14112"/><stop offset="0.428" stop-color="#84240a"/></linearGradient><linearGradient id="s323" gradientUnits="userSpaceOnUse" x1="0" y1="900" x2="0" y2="1120"><stop offset="0.029" stop-color="#e04818"/><stop offset="0.166" stop-color="#dc4416"/><stop offset="0.302" stop-color="#dc4416"/><stop offset="0.350" stop-color="#dc5d1a"/><stop offset="0.385" stop-color="#b04112"/><stop offset="0.420" stop-color="#84240a"/></linearGradient><linearGradient id="s324" gradientUnits="userSpaceOnUse" x1="0" y1="900" x2="0" y2="1120"><stop offset="0.025" stop-color="#e04818"/><stop offset="0.161" stop-color="#dc4416"/><stop offset="0.298" stop-color="#dc4416"/><stop offset="0.344" stop-color="#db5c1a"/><stop offset="0.378" stop-color="#af4012"/><stop offset="0.412" stop-color="#84240a"/></linearGradient><linearGradient id="s325" gradientUnits="userSpaceOnUse" x1="0" y1="900" x2="0" y2="1120"><stop offset="0.020" stop-color="#e04818"/><stop offset="0.157" stop-color="#dc4416"/><stop offset="0.293" stop-color="#dc4416"/><stop offset="0.338" stop-color="#d95a19"/><stop offset="0.372" stop-color="#af3f12"/><stop offset="0.405" stop-color="#84240a"/></linearGradient><linearGradient id="s326" gradientUnits="userSpaceOnUse" x1="0" y1="900" x2="0" y2="1120"><stop offset="0.016" stop-color="#e04818"/><stop offset="0.152" stop-color="#dc4416"/><stop offset="0.289" stop-color="#dc4416"/><stop offset="0.333" stop-color="#d85919"/><stop offset="0.365" stop-color="#ae3e11"/><stop offset="0.397" stop-color="#84240a"/></linearGradient><linearGradient id="s327" gradientUnits="userSpaceOnUse" x1="0" y1="900" x2="0" y2="1120"><stop offset="0.011" stop-color="#e04818"/><stop offset="0.148" stop-color="#dc4416"/><stop offset="0.284" stop-color="#dc4416"/><stop offset="0.327" stop-color="#d75718"/><stop offset="0.358" stop-color="#ad3e11"/><stop offset="0.390" stop-color="#84240a"/></linearGradient><linearGradient id="s328" gradientUnits="userSpaceOnUse" x1="0" y1="900" x2="0" y2="1120"><stop offset="0.007" stop-color="#e04818"/><stop offset="0.143" stop-color="#dc4416"/><stop offset="0.280" stop-color="#dc4416"/><stop offset="0.322" stop-color="#d55618"/><stop offset="0.352" stop-color="#ad3d11"/><stop offset="0.383" stop-color="#84240a"/></linearGradient><linearGradient id="s329" gradientUnits="userSpaceOnUse" x1="0" y1="900" x2="0" y2="1120"><stop offset="0.003" stop-color="#e04818"/><stop offset="0.139" stop-color="#dc4416"/><stop offset="0.275" stop-color="#dc4416"/><stop offset="0.316" stop-color="#d45517"/><stop offset="0.346" stop-color="#ac3c11"/><stop offset="0.376" stop-color="#84240a"/></linearGradient><linearGradient id="s330" gradientUnits="userSpaceOnUse" x1="0" y1="900" x2="0" y2="1120"><stop offset="0.000" stop-color="#e04818"/><stop offset="0.135" stop-color="#dc4416"/><stop offset="0.271" stop-color="#dc4416"/><stop offset="0.311" stop-color="#d35317"/><stop offset="0.340" stop-color="#ac3c11"/><stop offset="0.370" stop-color="#84240a"/></linearGradient><linearGradient id="s331" gradientUnits="userSpaceOnUse" x1="0" y1="900" x2="0" y2="1120"><stop offset="0.000" stop-color="#e04818"/><stop offset="0.131" stop-color="#dc4416"/><stop offset="0.267" stop-color="#dc4416"/><stop offset="0.306" stop-color="#d25217"/><stop offset="0.335" stop-color="#ab3b10"/><stop offset="0.364" stop-color="#84240a"/></linearGradient><linearGradient id="s332" gradientUnits="userSpaceOnUse" x1="0" y1="900" x2="0" y2="1120"><stop offset="0.000" stop-color="#e04818"/><stop offset="0.127" stop-color="#dc4416"/><stop offset="0.263" stop-color="#dc4416"/><stop offset="0.301" stop-color="#d15216"/><stop offset="0.330" stop-color="#ab3b10"/><stop offset="0.358" stop-color="#84240a"/></linearGradient><linearGradient id="s333" gradientUnits="userSpaceOnUse" x1="0" y1="900" x2="0" y2="1120"><stop offset="0.000" stop-color="#e04818"/><stop offset="0.123" stop-color="#dc4416"/><stop offset="0.259" stop-color="#dc4416"/><stop offset="0.297" stop-color="#d15116"/><stop offset="0.325" stop-color="#aa3a10"/><stop offset="0.353" stop-color="#84240a"/></linearGradient><linearGradient id="s334" gradientUnits="userSpaceOnUse" x1="0" y1="900" x2="0" y2="1120"><stop offset="0.000" stop-color="#e04818"/><stop offset="0.119" stop-color="#dc4416"/><stop offset="0.256" stop-color="#dc4416"/><stop offset="0.293" stop-color="#d05016"/><stop offset="0.320" stop-color="#aa3a10"/><stop offset="0.348" stop-color="#84240a"/></linearGradient><linearGradient id="s335" gradientUnits="userSpaceOnUse" x1="0" y1="900" x2="0" y2="1120"><stop offset="0.000" stop-color="#e04818"/><stop offset="0.116" stop-color="#dc4416"/><stop offset="0.252" stop-color="#dc4416"/><stop offset="0.289" stop-color="#d05016"/><stop offset="0.316" stop-color="#aa3a10"/><stop offset="0.344" stop-color="#84240a"/></linearGradient><linearGradient id="s336" gradientUnits="userSpaceOnUse" x1="0" y1="900" x2="0" y2="1120"><stop offset="0.000" stop-color="#e04818"/><stop offset="0.113" stop-color="#dc4416"/><stop offset="0.249" stop-color="#dc4416"/><stop offset="0.286" stop-color="#d05016"/><stop offset="0.313" stop-color="#aa3a10"/><stop offset="0.340" stop-color="#84240a"/></linearGradient><linearGradient id="s337" gradientUnits="userSpaceOnUse" x1="0" y1="900" x2="0" y2="1120"><stop offset="0.000" stop-color="#e04818"/><stop offset="0.110" stop-color="#dc4416"/><stop offset="0.247" stop-color="#dc4416"/><stop offset="0.283" stop-color="#d05016"/><stop offset="0.310" stop-color="#aa3a10"/><stop offset="0.337" stop-color="#84240a"/></linearGradient><linearGradient id="s338" gradientUnits="userSpaceOnUse" x1="0" y1="900" x2="0" y2="1120"><stop offset="0.000" stop-color="#e04818"/><stop offset="0.108" stop-color="#dc4416"/><stop offset="0.245" stop-color="#dc4416"/><stop offset="0.281" stop-color="#d05116"/><stop offset="0.308" stop-color="#aa3a10"/><stop offset="0.335" stop-color="#84240a"/></linearGradient><linearGradient id="s339" gradientUnits="userSpaceOnUse" x1="0" y1="900" x2="0" y2="1120"><stop offset="0.000" stop-color="#e04818"/><stop offset="0.106" stop-color="#dc4416"/><stop offset="0.243" stop-color="#dc4416"/><stop offset="0.279" stop-color="#d05116"/><stop offset="0.306" stop-color="#aa3b10"/><stop offset="0.333" stop-color="#84240a"/></linearGradient><linearGradient id="s340" gradientUnits="userSpaceOnUse" x1="0" y1="900" x2="0" y2="1120"><stop offset="0.000" stop-color="#e04818"/><stop offset="0.103" stop-color="#dc4416"/><stop offset="0.240" stop-color="#dc4416"/><stop offset="0.276" stop-color="#d05216"/><stop offset="0.303" stop-color="#aa3b10"/><stop offset="0.330" stop-color="#84240a"/></linearGradient><linearGradient id="s341" gradientUnits="userSpaceOnUse" x1="0" y1="900" x2="0" y2="1120"><stop offset="0.000" stop-color="#e04818"/><stop offset="0.098" stop-color="#dc4416"/><stop offset="0.235" stop-color="#dc4416"/><stop offset="0.271" stop-color="#d05216"/><stop offset="0.299" stop-color="#aa3b10"/><stop offset="0.326" stop-color="#84240a"/></linearGradient><linearGradient id="s342" gradientUnits="userSpaceOnUse" x1="0" y1="900" x2="0" y2="1120"><stop offset="0.000" stop-color="#e04818"/><stop offset="0.087" stop-color="#dc4416"/><stop offset="0.224" stop-color="#dc4416"/><stop offset="0.264" stop-color="#c84f15"/><stop offset="0.290" stop-color="#a63910"/><stop offset="0.315" stop-color="#84240a"/></linearGradient><linearGradient id="s343" gradientUnits="userSpaceOnUse" x1="0" y1="900" x2="0" y2="1120"><stop offset="0.000" stop-color="#e04818"/><stop offset="0.072" stop-color="#dc4416"/><stop offset="0.208" stop-color="#dc4416"/><stop offset="0.253" stop-color="#c04b14"/><stop offset="0.276" stop-color="#a2370f"/><stop offset="0.300" stop-color="#84240a"/></linearGradient><linearGradient id="s344" gradientUnits="userSpaceOnUse" x1="0" y1="900" x2="0" y2="1120"><stop offset="0.000" stop-color="#e04818"/><stop offset="0.053" stop-color="#dc4416"/><stop offset="0.190" stop-color="#dc4416"/><stop offset="0.233" stop-color="#c04814"/><stop offset="0.256" stop-color="#a2360f"/><stop offset="0.279" stop-color="#84240a"/></linearGradient><linearGradient id="s345" gradientUnits="userSpaceOnUse" x1="0" y1="900" x2="0" y2="1120"><stop offset="0.000" stop-color="#e04818"/><stop offset="0.031" stop-color="#dc4416"/><stop offset="0.167" stop-color="#dc4416"/><stop offset="0.203" stop-color="#c04614"/><stop offset="0.228" stop-color="#a2350f"/><stop offset="0.253" stop-color="#84240a"/></linearGradient><linearGradient id="s346" gradientUnits="userSpaceOnUse" x1="0" y1="900" x2="0" y2="1120"><stop offset="0.000" stop-color="#e04818"/><stop offset="0.015" stop-color="#dc4416"/><stop offset="0.152" stop-color="#dc4416"/><stop offset="0.183" stop-color="#c04314"/><stop offset="0.208" stop-color="#a2340f"/><stop offset="0.232" stop-color="#84240a"/></linearGradient><linearGradient id="s347" gradientUnits="userSpaceOnUse" x1="0" y1="900" x2="0" y2="1120"><stop offset="0.000" stop-color="#e04818"/><stop offset="0.005" stop-color="#dc4416"/><stop offset="0.141" stop-color="#dc4416"/><stop offset="0.171" stop-color="#bd4113"/><stop offset="0.194" stop-color="#a0320f"/><stop offset="0.217" stop-color="#84240a"/></linearGradient><linearGradient id="s348" gradientUnits="userSpaceOnUse" x1="0" y1="900" x2="0" y2="1120"><stop offset="0.000" stop-color="#e04818"/><stop offset="0.000" stop-color="#dc4416"/><stop offset="0.133" stop-color="#dc4416"/><stop offset="0.161" stop-color="#b63e12"/><stop offset="0.182" stop-color="#9d310e"/><stop offset="0.204" stop-color="#84240a"/></linearGradient><linearGradient id="s349" gradientUnits="userSpaceOnUse" x1="0" y1="900" x2="0" y2="1120"><stop offset="0.000" stop-color="#e04818"/><stop offset="0.000" stop-color="#dc4416"/><stop offset="0.128" stop-color="#dc4416"/><stop offset="0.155" stop-color="#ad3b11"/><stop offset="0.175" stop-color="#99300d"/><stop offset="0.194" stop-color="#84240a"/></linearGradient><linearGradient id="s350" gradientUnits="userSpaceOnUse" x1="0" y1="900" x2="0" y2="1120"><stop offset="0.000" stop-color="#e04818"/><stop offset="0.000" stop-color="#dc4416"/><stop offset="0.128" stop-color="#dc4416"/><stop offset="0.155" stop-color="#a3390f"/><stop offset="0.172" stop-color="#932e0d"/><stop offset="0.189" stop-color="#84240a"/></linearGradient><linearGradient id="s351" gradientUnits="userSpaceOnUse" x1="0" y1="900" x2="0" y2="1120"><stop offset="0.000" stop-color="#e04818"/><stop offset="0.000" stop-color="#dc4416"/><stop offset="0.135" stop-color="#dc4416"/><stop offset="0.163" stop-color="#98360d"/><stop offset="0.176" stop-color="#8e2d0c"/><stop offset="0.189" stop-color="#84240a"/></linearGradient><linearGradient id="s352" gradientUnits="userSpaceOnUse" x1="0" y1="900" x2="0" y2="1120"><stop offset="0.000" stop-color="#e04818"/><stop offset="0.013" stop-color="#dc4416"/><stop offset="0.149" stop-color="#dc4416"/><stop offset="0.179" stop-color="#8f330c"/><stop offset="0.188" stop-color="#8a2b0b"/><stop offset="0.197" stop-color="#84240a"/></linearGradient><linearGradient id="s353" gradientUnits="userSpaceOnUse" x1="0" y1="900" x2="0" y2="1120"><stop offset="0.000" stop-color="#e04818"/><stop offset="0.037" stop-color="#dc4416"/><stop offset="0.173" stop-color="#dc4416"/><stop offset="0.206" stop-color="#88300b"/><stop offset="0.209" stop-color="#862a0a"/><stop offset="0.212" stop-color="#84240a"/></linearGradient><linearGradient id="s354" gradientUnits="userSpaceOnUse" x1="0" y1="900" x2="0" y2="1120"><stop offset="0.000" stop-color="#e04818"/><stop offset="0.072" stop-color="#dc4416"/><stop offset="0.209" stop-color="#dc4416"/><stop offset="0.246" stop-color="#842c0a"/><stop offset="0.241" stop-color="#84280a"/><stop offset="0.236" stop-color="#84240a"/></linearGradient>
</defs>
<g clip-path="url(#bc)"><g filter="url(#hb)" shape-rendering="crispEdges">
<rect x="10" y="900" width="8" height="220" fill="url(#s0)"/><rect x="18" y="900" width="8" height="220" fill="url(#s1)"/><rect x="26" y="900" width="8" height="220" fill="url(#s2)"/><rect x="34" y="900" width="8" height="220" fill="url(#s3)"/><rect x="42" y="900" width="8" height="220" fill="url(#s4)"/><rect x="50" y="900" width="8" height="220" fill="url(#s5)"/><rect x="58" y="900" width="8" height="220" fill="url(#s6)"/><rect x="66" y="900" width="8" height="220" fill="url(#s7)"/><rect x="74" y="900" width="8" height="220" fill="url(#s8)"/><rect x="82" y="900" width="8" height="220" fill="url(#s9)"/><rect x="90" y="900" width="8" height="220" fill="url(#s10)"/><rect x="98" y="900" width="8" height="220" fill="url(#s11)"/><rect x="106" y="900" width="8" height="220" fill="url(#s12)"/><rect x="114" y="900" width="8" height="220" fill="url(#s13)"/><rect x="122" y="900" width="8" height="220" fill="url(#s14)"/><rect x="130" y="900" width="8" height="220" fill="url(#s15)"/><rect x="138" y="900" width="8" height="220" fill="url(#s16)"/><rect x="146" y="900" width="8" height="220" fill="url(#s17)"/><rect x="154" y="900" width="8" height="220" fill="url(#s18)"/><rect x="162" y="900" width="8" height="220" fill="url(#s19)"/><rect x="170" y="900" width="8" height="220" fill="url(#s20)"/><rect x="178" y="900" width="8" height="220" fill="url(#s21)"/><rect x="186" y="900" width="8" height="220" fill="url(#s22)"/><rect x="194" y="900" width="8" height="220" fill="url(#s23)"/><rect x="202" y="900" width="8" height="220" fill="url(#s24)"/><rect x="210" y="900" width="8" height="220" fill="url(#s25)"/><rect x="218" y="900" width="8" height="220" fill="url(#s26)"/><rect x="226" y="900" width="8" height="220" fill="url(#s27)"/><rect x="234" y="900" width="8" height="220" fill="url(#s28)"/><rect x="242" y="900" width="8" height="220" fill="url(#s29)"/><rect x="250" y="900" width="8" height="220" fill="url(#s30)"/><rect x="258" y="900" width="8" height="220" fill="url(#s31)"/><rect x="266" y="900" width="8" height="220" fill="url(#s32)"/><rect x="274" y="900" width="8" height="220" fill="url(#s33)"/><rect x="282" y="900" width="8" height="220" fill="url(#s34)"/><rect x="290" y="900" width="8" height="220" fill="url(#s35)"/><rect x="298" y="900" width="8" height="220" fill="url(#s36)"/><rect x="306" y="900" width="8" height="220" fill="url(#s37)"/><rect x="314" y="900" width="8" height="220" fill="url(#s38)"/><rect x="322" y="900" width="8" height="220" fill="url(#s39)"/><rect x="330" y="900" width="8" height="220" fill="url(#s40)"/><rect x="338" y="900" width="8" height="220" fill="url(#s41)"/><rect x="346" y="900" width="8" height="220" fill="url(#s42)"/><rect x="354" y="900" width="8" height="220" fill="url(#s43)"/><rect x="362" y="900" width="8" height="220" fill="url(#s44)"/><rect x="370" y="900" width="8" height="220" fill="url(#s45)"/><rect x="378" y="900" width="8" height="220" fill="url(#s46)"/><rect x="386" y="900" width="8" height="220" fill="url(#s47)"/><rect x="394" y="900" width="8" height="220" fill="url(#s48)"/><rect x="402" y="900" width="8" height="220" fill="url(#s49)"/><rect x="410" y="900" width="8" height="220" fill="url(#s50)"/><rect x="418" y="900" width="8" height="220" fill="url(#s51)"/><rect x="426" y="900" width="8" height="220" fill="url(#s52)"/><rect x="434" y="900" width="8" height="220" fill="url(#s53)"/><rect x="442" y="900" width="8" height="220" fill="url(#s54)"/><rect x="450" y="900" width="8" height="220" fill="url(#s55)"/><rect x="458" y="900" width="8" height="220" fill="url(#s56)"/><rect x="466" y="900" width="8" height="220" fill="url(#s57)"/><rect x="474" y="900" width="8" height="220" fill="url(#s58)"/><rect x="482" y="900" width="8" height="220" fill="url(#s59)"/><rect x="490" y="900" width="8" height="220" fill="url(#s60)"/><rect x="498" y="900" width="8" height="220" fill="url(#s61)"/><rect x="506" y="900" width="8" height="220" fill="url(#s62)"/><rect x="514" y="900" width="8" height="220" fill="url(#s63)"/><rect x="522" y="900" width="8" height="220" fill="url(#s64)"/><rect x="530" y="900" width="8" height="220" fill="url(#s65)"/><rect x="538" y="900" width="8" height="220" fill="url(#s66)"/><rect x="546" y="900" width="8" height="220" fill="url(#s67)"/><rect x="554" y="900" width="8" height="220" fill="url(#s68)"/><rect x="562" y="900" width="8" height="220" fill="url(#s69)"/><rect x="570" y="900" width="8" height="220" fill="url(#s70)"/><rect x="578" y="900" width="8" height="220" fill="url(#s71)"/><rect x="586" y="900" width="8" height="220" fill="url(#s72)"/><rect x="594" y="900" width="8" height="220" fill="url(#s73)"/><rect x="602" y="900" width="8" height="220" fill="url(#s74)"/><rect x="610" y="900" width="8" height="220" fill="url(#s75)"/><rect x="618" y="900" width="8" height="220" fill="url(#s76)"/><rect x="626" y="900" width="8" height="220" fill="url(#s77)"/><rect x="634" y="900" width="8" height="220" fill="url(#s78)"/><rect x="642" y="900" width="8" height="220" fill="url(#s79)"/><rect x="650" y="900" width="8" height="220" fill="url(#s80)"/><rect x="658" y="900" width="8" height="220" fill="url(#s81)"/><rect x="666" y="900" width="8" height="220" fill="url(#s82)"/><rect x="674" y="900" width="8" height="220" fill="url(#s83)"/><rect x="682" y="900" width="8" height="220" fill="url(#s84)"/><rect x="690" y="900" width="8" height="220" fill="url(#s85)"/><rect x="698" y="900" width="8" height="220" fill="url(#s86)"/><rect x="706" y="900" width="8" height="220" fill="url(#s87)"/><rect x="714" y="900" width="8" height="220" fill="url(#s88)"/><rect x="722" y="900" width="8" height="220" fill="url(#s89)"/><rect x="730" y="900" width="8" height="220" fill="url(#s90)"/><rect x="738" y="900" width="8" height="220" fill="url(#s91)"/><rect x="746" y="900" width="8" height="220" fill="url(#s92)"/><rect x="754" y="900" width="8" height="220" fill="url(#s93)"/><rect x="762" y="900" width="8" height="220" fill="url(#s94)"/><rect x="770" y="900" width="8" height="220" fill="url(#s95)"/><rect x="778" y="900" width="8" height="220" fill="url(#s96)"/><rect x="786" y="900" width="8" height="220" fill="url(#s97)"/><rect x="794" y="900" width="8" height="220" fill="url(#s98)"/><rect x="802" y="900" width="8" height="220" fill="url(#s99)"/><rect x="810" y="900" width="8" height="220" fill="url(#s100)"/><rect x="818" y="900" width="8" height="220" fill="url(#s101)"/><rect x="826" y="900" width="8" height="220" fill="url(#s102)"/><rect x="834" y="900" width="8" height="220" fill="url(#s103)"/><rect x="842" y="900" width="8" height="220" fill="url(#s104)"/><rect x="850" y="900" width="8" height="220" fill="url(#s105)"/><rect x="858" y="900" width="8" height="220" fill="url(#s106)"/><rect x="866" y="900" width="8" height="220" fill="url(#s107)"/><rect x="874" y="900" width="8" height="220" fill="url(#s108)"/><rect x="882" y="900" width="8" height="220" fill="url(#s109)"/><rect x="890" y="900" width="8" height="220" fill="url(#s110)"/><rect x="898" y="900" width="8" height="220" fill="url(#s111)"/><rect x="906" y="900" width="8" height="220" fill="url(#s112)"/><rect x="914" y="900" width="8" height="220" fill="url(#s113)"/><rect x="922" y="900" width="8" height="220" fill="url(#s114)"/><rect x="930" y="900" width="8" height="220" fill="url(#s115)"/><rect x="938" y="900" width="8" height="220" fill="url(#s116)"/><rect x="946" y="900" width="8" height="220" fill="url(#s117)"/><rect x="954" y="900" width="8" height="220" fill="url(#s118)"/><rect x="962" y="900" width="8" height="220" fill="url(#s119)"/><rect x="970" y="900" width="8" height="220" fill="url(#s120)"/><rect x="978" y="900" width="8" height="220" fill="url(#s121)"/><rect x="986" y="900" width="8" height="220" fill="url(#s122)"/><rect x="994" y="900" width="8" height="220" fill="url(#s123)"/><rect x="1002" y="900" width="8" height="220" fill="url(#s124)"/><rect x="1010" y="900" width="8" height="220" fill="url(#s125)"/><rect x="1018" y="900" width="8" height="220" fill="url(#s126)"/><rect x="1026" y="900" width="8" height="220" fill="url(#s127)"/><rect x="1034" y="900" width="8" height="220" fill="url(#s128)"/><rect x="1042" y="900" width="8" height="220" fill="url(#s129)"/><rect x="1050" y="900" width="8" height="220" fill="url(#s130)"/><rect x="1058" y="900" width="8" height="220" fill="url(#s131)"/><rect x="1066" y="900" width="8" height="220" fill="url(#s132)"/><rect x="1074" y="900" width="8" height="220" fill="url(#s133)"/><rect x="1082" y="900" width="8" height="220" fill="url(#s134)"/><rect x="1090" y="900" width="8" height="220" fill="url(#s135)"/><rect x="1098" y="900" width="8" height="220" fill="url(#s136)"/><rect x="1106" y="900" width="8" height="220" fill="url(#s137)"/><rect x="1114" y="900" width="8" height="220" fill="url(#s138)"/><rect x="1122" y="900" width="8" height="220" fill="url(#s139)"/><rect x="1130" y="900" width="8" height="220" fill="url(#s140)"/><rect x="1138" y="900" width="8" height="220" fill="url(#s141)"/><rect x="1146" y="900" width="8" height="220" fill="url(#s142)"/><rect x="1154" y="900" width="8" height="220" fill="url(#s143)"/><rect x="1162" y="900" width="8" height="220" fill="url(#s144)"/><rect x="1170" y="900" width="8" height="220" fill="url(#s145)"/><rect x="1178" y="900" width="8" height="220" fill="url(#s146)"/><rect x="1186" y="900" width="8" height="220" fill="url(#s147)"/><rect x="1194" y="900" width="8" height="220" fill="url(#s148)"/><rect x="1202" y="900" width="8" height="220" fill="url(#s149)"/><rect x="1210" y="900" width="8" height="220" fill="url(#s150)"/><rect x="1218" y="900" width="8" height="220" fill="url(#s151)"/><rect x="1226" y="900" width="8" height="220" fill="url(#s152)"/><rect x="1234" y="900" width="8" height="220" fill="url(#s153)"/><rect x="1242" y="900" width="8" height="220" fill="url(#s154)"/><rect x="1250" y="900" width="8" height="220" fill="url(#s155)"/><rect x="1258" y="900" width="8" height="220" fill="url(#s156)"/><rect x="1266" y="900" width="8" height="220" fill="url(#s157)"/><rect x="1274" y="900" width="8" height="220" fill="url(#s158)"/><rect x="1282" y="900" width="8" height="220" fill="url(#s159)"/><rect x="1290" y="900" width="8" height="220" fill="url(#s160)"/><rect x="1298" y="900" width="8" height="220" fill="url(#s161)"/><rect x="1306" y="900" width="8" height="220" fill="url(#s162)"/><rect x="1314" y="900" width="8" height="220" fill="url(#s163)"/><rect x="1322" y="900" width="8" height="220" fill="url(#s164)"/><rect x="1330" y="900" width="8" height="220" fill="url(#s165)"/><rect x="1338" y="900" width="8" height="220" fill="url(#s166)"/><rect x="1346" y="900" width="8" height="220" fill="url(#s167)"/><rect x="1354" y="900" width="8" height="220" fill="url(#s168)"/><rect x="1362" y="900" width="8" height="220" fill="url(#s169)"/><rect x="1370" y="900" width="8" height="220" fill="url(#s170)"/><rect x="1378" y="900" width="8" height="220" fill="url(#s171)"/><rect x="1386" y="900" width="8" height="220" fill="url(#s172)"/><rect x="1394" y="900" width="8" height="220" fill="url(#s173)"/><rect x="1402" y="900" width="8" height="220" fill="url(#s174)"/><rect x="1410" y="900" width="8" height="220" fill="url(#s175)"/><rect x="1418" y="900" width="8" height="220" fill="url(#s176)"/><rect x="1426" y="900" width="8" height="220" fill="url(#s177)"/><rect x="1434" y="900" width="8" height="220" fill="url(#s178)"/><rect x="1442" y="900" width="8" height="220" fill="url(#s179)"/><rect x="1450" y="900" width="8" height="220" fill="url(#s180)"/><rect x="1458" y="900" width="8" height="220" fill="url(#s181)"/><rect x="1466" y="900" width="8" height="220" fill="url(#s182)"/><rect x="1474" y="900" width="8" height="220" fill="url(#s183)"/><rect x="1482" y="900" width="8" height="220" fill="url(#s184)"/><rect x="1490" y="900" width="8" height="220" fill="url(#s185)"/><rect x="1498" y="900" width="8" height="220" fill="url(#s186)"/><rect x="1506" y="900" width="8" height="220" fill="url(#s187)"/><rect x="1514" y="900" width="8" height="220" fill="url(#s188)"/><rect x="1522" y="900" width="8" height="220" fill="url(#s189)"/><rect x="1530" y="900" width="8" height="220" fill="url(#s190)"/><rect x="1538" y="900" width="8" height="220" fill="url(#s191)"/><rect x="1546" y="900" width="8" height="220" fill="url(#s192)"/><rect x="1554" y="900" width="8" height="220" fill="url(#s193)"/><rect x="1562" y="900" width="8" height="220" fill="url(#s194)"/><rect x="1570" y="900" width="8" height="220" fill="url(#s195)"/><rect x="1578" y="900" width="8" height="220" fill="url(#s196)"/><rect x="1586" y="900" width="8" height="220" fill="url(#s197)"/><rect x="1594" y="900" width="8" height="220" fill="url(#s198)"/><rect x="1602" y="900" width="8" height="220" fill="url(#s199)"/><rect x="1610" y="900" width="8" height="220" fill="url(#s200)"/><rect x="1618" y="900" width="8" height="220" fill="url(#s201)"/><rect x="1626" y="900" width="8" height="220" fill="url(#s202)"/><rect x="1634" y="900" width="8" height="220" fill="url(#s203)"/><rect x="1642" y="900" width="8" height="220" fill="url(#s204)"/><rect x="1650" y="900" width="8" height="220" fill="url(#s205)"/><rect x="1658" y="900" width="8" height="220" fill="url(#s206)"/><rect x="1666" y="900" width="8" height="220" fill="url(#s207)"/><rect x="1674" y="900" width="8" height="220" fill="url(#s208)"/><rect x="1682" y="900" width="8" height="220" fill="url(#s209)"/><rect x="1690" y="900" width="8" height="220" fill="url(#s210)"/><rect x="1698" y="900" width="8" height="220" fill="url(#s211)"/><rect x="1706" y="900" width="8" height="220" fill="url(#s212)"/><rect x="1714" y="900" width="8" height="220" fill="url(#s213)"/><rect x="1722" y="900" width="8" height="220" fill="url(#s214)"/><rect x="1730" y="900" width="8" height="220" fill="url(#s215)"/><rect x="1738" y="900" width="8" height="220" fill="url(#s216)"/><rect x="1746" y="900" width="8" height="220" fill="url(#s217)"/><rect x="1754" y="900" width="8" height="220" fill="url(#s218)"/><rect x="1762" y="900" width="8" height="220" fill="url(#s219)"/><rect x="1770" y="900" width="8" height="220" fill="url(#s220)"/><rect x="1778" y="900" width="8" height="220" fill="url(#s221)"/><rect x="1786" y="900" width="8" height="220" fill="url(#s222)"/><rect x="1794" y="900" width="8" height="220" fill="url(#s223)"/><rect x="1802" y="900" width="8" height="220" fill="url(#s224)"/><rect x="1810" y="900" width="8" height="220" fill="url(#s225)"/><rect x="1818" y="900" width="8" height="220" fill="url(#s226)"/><rect x="1826" y="900" width="8" height="220" fill="url(#s227)"/><rect x="1834" y="900" width="8" height="220" fill="url(#s228)"/><rect x="1842" y="900" width="8" height="220" fill="url(#s229)"/><rect x="1850" y="900" width="8" height="220" fill="url(#s230)"/><rect x="1858" y="900" width="8" height="220" fill="url(#s231)"/><rect x="1866" y="900" width="8" height="220" fill="url(#s232)"/><rect x="1874" y="900" width="8" height="220" fill="url(#s233)"/><rect x="1882" y="900" width="8" height="220" fill="url(#s234)"/><rect x="1890" y="900" width="8" height="220" fill="url(#s235)"/><rect x="1898" y="900" width="8" height="220" fill="url(#s236)"/><rect x="1906" y="900" width="8" height="220" fill="url(#s237)"/><rect x="1914" y="900" width="8" height="220" fill="url(#s238)"/><rect x="1922" y="900" width="8" height="220" fill="url(#s239)"/><rect x="1930" y="900" width="8" height="220" fill="url(#s240)"/><rect x="1938" y="900" width="8" height="220" fill="url(#s241)"/><rect x="1946" y="900" width="8" height="220" fill="url(#s242)"/><rect x="1954" y="900" width="8" height="220" fill="url(#s243)"/><rect x="1962" y="900" width="8" height="220" fill="url(#s244)"/><rect x="1970" y="900" width="8" height="220" fill="url(#s245)"/><rect x="1978" y="900" width="8" height="220" fill="url(#s246)"/><rect x="1986" y="900" width="8" height="220" fill="url(#s247)"/><rect x="1994" y="900" width="8" height="220" fill="url(#s248)"/><rect x="2002" y="900" width="8" height="220" fill="url(#s249)"/><rect x="2010" y="900" width="8" height="220" fill="url(#s250)"/><rect x="2018" y="900" width="8" height="220" fill="url(#s251)"/><rect x="2026" y="900" width="8" height="220" fill="url(#s252)"/><rect x="2034" y="900" width="8" height="220" fill="url(#s253)"/><rect x="2042" y="900" width="8" height="220" fill="url(#s254)"/><rect x="2050" y="900" width="8" height="220" fill="url(#s255)"/><rect x="2058" y="900" width="8" height="220" fill="url(#s256)"/><rect x="2066" y="900" width="8" height="220" fill="url(#s257)"/><rect x="2074" y="900" width="8" height="220" fill="url(#s258)"/><rect x="2082" y="900" width="8" height="220" fill="url(#s259)"/><rect x="2090" y="900" width="8" height="220" fill="url(#s260)"/><rect x="2098" y="900" width="8" height="220" fill="url(#s261)"/><rect x="2106" y="900" width="8" height="220" fill="url(#s262)"/><rect x="2114" y="900" width="8" height="220" fill="url(#s263)"/><rect x="2122" y="900" width="8" height="220" fill="url(#s264)"/><rect x="2130" y="900" width="8" height="220" fill="url(#s265)"/><rect x="2138" y="900" width="8" height="220" fill="url(#s266)"/><rect x="2146" y="900" width="8" height="220" fill="url(#s267)"/><rect x="2154" y="900" width="8" height="220" fill="url(#s268)"/><rect x="2162" y="900" width="8" height="220" fill="url(#s269)"/><rect x="2170" y="900" width="8" height="220" fill="url(#s270)"/><rect x="2178" y="900" width="8" height="220" fill="url(#s271)"/><rect x="2186" y="900" width="8" height="220" fill="url(#s272)"/><rect x="2194" y="900" width="8" height="220" fill="url(#s273)"/><rect x="2202" y="900" width="8" height="220" fill="url(#s274)"/><rect x="2210" y="900" width="8" height="220" fill="url(#s275)"/><rect x="2218" y="900" width="8" height="220" fill="url(#s276)"/><rect x="2226" y="900" width="8" height="220" fill="url(#s277)"/><rect x="2234" y="900" width="8" height="220" fill="url(#s278)"/><rect x="2242" y="900" width="8" height="220" fill="url(#s279)"/><rect x="2250" y="900" width="8" height="220" fill="url(#s280)"/><rect x="2258" y="900" width="8" height="220" fill="url(#s281)"/><rect x="2266" y="900" width="8" height="220" fill="url(#s282)"/><rect x="2274" y="900" width="8" height="220" fill="url(#s283)"/><rect x="2282" y="900" width="8" height="220" fill="url(#s284)"/><rect x="2290" y="900" width="8" height="220" fill="url(#s285)"/><rect x="2298" y="900" width="8" height="220" fill="url(#s286)"/><rect x="2306" y="900" width="8" height="220" fill="url(#s287)"/><rect x="2314" y="900" width="8" height="220" fill="url(#s288)"/><rect x="2322" y="900" width="8" height="220" fill="url(#s289)"/><rect x="2330" y="900" width="8" height="220" fill="url(#s290)"/><rect x="2338" y="900" width="8" height="220" fill="url(#s291)"/><rect x="2346" y="900" width="8" height="220" fill="url(#s292)"/><rect x="2354" y="900" width="8" height="220" fill="url(#s293)"/><rect x="2362" y="900" width="8" height="220" fill="url(#s294)"/><rect x="2370" y="900" width="8" height="220" fill="url(#s295)"/><rect x="2378" y="900" width="8" height="220" fill="url(#s296)"/><rect x="2386" y="900" width="8" height="220" fill="url(#s297)"/><rect x="2394" y="900" width="8" height="220" fill="url(#s298)"/><rect x="2402" y="900" width="8" height="220" fill="url(#s299)"/><rect x="2410" y="900" width="8" height="220" fill="url(#s300)"/><rect x="2418" y="900" width="8" height="220" fill="url(#s301)"/><rect x="2426" y="900" width="8" height="220" fill="url(#s302)"/><rect x="2434" y="900" width="8" height="220" fill="url(#s303)"/><rect x="2442" y="900" width="8" height="220" fill="url(#s304)"/><rect x="2450" y="900" width="8" height="220" fill="url(#s305)"/><rect x="2458" y="900" width="8" height="220" fill="url(#s306)"/><rect x="2466" y="900" width="8" height="220" fill="url(#s307)"/><rect x="2474" y="900" width="8" height="220" fill="url(#s308)"/><rect x="2482" y="900" width="8" height="220" fill="url(#s309)"/><rect x="2490" y="900" width="8" height="220" fill="url(#s310)"/><rect x="2498" y="900" width="8" height="220" fill="url(#s311)"/><rect x="2506" y="900" width="8" height="220" fill="url(#s312)"/><rect x="2514" y="900" width="8" height="220" fill="url(#s313)"/><rect x="2522" y="900" width="8" height="220" fill="url(#s314)"/><rect x="2530" y="900" width="8" height="220" fill="url(#s315)"/><rect x="2538" y="900" width="8" height="220" fill="url(#s316)"/><rect x="2546" y="900" width="8" height="220" fill="url(#s317)"/><rect x="2554" y="900" width="8" height="220" fill="url(#s318)"/><rect x="2562" y="900" width="8" height="220" fill="url(#s319)"/><rect x="2570" y="900" width="8" height="220" fill="url(#s320)"/><rect x="2578" y="900" width="8" height="220" fill="url(#s321)"/><rect x="2586" y="900" width="8" height="220" fill="url(#s322)"/><rect x="2594" y="900" width="8" height="220" fill="url(#s323)"/><rect x="2602" y="900" width="8" height="220" fill="url(#s324)"/><rect x="2610" y="900" width="8" height="220" fill="url(#s325)"/><rect x="2618" y="900" width="8" height="220" fill="url(#s326)"/><rect x="2626" y="900" width="8" height="220" fill="url(#s327)"/><rect x="2634" y="900" width="8" height="220" fill="url(#s328)"/><rect x="2642" y="900" width="8" height="220" fill="url(#s329)"/><rect x="2650" y="900" width="8" height="220" fill="url(#s330)"/><rect x="2658" y="900" width="8" height="220" fill="url(#s331)"/><rect x="2666" y="900" width="8" height="220" fill="url(#s332)"/><rect x="2674" y="900" width="8" height="220" fill="url(#s333)"/><rect x="2682" y="900" width="8" height="220" fill="url(#s334)"/><rect x="2690" y="900" width="8" height="220" fill="url(#s335)"/><rect x="2698" y="900" width="8" height="220" fill="url(#s336)"/><rect x="2706" y="900" width="8" height="220" fill="url(#s337)"/><rect x="2714" y="900" width="8" height="220" fill="url(#s338)"/><rect x="2722" y="900" width="8" height="220" fill="url(#s339)"/><rect x="2730" y="900" width="8" height="220" fill="url(#s340)"/><rect x="2738" y="900" width="8" height="220" fill="url(#s341)"/><rect x="2746" y="900" width="8" height="220" fill="url(#s342)"/><rect x="2754" y="900" width="8" height="220" fill="url(#s343)"/><rect x="2762" y="900" width="8" height="220" fill="url(#s344)"/><rect x="2770" y="900" width="8" height="220" fill="url(#s345)"/><rect x="2778" y="900" width="8" height="220" fill="url(#s346)"/><rect x="2786" y="900" width="8" height="220" fill="url(#s347)"/><rect x="2794" y="900" width="8" height="220" fill="url(#s348)"/><rect x="2802" y="900" width="8" height="220" fill="url(#s349)"/><rect x="2810" y="900" width="8" height="220" fill="url(#s350)"/><rect x="2818" y="900" width="8" height="220" fill="url(#s351)"/><rect x="2826" y="900" width="8" height="220" fill="url(#s352)"/><rect x="2834" y="900" width="8" height="220" fill="url(#s353)"/><rect x="2842" y="900" width="8" height="220" fill="url(#s354)"/>
</g></g>
<g clip-path="url(#bc)">
<path d="M241,1052.5 L280,1056.5 L330,1062.5 L380,1067.5 L430,1071.5 L462,1074" fill="none" stroke="#8a9818" stroke-width="3"/>
<path d="M241,1052 L262,1054" fill="none" stroke="#201008" stroke-width="2.5"/>
<path d="M190,993 Q172,1002 168.5,1014 Q167,1030 168,1046" fill="none" stroke="#7a1808" stroke-width="1.2" opacity="0.7"/><path d="M905,979 Q880,1000 877,1032 Q874,1066 875,1099" fill="none" stroke="#7a1808" stroke-width="1.2" opacity="0.7"/><path d="M1999,960 Q2022,975 2030,1000 Q2035,1030 2033,1088" fill="none" stroke="#7a1808" stroke-width="1.2" opacity="0.7"/><path d="M2684,923.5 Q2712,934 2725,957 Q2728,968 2727,979" fill="none" stroke="#7a1808" stroke-width="1.2" opacity="0.7"/>
</g>
<use href="#bp" fill="none" stroke="#6a3a30" stroke-width="1.1" opacity="0.55"/>
<path d="M51,1032 L55,1058.5 L113.5,1057 L115,1039.5" fill="none" stroke="#7a6a80" stroke-width="1.5"/>
</svg>

</body></html>
